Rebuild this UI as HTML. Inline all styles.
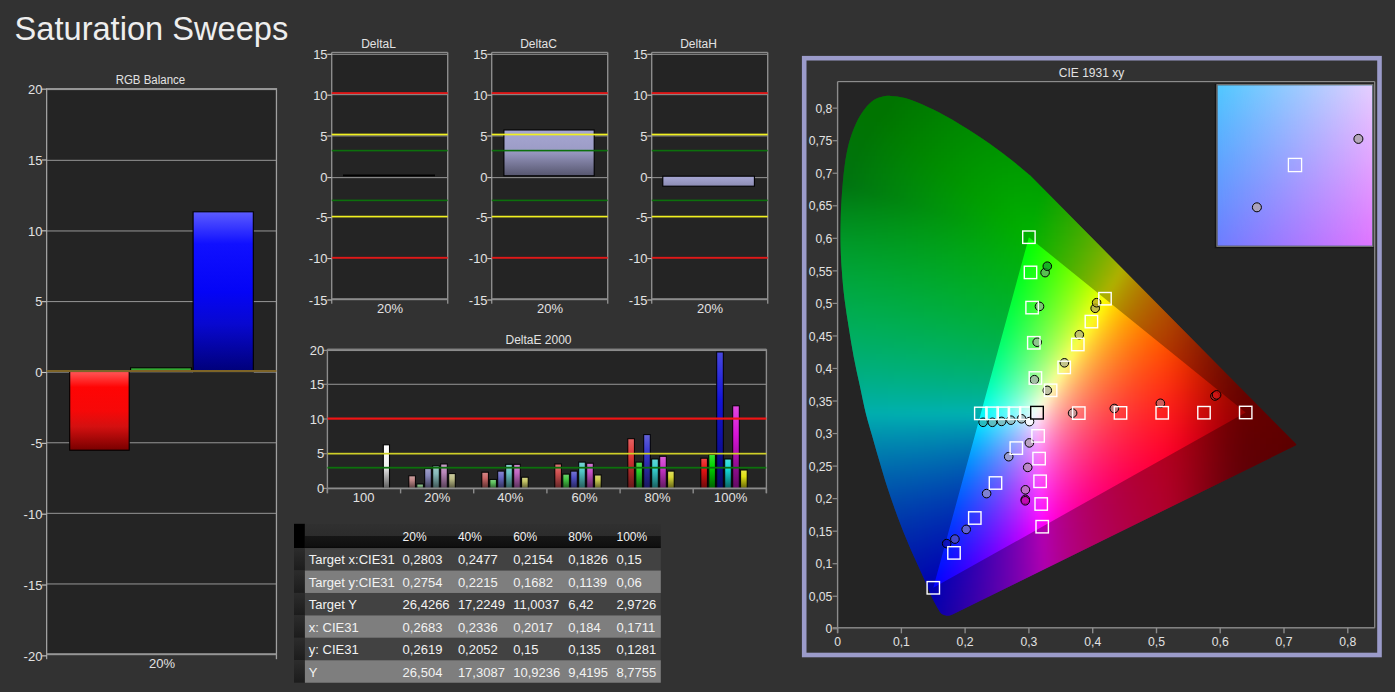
<!DOCTYPE html>
<html><head><meta charset="utf-8"><title>Saturation Sweeps</title>
<style>
html,body{margin:0;padding:0;background:#323232}
body{width:1395px;height:692px;overflow:hidden;position:relative}
svg{position:absolute;left:0;top:0;display:block}
text{font-family:"Liberation Sans",sans-serif;fill:#e2e2e2;font-size:12px}
.t{font-size:12px;text-anchor:middle}
.r{text-anchor:end;font-size:13px}
.m{text-anchor:middle;font-size:13px}
.ttl{font-size:33.7px;fill:#eeeeee}
.tb{font-size:13px;fill:#f2f2f2}
.th{font-size:12px;fill:#f2f2f2}
#cells rect{width:7px;height:7px}
</style></head><body>
<svg width="1395" height="692" viewBox="0 0 1395 692">
<defs>
<linearGradient id="gR" x1="0" y1="0" x2="0" y2="1"><stop offset="0" stop-color="#ff5858"/><stop offset="0.2" stop-color="#ff0404"/><stop offset="0.5" stop-color="#f60808"/><stop offset="0.7" stop-color="#d41010"/><stop offset="1" stop-color="#780000"/></linearGradient>
<linearGradient id="gB" x1="0" y1="0" x2="0" y2="1"><stop offset="0" stop-color="#5c5cff"/><stop offset="0.2" stop-color="#1010ff"/><stop offset="0.5" stop-color="#0404f6"/><stop offset="0.7" stop-color="#0808d0"/><stop offset="1" stop-color="#000078"/></linearGradient>
<linearGradient id="gG" x1="0" y1="0" x2="0" y2="1"><stop offset="0" stop-color="#40c040"/><stop offset="1" stop-color="#1c8a1c"/></linearGradient>
<linearGradient id="gL" x1="0" y1="0" x2="0" y2="1"><stop offset="0" stop-color="#a6a6d2"/><stop offset="0.45" stop-color="#9c9cc6"/><stop offset="1" stop-color="#56566e"/></linearGradient>
<linearGradient id="gL2" x1="0" y1="0" x2="0" y2="1"><stop offset="0" stop-color="#a8a8d4"/><stop offset="1" stop-color="#8c8cb4"/></linearGradient>

<linearGradient id="bw" x1="0" y1="0" x2="0" y2="1"><stop offset="0" stop-color="#ffffff"/><stop offset="0.5" stop-color="#f0f0f0"/><stop offset="1" stop-color="#5a5a5a"/></linearGradient>
<linearGradient id="b0r" x1="0" y1="0" x2="0" y2="1"><stop offset="0" stop-color="#cda1a1"/><stop offset="0.35" stop-color="#bf8787"/><stop offset="1" stop-color="#563d3d"/></linearGradient>
<linearGradient id="b0g" x1="0" y1="0" x2="0" y2="1"><stop offset="0" stop-color="#9ec99e"/><stop offset="0.35" stop-color="#82ba82"/><stop offset="1" stop-color="#3a543a"/></linearGradient>
<linearGradient id="b0b" x1="0" y1="0" x2="0" y2="1"><stop offset="0" stop-color="#a1a1c9"/><stop offset="0.35" stop-color="#8787ba"/><stop offset="1" stop-color="#3d3d54"/></linearGradient>
<linearGradient id="b0c" x1="0" y1="0" x2="0" y2="1"><stop offset="0" stop-color="#a1c9c9"/><stop offset="0.35" stop-color="#87baba"/><stop offset="1" stop-color="#3d5454"/></linearGradient>
<linearGradient id="b0m" x1="0" y1="0" x2="0" y2="1"><stop offset="0" stop-color="#c9a1c9"/><stop offset="0.35" stop-color="#ba87ba"/><stop offset="1" stop-color="#543d54"/></linearGradient>
<linearGradient id="b0y" x1="0" y1="0" x2="0" y2="1"><stop offset="0" stop-color="#cccca1"/><stop offset="0.35" stop-color="#bdbd87"/><stop offset="1" stop-color="#55553d"/></linearGradient>
<linearGradient id="b1r" x1="0" y1="0" x2="0" y2="1"><stop offset="0" stop-color="#d68989"/><stop offset="0.35" stop-color="#cb6868"/><stop offset="1" stop-color="#5b2f2f"/></linearGradient>
<linearGradient id="b1g" x1="0" y1="0" x2="0" y2="1"><stop offset="0" stop-color="#82cf82"/><stop offset="0.35" stop-color="#5fc25f"/><stop offset="1" stop-color="#2b572b"/></linearGradient>
<linearGradient id="b1b" x1="0" y1="0" x2="0" y2="1"><stop offset="0" stop-color="#8989cf"/><stop offset="0.35" stop-color="#6868c2"/><stop offset="1" stop-color="#2f2f57"/></linearGradient>
<linearGradient id="b1c" x1="0" y1="0" x2="0" y2="1"><stop offset="0" stop-color="#89cfcf"/><stop offset="0.35" stop-color="#68c2c2"/><stop offset="1" stop-color="#2f5757"/></linearGradient>
<linearGradient id="b1m" x1="0" y1="0" x2="0" y2="1"><stop offset="0" stop-color="#cf89cf"/><stop offset="0.35" stop-color="#c268c2"/><stop offset="1" stop-color="#572f57"/></linearGradient>
<linearGradient id="b1y" x1="0" y1="0" x2="0" y2="1"><stop offset="0" stop-color="#d3d389"/><stop offset="0.35" stop-color="#c7c768"/><stop offset="1" stop-color="#5a5a2f"/></linearGradient>
<linearGradient id="b2r" x1="0" y1="0" x2="0" y2="1"><stop offset="0" stop-color="#dd7878"/><stop offset="0.35" stop-color="#d35252"/><stop offset="1" stop-color="#5f2525"/></linearGradient>
<linearGradient id="b2g" x1="0" y1="0" x2="0" y2="1"><stop offset="0" stop-color="#6fd36f"/><stop offset="0.35" stop-color="#46c746"/><stop offset="1" stop-color="#1f5a1f"/></linearGradient>
<linearGradient id="b2b" x1="0" y1="0" x2="0" y2="1"><stop offset="0" stop-color="#7878d3"/><stop offset="0.35" stop-color="#5252c7"/><stop offset="1" stop-color="#25255a"/></linearGradient>
<linearGradient id="b2c" x1="0" y1="0" x2="0" y2="1"><stop offset="0" stop-color="#78d3d3"/><stop offset="0.35" stop-color="#52c7c7"/><stop offset="1" stop-color="#255a5a"/></linearGradient>
<linearGradient id="b2m" x1="0" y1="0" x2="0" y2="1"><stop offset="0" stop-color="#d378d3"/><stop offset="0.35" stop-color="#c752c7"/><stop offset="1" stop-color="#5a255a"/></linearGradient>
<linearGradient id="b2y" x1="0" y1="0" x2="0" y2="1"><stop offset="0" stop-color="#d8d878"/><stop offset="0.35" stop-color="#cdcd52"/><stop offset="1" stop-color="#5c5c25"/></linearGradient>
<linearGradient id="b3r" x1="0" y1="0" x2="0" y2="1"><stop offset="0" stop-color="#e56262"/><stop offset="0.35" stop-color="#de3636"/><stop offset="1" stop-color="#641818"/></linearGradient>
<linearGradient id="b3g" x1="0" y1="0" x2="0" y2="1"><stop offset="0" stop-color="#57d957"/><stop offset="0.35" stop-color="#27ce27"/><stop offset="1" stop-color="#125d12"/></linearGradient>
<linearGradient id="b3b" x1="0" y1="0" x2="0" y2="1"><stop offset="0" stop-color="#6262d9"/><stop offset="0.35" stop-color="#3636ce"/><stop offset="1" stop-color="#18185d"/></linearGradient>
<linearGradient id="b3c" x1="0" y1="0" x2="0" y2="1"><stop offset="0" stop-color="#62d9d9"/><stop offset="0.35" stop-color="#36cece"/><stop offset="1" stop-color="#185d5d"/></linearGradient>
<linearGradient id="b3m" x1="0" y1="0" x2="0" y2="1"><stop offset="0" stop-color="#d962d9"/><stop offset="0.35" stop-color="#ce36ce"/><stop offset="1" stop-color="#5d185d"/></linearGradient>
<linearGradient id="b3y" x1="0" y1="0" x2="0" y2="1"><stop offset="0" stop-color="#dfdf62"/><stop offset="0.35" stop-color="#d6d636"/><stop offset="1" stop-color="#606018"/></linearGradient>
<linearGradient id="b4r" x1="0" y1="0" x2="0" y2="1"><stop offset="0" stop-color="#ef4848"/><stop offset="0.35" stop-color="#eb1414"/><stop offset="1" stop-color="#6a0909"/></linearGradient>
<linearGradient id="b4g" x1="0" y1="0" x2="0" y2="1"><stop offset="0" stop-color="#38e038"/><stop offset="0.35" stop-color="#00d700"/><stop offset="1" stop-color="#006100"/></linearGradient>
<linearGradient id="b4b" x1="0" y1="0" x2="0" y2="1"><stop offset="0" stop-color="#4848e0"/><stop offset="0.35" stop-color="#1414d7"/><stop offset="1" stop-color="#090961"/></linearGradient>
<linearGradient id="b4c" x1="0" y1="0" x2="0" y2="1"><stop offset="0" stop-color="#48e0e0"/><stop offset="0.35" stop-color="#14d7d7"/><stop offset="1" stop-color="#096161"/></linearGradient>
<linearGradient id="b4m" x1="0" y1="0" x2="0" y2="1"><stop offset="0" stop-color="#e048e0"/><stop offset="0.35" stop-color="#d714d7"/><stop offset="1" stop-color="#610961"/></linearGradient>
<linearGradient id="b4y" x1="0" y1="0" x2="0" y2="1"><stop offset="0" stop-color="#e8e848"/><stop offset="0.35" stop-color="#e1e114"/><stop offset="1" stop-color="#656509"/></linearGradient>
<linearGradient id="hd" x1="0" y1="0" x2="0" y2="1"><stop offset="0" stop-color="#303030"/><stop offset="0.49" stop-color="#2c2c2c"/><stop offset="0.51" stop-color="#161616"/><stop offset="0.9" stop-color="#101010"/><stop offset="1" stop-color="#080808"/></linearGradient>
<linearGradient id="rh" x1="0" y1="0" x2="0" y2="1"><stop offset="0" stop-color="#2c2c2c"/><stop offset="1" stop-color="#1c1c1c"/></linearGradient>
<clipPath id="lc"><path d="M946.7 615.8C946.1 615.6 944.1 615.2 943.0 614.6C941.9 614.0 941.4 613.8 940.3 612.4C939.2 611.0 938.2 609.2 936.6 606.3C935.0 603.3 933.2 600.0 930.8 594.7C928.4 589.4 925.7 582.7 922.1 574.5C918.5 566.3 913.2 555.2 909.1 545.6C905.0 536.0 901.2 526.3 897.6 516.7C894.0 507.1 890.6 497.4 887.5 487.8C884.4 478.2 881.3 467.5 878.8 458.9C876.2 450.3 874.3 443.4 872.2 436.0C870.1 428.6 868.2 422.9 866.1 414.5C864.0 406.1 861.9 395.2 859.8 385.6C857.7 376.0 855.5 366.3 853.7 356.7C851.9 347.1 850.3 337.4 848.8 327.8C847.3 318.2 845.7 308.5 844.5 298.9C843.3 289.3 842.4 279.0 841.8 270.0C841.1 261.0 840.8 253.6 840.6 245.0C840.4 236.4 840.5 226.9 840.7 218.7C840.9 210.5 841.2 204.3 841.8 195.6C842.4 186.9 843.3 175.4 844.5 166.7C845.7 158.0 846.9 150.8 848.8 143.6C850.7 136.4 853.4 129.2 856.0 123.4C858.6 117.6 861.8 112.8 864.7 108.9C867.6 105.0 870.5 102.2 873.4 100.2C876.3 98.2 879.1 97.5 882.0 96.8C884.9 96.1 886.9 95.7 890.7 95.9C894.6 96.1 899.8 96.5 905.1 97.9C910.4 99.4 915.8 101.6 922.5 104.6C929.2 107.6 936.9 111.3 945.6 116.1C954.3 120.9 964.9 127.2 974.5 133.5C984.1 139.8 994.1 146.8 1003.4 153.7C1012.6 160.6 1025.6 171.6 1030.0 175.2L1295.3 443.3Q1297.4 444.8 1295.0 445.8L953.0 614.2Q949.5 615.9 946.7 615.8Z"/></clipPath>
<filter id="bl" filterUnits="userSpaceOnUse" x="810" y="70" width="520" height="580" color-interpolation-filters="sRGB"><feGaussianBlur stdDeviation="3.2"/></filter>
<linearGradient id="iL" x1="0" y1="0" x2="0" y2="1"><stop offset="0" stop-color="#50c8ff"/><stop offset="1" stop-color="#6e7dff"/></linearGradient>
<linearGradient id="iR" x1="0" y1="0" x2="0" y2="1"><stop offset="0" stop-color="#e6ceff"/><stop offset="1" stop-color="#e074ff"/></linearGradient>
<linearGradient id="iM" x1="0" y1="0" x2="1" y2="0"><stop offset="0" stop-color="#fff" stop-opacity="0"/><stop offset="1" stop-color="#fff" stop-opacity="1"/></linearGradient>
<mask id="im" maskUnits="userSpaceOnUse" x="1217.4" y="85.2" width="155.0" height="160.6"><rect x="1217.4" y="85.2" width="155.0" height="160.6" fill="url(#iM)"/></mask>
</defs>
<text class="ttl" x="14.6" y="39.9" textLength="273.6" lengthAdjust="spacingAndGlyphs">Saturation Sweeps</text>
<rect x="46.6" y="89.1" width="229.8" height="565.1" fill="#242424"/>
<rect x="46.6" y="583.40" width="229.8" height="1.1" fill="#8c8c8c"/>
<rect x="46.6" y="512.80" width="229.8" height="1.1" fill="#8c8c8c"/>
<rect x="46.6" y="442.20" width="229.8" height="1.1" fill="#8c8c8c"/>
<rect x="46.6" y="371.60" width="229.8" height="1.1" fill="#8c8c8c"/>
<rect x="46.6" y="301.00" width="229.8" height="1.1" fill="#8c8c8c"/>
<rect x="46.6" y="230.40" width="229.8" height="1.1" fill="#8c8c8c"/>
<rect x="46.6" y="159.80" width="229.8" height="1.1" fill="#8c8c8c"/>
<rect x="46.0" y="88.1" width="1.3" height="571.1" fill="#a0a0a0"/>
<rect x="275.8" y="88.1" width="1.3" height="571.1" fill="#a0a0a0"/>
<rect x="46.6" y="88.0" width="229.8" height="2.1" fill="#969696"/>
<rect x="46.6" y="653.2" width="229.8" height="2" fill="#969696"/>
<rect x="42.0" y="655.31" width="4.5" height="1.1" fill="#c8c8c8"/>
<text class="r" x="42.4" y="660.6">-20</text>
<rect x="42.0" y="584.47" width="4.5" height="1.1" fill="#c8c8c8"/>
<text class="r" x="42.4" y="589.7">-15</text>
<rect x="42.0" y="513.63" width="4.5" height="1.1" fill="#c8c8c8"/>
<text class="r" x="42.4" y="518.9">-10</text>
<rect x="42.0" y="442.79" width="4.5" height="1.1" fill="#c8c8c8"/>
<text class="r" x="42.4" y="448.0">-5</text>
<rect x="42.0" y="371.95" width="4.5" height="1.1" fill="#c8c8c8"/>
<text class="r" x="42.4" y="377.2">0</text>
<rect x="42.0" y="301.11" width="4.5" height="1.1" fill="#c8c8c8"/>
<text class="r" x="42.4" y="306.4">5</text>
<rect x="42.0" y="230.27" width="4.5" height="1.1" fill="#c8c8c8"/>
<text class="r" x="42.4" y="235.5">10</text>
<rect x="42.0" y="159.43" width="4.5" height="1.1" fill="#c8c8c8"/>
<text class="r" x="42.4" y="164.7">15</text>
<rect x="42.0" y="88.59" width="4.5" height="1.1" fill="#c8c8c8"/>
<text class="r" x="42.4" y="93.8">20</text>
<rect x="69.7" y="371.5" width="59.5" height="78.7" fill="url(#gR)" stroke="#000" stroke-width="1.1"/>
<rect x="130.6" y="367.8" width="60.8" height="4" fill="url(#gG)" stroke="#000" stroke-width="1.1"/>
<rect x="193.1" y="211.8" width="60.2" height="160.2" fill="url(#gB)" stroke="#000" stroke-width="1.1"/>
<rect x="46.6" y="370.0" width="229.8" height="2" fill="#7d6428"/>
<text class="t" x="150.4" y="83.6" textLength="69.5" lengthAdjust="spacingAndGlyphs">RGB Balance</text>
<text class="m" x="162" y="668.3">20%</text>
<rect x="331.7" y="52.4" width="116.0" height="246.8" fill="#242424"/>
<rect x="331.7" y="53.75" width="116.0" height="1.1" fill="#8c8c8c"/>
<rect x="331.7" y="94.05" width="116.0" height="1.1" fill="#8c8c8c"/>
<rect x="331.7" y="135.35" width="116.0" height="1.1" fill="#8c8c8c"/>
<rect x="331.7" y="177.05" width="116.0" height="1.1" fill="#8c8c8c"/>
<rect x="331.0" y="52.4" width="1.4" height="251.3" fill="#8c8c8c"/>
<rect x="447.0" y="52.4" width="1.4" height="251.3" fill="#8c8c8c"/>
<rect x="331.7" y="51.8" width="116.0" height="1.3" fill="#8c8c8c"/>
<rect x="331.7" y="298.2" width="116.0" height="2" fill="#8c8c8c"/>
<rect x="343" y="174.5" width="92" height="1.8" fill="#000"/>
<rect x="331.7" y="92.15" width="116.0" height="1.9" fill="#e01818"/>
<rect x="331.7" y="256.85" width="116.0" height="1.9" fill="#e01818"/>
<rect x="331.7" y="133.65" width="116.0" height="1.7" fill="#f0f020"/>
<rect x="331.7" y="215.75" width="116.0" height="1.7" fill="#f0f020"/>
<rect x="331.7" y="149.80" width="116.0" height="1.6" fill="#0c700c"/>
<rect x="331.7" y="199.60" width="116.0" height="1.6" fill="#0c700c"/>
<rect x="327.3" y="53.75" width="4.2" height="1.1" fill="#c8c8c8"/>
<text class="r" x="327.6" y="59.0">15</text>
<rect x="327.3" y="94.65" width="4.2" height="1.1" fill="#c8c8c8"/>
<text class="r" x="327.6" y="99.9">10</text>
<rect x="327.3" y="135.45" width="4.2" height="1.1" fill="#c8c8c8"/>
<text class="r" x="327.6" y="140.7">5</text>
<rect x="327.3" y="177.05" width="4.2" height="1.1" fill="#c8c8c8"/>
<text class="r" x="327.6" y="182.3">0</text>
<rect x="327.3" y="217.05" width="4.2" height="1.1" fill="#c8c8c8"/>
<text class="r" x="327.6" y="222.3">-5</text>
<rect x="327.3" y="258.05" width="4.2" height="1.1" fill="#c8c8c8"/>
<text class="r" x="327.6" y="263.3">-10</text>
<rect x="327.3" y="299.45" width="4.2" height="1.1" fill="#c8c8c8"/>
<text class="r" x="327.6" y="304.7">-15</text>
<text class="t" x="378.5" y="47.8">DeltaL</text>
<text class="m" x="390.0" y="313.2">20%</text>
<rect x="491.7" y="52.4" width="116.0" height="246.8" fill="#242424"/>
<rect x="491.7" y="53.75" width="116.0" height="1.1" fill="#8c8c8c"/>
<rect x="491.7" y="94.05" width="116.0" height="1.1" fill="#8c8c8c"/>
<rect x="491.7" y="135.35" width="116.0" height="1.1" fill="#8c8c8c"/>
<rect x="491.7" y="177.05" width="116.0" height="1.1" fill="#8c8c8c"/>
<rect x="491.0" y="52.4" width="1.4" height="251.3" fill="#8c8c8c"/>
<rect x="607.0" y="52.4" width="1.4" height="251.3" fill="#8c8c8c"/>
<rect x="491.7" y="51.8" width="116.0" height="1.3" fill="#8c8c8c"/>
<rect x="491.7" y="298.2" width="116.0" height="2" fill="#8c8c8c"/>
<rect x="503.9" y="130" width="90.3" height="45.8" fill="url(#gL)" stroke="#000" stroke-width="1.1"/>
<rect x="491.7" y="92.15" width="116.0" height="1.9" fill="#e01818"/>
<rect x="491.7" y="256.85" width="116.0" height="1.9" fill="#e01818"/>
<rect x="491.7" y="133.65" width="116.0" height="1.7" fill="#f0f020"/>
<rect x="491.7" y="215.75" width="116.0" height="1.7" fill="#f0f020"/>
<rect x="491.7" y="149.80" width="116.0" height="1.6" fill="#0c700c"/>
<rect x="491.7" y="199.60" width="116.0" height="1.6" fill="#0c700c"/>
<rect x="487.3" y="53.75" width="4.2" height="1.1" fill="#c8c8c8"/>
<text class="r" x="487.6" y="59.0">15</text>
<rect x="487.3" y="94.65" width="4.2" height="1.1" fill="#c8c8c8"/>
<text class="r" x="487.6" y="99.9">10</text>
<rect x="487.3" y="135.45" width="4.2" height="1.1" fill="#c8c8c8"/>
<text class="r" x="487.6" y="140.7">5</text>
<rect x="487.3" y="177.05" width="4.2" height="1.1" fill="#c8c8c8"/>
<text class="r" x="487.6" y="182.3">0</text>
<rect x="487.3" y="217.05" width="4.2" height="1.1" fill="#c8c8c8"/>
<text class="r" x="487.6" y="222.3">-5</text>
<rect x="487.3" y="258.05" width="4.2" height="1.1" fill="#c8c8c8"/>
<text class="r" x="487.6" y="263.3">-10</text>
<rect x="487.3" y="299.45" width="4.2" height="1.1" fill="#c8c8c8"/>
<text class="r" x="487.6" y="304.7">-15</text>
<text class="t" x="538.5" y="47.8">DeltaC</text>
<text class="m" x="550.0" y="313.2">20%</text>
<rect x="651.7" y="52.4" width="116.0" height="246.8" fill="#242424"/>
<rect x="651.7" y="53.75" width="116.0" height="1.1" fill="#8c8c8c"/>
<rect x="651.7" y="94.05" width="116.0" height="1.1" fill="#8c8c8c"/>
<rect x="651.7" y="135.35" width="116.0" height="1.1" fill="#8c8c8c"/>
<rect x="651.7" y="177.05" width="116.0" height="1.1" fill="#8c8c8c"/>
<rect x="651.0" y="52.4" width="1.4" height="251.3" fill="#8c8c8c"/>
<rect x="767.0" y="52.4" width="1.4" height="251.3" fill="#8c8c8c"/>
<rect x="651.7" y="51.8" width="116.0" height="1.3" fill="#8c8c8c"/>
<rect x="651.7" y="298.2" width="116.0" height="2" fill="#8c8c8c"/>
<rect x="662.8" y="176.2" width="91.6" height="10" fill="url(#gL2)" stroke="#000" stroke-width="1.1"/>
<rect x="651.7" y="92.15" width="116.0" height="1.9" fill="#e01818"/>
<rect x="651.7" y="256.85" width="116.0" height="1.9" fill="#e01818"/>
<rect x="651.7" y="133.65" width="116.0" height="1.7" fill="#f0f020"/>
<rect x="651.7" y="215.75" width="116.0" height="1.7" fill="#f0f020"/>
<rect x="651.7" y="149.80" width="116.0" height="1.6" fill="#0c700c"/>
<rect x="651.7" y="199.60" width="116.0" height="1.6" fill="#0c700c"/>
<rect x="647.3" y="53.75" width="4.2" height="1.1" fill="#c8c8c8"/>
<text class="r" x="647.6" y="59.0">15</text>
<rect x="647.3" y="94.65" width="4.2" height="1.1" fill="#c8c8c8"/>
<text class="r" x="647.6" y="99.9">10</text>
<rect x="647.3" y="135.45" width="4.2" height="1.1" fill="#c8c8c8"/>
<text class="r" x="647.6" y="140.7">5</text>
<rect x="647.3" y="177.05" width="4.2" height="1.1" fill="#c8c8c8"/>
<text class="r" x="647.6" y="182.3">0</text>
<rect x="647.3" y="217.05" width="4.2" height="1.1" fill="#c8c8c8"/>
<text class="r" x="647.6" y="222.3">-5</text>
<rect x="647.3" y="258.05" width="4.2" height="1.1" fill="#c8c8c8"/>
<text class="r" x="647.6" y="263.3">-10</text>
<rect x="647.3" y="299.45" width="4.2" height="1.1" fill="#c8c8c8"/>
<text class="r" x="647.6" y="304.7">-15</text>
<text class="t" x="698.5" y="47.8">DeltaH</text>
<text class="m" x="710.0" y="313.2">20%</text>
<rect x="327.4" y="349.2" width="439.0" height="139.2" fill="#242424"/>
<rect x="327.4" y="383.75" width="439.0" height="1.1" fill="#8c8c8c"/>
<rect x="327.4" y="349.95" width="439.0" height="1.1" fill="#8c8c8c"/>
<rect x="326.7" y="349.2" width="1.4" height="143.7" fill="#8c8c8c"/>
<rect x="765.7" y="349.2" width="1.4" height="143.7" fill="#8c8c8c"/>
<rect x="327.4" y="348.6" width="439.0" height="1.3" fill="#8c8c8c"/>
<rect x="383.3" y="444.8" width="6.2" height="43.5" fill="url(#bw)" stroke="#000" stroke-width="1.1"/>
<rect x="408.8" y="475.8" width="6.6" height="12.6" fill="url(#b0r)" stroke="#000" stroke-width="1"/>
<rect x="416.8" y="484.0" width="6.6" height="4.4" fill="url(#b0g)" stroke="#000" stroke-width="1"/>
<rect x="424.7" y="468.6" width="6.6" height="19.8" fill="url(#b0b)" stroke="#000" stroke-width="1"/>
<rect x="432.7" y="465.9" width="6.6" height="22.5" fill="url(#b0c)" stroke="#000" stroke-width="1"/>
<rect x="440.7" y="464.0" width="6.6" height="24.4" fill="url(#b0m)" stroke="#000" stroke-width="1"/>
<rect x="448.7" y="473.6" width="6.6" height="14.8" fill="url(#b0y)" stroke="#000" stroke-width="1"/>
<rect x="481.8" y="472.2" width="6.6" height="16.2" fill="url(#b1r)" stroke="#000" stroke-width="1"/>
<rect x="489.8" y="479.4" width="6.6" height="9.0" fill="url(#b1g)" stroke="#000" stroke-width="1"/>
<rect x="497.7" y="471.1" width="6.6" height="17.3" fill="url(#b1b)" stroke="#000" stroke-width="1"/>
<rect x="505.7" y="464.3" width="6.6" height="24.1" fill="url(#b1c)" stroke="#000" stroke-width="1"/>
<rect x="513.7" y="464.3" width="6.6" height="24.1" fill="url(#b1m)" stroke="#000" stroke-width="1"/>
<rect x="521.6" y="477.2" width="6.6" height="11.2" fill="url(#b1y)" stroke="#000" stroke-width="1"/>
<rect x="554.8" y="464.0" width="6.6" height="24.4" fill="url(#b2r)" stroke="#000" stroke-width="1"/>
<rect x="562.8" y="474.1" width="6.6" height="14.3" fill="url(#b2g)" stroke="#000" stroke-width="1"/>
<rect x="570.7" y="471.1" width="6.6" height="17.3" fill="url(#b2b)" stroke="#000" stroke-width="1"/>
<rect x="578.7" y="462.1" width="6.6" height="26.3" fill="url(#b2c)" stroke="#000" stroke-width="1"/>
<rect x="586.7" y="463.2" width="6.6" height="25.2" fill="url(#b2m)" stroke="#000" stroke-width="1"/>
<rect x="594.6" y="475.0" width="6.6" height="13.4" fill="url(#b2y)" stroke="#000" stroke-width="1"/>
<rect x="627.8" y="438.7" width="6.6" height="49.7" fill="url(#b3r)" stroke="#000" stroke-width="1"/>
<rect x="635.8" y="462.1" width="6.6" height="26.3" fill="url(#b3g)" stroke="#000" stroke-width="1"/>
<rect x="643.7" y="434.6" width="6.6" height="53.8" fill="url(#b3b)" stroke="#000" stroke-width="1"/>
<rect x="651.7" y="459.0" width="6.6" height="29.4" fill="url(#b3c)" stroke="#000" stroke-width="1"/>
<rect x="659.7" y="456.3" width="6.6" height="32.1" fill="url(#b3m)" stroke="#000" stroke-width="1"/>
<rect x="667.6" y="471.1" width="6.6" height="17.3" fill="url(#b3y)" stroke="#000" stroke-width="1"/>
<rect x="700.8" y="458.2" width="6.6" height="30.2" fill="url(#b4r)" stroke="#000" stroke-width="1"/>
<rect x="708.8" y="454.4" width="6.6" height="34.0" fill="url(#b4g)" stroke="#000" stroke-width="1"/>
<rect x="716.7" y="352.0" width="6.6" height="136.4" fill="url(#b4b)" stroke="#000" stroke-width="1"/>
<rect x="724.7" y="459.0" width="6.6" height="29.4" fill="url(#b4c)" stroke="#000" stroke-width="1"/>
<rect x="732.7" y="405.8" width="6.6" height="82.6" fill="url(#b4m)" stroke="#000" stroke-width="1"/>
<rect x="740.6" y="470.0" width="6.6" height="18.4" fill="url(#b4y)" stroke="#000" stroke-width="1"/>
<rect x="327.4" y="417.5" width="439.0" height="2.2" fill="#f01414"/>
<rect x="327.4" y="452.8" width="439.0" height="1.7" fill="#cfcf28"/>
<rect x="327.4" y="466.8" width="439.0" height="1.8" fill="#0c700c"/>
<rect x="327.4" y="487.5" width="439.0" height="1.8" fill="#8c8c8c"/>
<rect x="326.7" y="488.4" width="1.4" height="5" fill="#8c8c8c"/>
<rect x="399.9" y="488.4" width="1.4" height="5" fill="#8c8c8c"/>
<rect x="473.0" y="488.4" width="1.4" height="5" fill="#8c8c8c"/>
<rect x="546.2" y="488.4" width="1.4" height="5" fill="#8c8c8c"/>
<rect x="619.4" y="488.4" width="1.4" height="5" fill="#8c8c8c"/>
<rect x="692.5" y="488.4" width="1.4" height="5" fill="#8c8c8c"/>
<rect x="765.7" y="488.4" width="1.4" height="5" fill="#8c8c8c"/>
<rect x="323.2" y="487.80" width="4.5" height="1.2" fill="#8c8c8c"/>
<text class="r" x="324.2" y="492.9">0</text>
<rect x="323.2" y="453.10" width="4.5" height="1.2" fill="#8c8c8c"/>
<text class="r" x="324.2" y="458.2">5</text>
<rect x="323.2" y="418.40" width="4.5" height="1.2" fill="#8c8c8c"/>
<text class="r" x="324.2" y="423.5">10</text>
<rect x="323.2" y="383.70" width="4.5" height="1.2" fill="#8c8c8c"/>
<text class="r" x="324.2" y="388.8">15</text>
<rect x="323.2" y="349.80" width="4.5" height="1.2" fill="#8c8c8c"/>
<text class="r" x="324.2" y="354.9">20</text>
<text class="m" x="363.7" y="502.4">100</text>
<text class="m" x="437.2" y="502.4">20%</text>
<text class="m" x="510.2" y="502.4">40%</text>
<text class="m" x="584.5" y="502.4">60%</text>
<text class="m" x="657.5" y="502.4">80%</text>
<text class="m" x="730.7" y="502.4">100%</text>
<text class="t" x="538.5" y="343.6">DeltaE 2000</text>
<rect x="294.0" y="523.8" width="10.9" height="24.3" fill="#000"/>
<rect x="304.9" y="523.8" width="355.9" height="24.3" fill="url(#hd)"/>
<text class="th" x="402.6" y="540.9">20%</text>
<text class="th" x="457.9" y="540.9">40%</text>
<text class="th" x="513.2" y="540.9">60%</text>
<text class="th" x="568.3" y="540.9">80%</text>
<text class="th" x="616.5" y="540.9">100%</text>
<rect x="294.0" y="548.10" width="10.9" height="22.43" fill="url(#rh)"/>
<rect x="304.9" y="548.10" width="355.9" height="22.48" fill="#424242"/>
<text class="tb" x="308.8" y="564.4">Target x:CIE31</text>
<text class="tb" x="402.6" y="564.4">0,2803</text>
<text class="tb" x="457.9" y="564.4">0,2477</text>
<text class="tb" x="513.2" y="564.4">0,2154</text>
<text class="tb" x="568.3" y="564.4">0,1826</text>
<text class="tb" x="616.5" y="564.4">0,15</text>
<rect x="294.0" y="570.53" width="10.9" height="22.43" fill="url(#rh)"/>
<rect x="304.9" y="570.53" width="355.9" height="22.48" fill="#7e7e7e"/>
<text class="tb" x="308.8" y="586.8">Target y:CIE31</text>
<text class="tb" x="402.6" y="586.8">0,2754</text>
<text class="tb" x="457.9" y="586.8">0,2215</text>
<text class="tb" x="513.2" y="586.8">0,1682</text>
<text class="tb" x="568.3" y="586.8">0,1139</text>
<text class="tb" x="616.5" y="586.8">0,06</text>
<rect x="294.0" y="592.96" width="10.9" height="22.43" fill="url(#rh)"/>
<rect x="304.9" y="592.96" width="355.9" height="22.48" fill="#424242"/>
<text class="tb" x="308.8" y="609.3">Target Y</text>
<text class="tb" x="402.6" y="609.3">26,4266</text>
<text class="tb" x="457.9" y="609.3">17,2249</text>
<text class="tb" x="513.2" y="609.3">11,0037</text>
<text class="tb" x="568.3" y="609.3">6,42</text>
<text class="tb" x="616.5" y="609.3">2,9726</text>
<rect x="294.0" y="615.39" width="10.9" height="22.43" fill="url(#rh)"/>
<rect x="304.9" y="615.39" width="355.9" height="22.48" fill="#7e7e7e"/>
<text class="tb" x="308.8" y="631.7">x: CIE31</text>
<text class="tb" x="402.6" y="631.7">0,2683</text>
<text class="tb" x="457.9" y="631.7">0,2336</text>
<text class="tb" x="513.2" y="631.7">0,2017</text>
<text class="tb" x="568.3" y="631.7">0,184</text>
<text class="tb" x="616.5" y="631.7">0,1711</text>
<rect x="294.0" y="637.82" width="10.9" height="22.43" fill="url(#rh)"/>
<rect x="304.9" y="637.82" width="355.9" height="22.48" fill="#424242"/>
<text class="tb" x="308.8" y="654.1">y: CIE31</text>
<text class="tb" x="402.6" y="654.1">0,2619</text>
<text class="tb" x="457.9" y="654.1">0,2052</text>
<text class="tb" x="513.2" y="654.1">0,15</text>
<text class="tb" x="568.3" y="654.1">0,135</text>
<text class="tb" x="616.5" y="654.1">0,1281</text>
<rect x="294.0" y="660.25" width="10.9" height="22.43" fill="url(#rh)"/>
<rect x="304.9" y="660.25" width="355.9" height="22.48" fill="#7e7e7e"/>
<text class="tb" x="308.8" y="676.5">Y</text>
<text class="tb" x="402.6" y="676.5">26,504</text>
<text class="tb" x="457.9" y="676.5">17,3087</text>
<text class="tb" x="513.2" y="676.5">10,9236</text>
<text class="tb" x="568.3" y="676.5">9,4195</text>
<text class="tb" x="616.5" y="676.5">8,7755</text>
<rect x="804.2" y="58.2" width="575.3" height="596.8" fill="#323232" stroke="#9b9bca" stroke-width="4.6"/>
<rect x="837.6" y="81.6" width="537.1" height="546.2" fill="#242424"/>
<g clip-path="url(#lc)"><g id="cells" filter="url(#bl)">
<rect x=876 y=84 fill=#00a600 /><rect x=882 y=84 fill=#00a600 /><rect x=888 y=84 fill=#00a600 /><rect x=894 y=84 fill=#00a600 /><rect x=900 y=84 fill=#00a600 />
<rect x=864 y=90 fill=#00a600 /><rect x=870 y=90 fill=#00a600 /><rect x=876 y=90 fill=#00a600 /><rect x=882 y=90 fill=#00a600 /><rect x=888 y=90 fill=#00a600 /><rect x=894 y=90 fill=#00a600 /><rect x=900 y=90 fill=#00a700 /><rect x=906 y=90 fill=#00a800 /><rect x=912 y=90 fill=#00aa00 /><rect x=918 y=90 fill=#00ac00 />
<rect x=858 y=96 fill=#00a600 /><rect x=864 y=96 fill=#00a600 /><rect x=870 y=96 fill=#00a600 /><rect x=876 y=96 fill=#00a600 /><rect x=882 y=96 fill=#00a600 /><rect x=888 y=96 fill=#00a600 /><rect x=894 y=96 fill=#00a700 /><rect x=900 y=96 fill=#00a900 /><rect x=906 y=96 fill=#00ab00 /><rect x=912 y=96 fill=#00ac00 /><rect x=918 y=96 fill=#00ae00 /><rect x=924 y=96 fill=#00b000 /><rect x=930 y=96 fill=#00b100 />
<rect x=852 y=102 fill=#00a602 /><rect x=858 y=102 fill=#00a601 /><rect x=864 y=102 fill=#00a600 /><rect x=870 y=102 fill=#00a600 /><rect x=876 y=102 fill=#00a600 /><rect x=882 y=102 fill=#00a600 /><rect x=888 y=102 fill=#00a700 /><rect x=894 y=102 fill=#00a900 /><rect x=900 y=102 fill=#00ab00 /><rect x=906 y=102 fill=#00ad00 /><rect x=912 y=102 fill=#00ae00 /><rect x=918 y=102 fill=#00b000 /><rect x=924 y=102 fill=#00b200 /><rect x=930 y=102 fill=#00b400 /><rect x=936 y=102 fill=#00b500 /><rect x=942 y=102 fill=#00b700 />
<rect x=852 y=108 fill=#00a603 /><rect x=858 y=108 fill=#00a602 /><rect x=864 y=108 fill=#00a601 /><rect x=870 y=108 fill=#00a600 /><rect x=876 y=108 fill=#00a600 /><rect x=882 y=108 fill=#00a600 /><rect x=888 y=108 fill=#00a800 /><rect x=894 y=108 fill=#00ab00 /><rect x=900 y=108 fill=#00ad00 /><rect x=906 y=108 fill=#00af00 /><rect x=912 y=108 fill=#00b000 /><rect x=918 y=108 fill=#00b200 /><rect x=924 y=108 fill=#00b400 /><rect x=930 y=108 fill=#00b600 /><rect x=936 y=108 fill=#00b800 /><rect x=942 y=108 fill=#00b900 /><rect x=948 y=108 fill=#00bb00 /><rect x=954 y=108 fill=#00bc00 />
<rect x=846 y=114 fill=#00a606 /><rect x=852 y=114 fill=#00a605 /><rect x=858 y=114 fill=#00a603 /><rect x=864 y=114 fill=#00a602 /><rect x=870 y=114 fill=#00a601 /><rect x=876 y=114 fill=#00a600 /><rect x=882 y=114 fill=#00a800 /><rect x=888 y=114 fill=#00aa00 /><rect x=894 y=114 fill=#00ac00 /><rect x=900 y=114 fill=#00ae00 /><rect x=906 y=114 fill=#00b000 /><rect x=912 y=114 fill=#00b200 /><rect x=918 y=114 fill=#00b400 /><rect x=924 y=114 fill=#00b600 /><rect x=930 y=114 fill=#00b800 /><rect x=936 y=114 fill=#00ba00 /><rect x=942 y=114 fill=#00bb00 /><rect x=948 y=114 fill=#00bd00 /><rect x=954 y=114 fill=#00bf00 /><rect x=960 y=114 fill=#00c000 />
<rect x=846 y=120 fill=#00a607 /><rect x=852 y=120 fill=#00a606 /><rect x=858 y=120 fill=#00a605 /><rect x=864 y=120 fill=#00a604 /><rect x=870 y=120 fill=#00a603 /><rect x=876 y=120 fill=#00a802 /><rect x=882 y=120 fill=#00aa01 /><rect x=888 y=120 fill=#00ac00 /><rect x=894 y=120 fill=#00ae00 /><rect x=900 y=120 fill=#00b000 /><rect x=906 y=120 fill=#00b200 /><rect x=912 y=120 fill=#00b400 /><rect x=918 y=120 fill=#00b600 /><rect x=924 y=120 fill=#00b800 /><rect x=930 y=120 fill=#00ba00 /><rect x=936 y=120 fill=#00bc00 /><rect x=942 y=120 fill=#00be00 /><rect x=948 y=120 fill=#00bf00 /><rect x=954 y=120 fill=#00c100 /><rect x=960 y=120 fill=#00c200 /><rect x=966 y=120 fill=#00c400 /><rect x=972 y=120 fill=#00c500 />
<rect x=840 y=126 fill=#00a609 /><rect x=846 y=126 fill=#00a608 /><rect x=852 y=126 fill=#00a607 /><rect x=858 y=126 fill=#00a606 /><rect x=864 y=126 fill=#00a605 /><rect x=870 y=126 fill=#00a704 /><rect x=876 y=126 fill=#00a903 /><rect x=882 y=126 fill=#00ac02 /><rect x=888 y=126 fill=#00ae01 /><rect x=894 y=126 fill=#00b000 /><rect x=900 y=126 fill=#00b200 /><rect x=906 y=126 fill=#00b400 /><rect x=912 y=126 fill=#00b600 /><rect x=918 y=126 fill=#00b800 /><rect x=924 y=126 fill=#00ba00 /><rect x=930 y=126 fill=#00bc00 /><rect x=936 y=126 fill=#00be00 /><rect x=942 y=126 fill=#00c000 /><rect x=948 y=126 fill=#00c200 /><rect x=954 y=126 fill=#00c300 /><rect x=960 y=126 fill=#00c500 /><rect x=966 y=126 fill=#00c600 /><rect x=972 y=126 fill=#00c700 /><rect x=978 y=126 fill=#00c900 /><rect x=984 y=126 fill=#00ca00 />
<rect x=840 y=132 fill=#00a60b /><rect x=846 y=132 fill=#00a60a /><rect x=852 y=132 fill=#00a609 /><rect x=858 y=132 fill=#00a608 /><rect x=864 y=132 fill=#00a607 /><rect x=870 y=132 fill=#00a806 /><rect x=876 y=132 fill=#00ab05 /><rect x=882 y=132 fill=#00ad04 /><rect x=888 y=132 fill=#00af02 /><rect x=894 y=132 fill=#00b201 /><rect x=900 y=132 fill=#00b400 /><rect x=906 y=132 fill=#00b600 /><rect x=912 y=132 fill=#00b800 /><rect x=918 y=132 fill=#00ba00 /><rect x=924 y=132 fill=#00bc00 /><rect x=930 y=132 fill=#00be00 /><rect x=936 y=132 fill=#00c000 /><rect x=942 y=132 fill=#00c200 /><rect x=948 y=132 fill=#00c400 /><rect x=954 y=132 fill=#00c500 /><rect x=960 y=132 fill=#00c700 /><rect x=966 y=132 fill=#00c800 /><rect x=972 y=132 fill=#00ca00 /><rect x=978 y=132 fill=#00cb00 /><rect x=984 y=132 fill=#00cc00 /><rect x=990 y=132 fill=#00cd00 />
<rect x=840 y=138 fill=#00a60c /><rect x=846 y=138 fill=#00a60b /><rect x=852 y=138 fill=#00a60a /><rect x=858 y=138 fill=#00a609 /><rect x=864 y=138 fill=#00a808 /><rect x=870 y=138 fill=#00aa07 /><rect x=876 y=138 fill=#00ac06 /><rect x=882 y=138 fill=#00af05 /><rect x=888 y=138 fill=#00b104 /><rect x=894 y=138 fill=#00b303 /><rect x=900 y=138 fill=#00b602 /><rect x=906 y=138 fill=#00b800 /><rect x=912 y=138 fill=#00ba00 /><rect x=918 y=138 fill=#00bc00 /><rect x=924 y=138 fill=#00be00 /><rect x=930 y=138 fill=#00c000 /><rect x=936 y=138 fill=#00c200 /><rect x=942 y=138 fill=#00c400 /><rect x=948 y=138 fill=#00c600 /><rect x=954 y=138 fill=#00c800 /><rect x=960 y=138 fill=#00c900 /><rect x=966 y=138 fill=#00cb00 /><rect x=972 y=138 fill=#00cc00 /><rect x=978 y=138 fill=#00ce00 /><rect x=984 y=138 fill=#00cf00 /><rect x=990 y=138 fill=#00d000 /><rect x=996 y=138 fill=#00d100 />
<rect x=834 y=144 fill=#00a60f /><rect x=840 y=144 fill=#00a60e /><rect x=846 y=144 fill=#00a60d /><rect x=852 y=144 fill=#00a60c /><rect x=858 y=144 fill=#00a60b /><rect x=864 y=144 fill=#00a90a /><rect x=870 y=144 fill=#00ab09 /><rect x=876 y=144 fill=#00ae08 /><rect x=882 y=144 fill=#00b007 /><rect x=888 y=144 fill=#00b306 /><rect x=894 y=144 fill=#00b504 /><rect x=900 y=144 fill=#00b703 /><rect x=906 y=144 fill=#00b902 /><rect x=912 y=144 fill=#00bc01 /><rect x=918 y=144 fill=#00be00 /><rect x=924 y=144 fill=#00c000 /><rect x=930 y=144 fill=#00c200 /><rect x=936 y=144 fill=#00c400 /><rect x=942 y=144 fill=#00c600 /><rect x=948 y=144 fill=#00c800 /><rect x=954 y=144 fill=#00ca00 /><rect x=960 y=144 fill=#00cb00 /><rect x=966 y=144 fill=#00cd00 /><rect x=972 y=144 fill=#00cf00 /><rect x=978 y=144 fill=#00d000 /><rect x=984 y=144 fill=#00d100 /><rect x=990 y=144 fill=#00d200 /><rect x=996 y=144 fill=#00d300 /><rect x=1002 y=144 fill=#00d400 /><rect x=1008 y=144 fill=#00d500 />
<rect x=834 y=150 fill=#00a611 /><rect x=840 y=150 fill=#00a610 /><rect x=846 y=150 fill=#00a60e /><rect x=852 y=150 fill=#00a60d /><rect x=858 y=150 fill=#00a80c /><rect x=864 y=150 fill=#00aa0c /><rect x=870 y=150 fill=#00ad0b /><rect x=876 y=150 fill=#00af0a /><rect x=882 y=150 fill=#00b208 /><rect x=888 y=150 fill=#00b407 /><rect x=894 y=150 fill=#00b606 /><rect x=900 y=150 fill=#00b905 /><rect x=906 y=150 fill=#00bb04 /><rect x=912 y=150 fill=#00bd02 /><rect x=918 y=150 fill=#00c001 /><rect x=924 y=150 fill=#00c200 /><rect x=930 y=150 fill=#00c400 /><rect x=936 y=150 fill=#00c600 /><rect x=942 y=150 fill=#00c800 /><rect x=948 y=150 fill=#00ca00 /><rect x=954 y=150 fill=#00cc00 /><rect x=960 y=150 fill=#00ce00 /><rect x=966 y=150 fill=#00cf00 /><rect x=972 y=150 fill=#00d100 /><rect x=978 y=150 fill=#00d200 /><rect x=984 y=150 fill=#00d400 /><rect x=990 y=150 fill=#00d500 /><rect x=996 y=150 fill=#00d600 /><rect x=1002 y=150 fill=#00d700 /><rect x=1008 y=150 fill=#00d800 /><rect x=1014 y=150 fill=#00d800 />
<rect x=834 y=156 fill=#00a612 /><rect x=840 y=156 fill=#00a611 /><rect x=846 y=156 fill=#00a610 /><rect x=852 y=156 fill=#00a60f /><rect x=858 y=156 fill=#00a90e /><rect x=864 y=156 fill=#00ab0d /><rect x=870 y=156 fill=#00ae0c /><rect x=876 y=156 fill=#00b00b /><rect x=882 y=156 fill=#00b30a /><rect x=888 y=156 fill=#00b509 /><rect x=894 y=156 fill=#00b808 /><rect x=900 y=156 fill=#00ba07 /><rect x=906 y=156 fill=#00bd05 /><rect x=912 y=156 fill=#00bf04 /><rect x=918 y=156 fill=#00c103 /><rect x=924 y=156 fill=#00c301 /><rect x=930 y=156 fill=#00c600 /><rect x=936 y=156 fill=#00c800 /><rect x=942 y=156 fill=#00ca00 /><rect x=948 y=156 fill=#00cc00 /><rect x=954 y=156 fill=#00ce00 /><rect x=960 y=156 fill=#00d000 /><rect x=966 y=156 fill=#00d200 /><rect x=972 y=156 fill=#00d300 /><rect x=978 y=156 fill=#00d500 /><rect x=984 y=156 fill=#00d600 /><rect x=990 y=156 fill=#00d700 /><rect x=996 y=156 fill=#00d900 /><rect x=1002 y=156 fill=#00d900 /><rect x=1008 y=156 fill=#00da00 /><rect x=1014 y=156 fill=#00db00 /><rect x=1020 y=156 fill=#00db00 />
<rect x=834 y=162 fill=#00a614 /><rect x=840 y=162 fill=#00a613 /><rect x=846 y=162 fill=#00a612 /><rect x=852 y=162 fill=#00a711 /><rect x=858 y=162 fill=#00aa10 /><rect x=864 y=162 fill=#00ad0f /><rect x=870 y=162 fill=#00af0e /><rect x=876 y=162 fill=#00b20d /><rect x=882 y=162 fill=#00b40c /><rect x=888 y=162 fill=#00b70b /><rect x=894 y=162 fill=#00b90a /><rect x=900 y=162 fill=#00bc09 /><rect x=906 y=162 fill=#00be07 /><rect x=912 y=162 fill=#00c006 /><rect x=918 y=162 fill=#00c305 /><rect x=924 y=162 fill=#00c503 /><rect x=930 y=162 fill=#00c702 /><rect x=936 y=162 fill=#00ca00 /><rect x=942 y=162 fill=#00cc00 /><rect x=948 y=162 fill=#00ce00 /><rect x=954 y=162 fill=#00d000 /><rect x=960 y=162 fill=#00d200 /><rect x=966 y=162 fill=#00d400 /><rect x=972 y=162 fill=#00d500 /><rect x=978 y=162 fill=#00d700 /><rect x=984 y=162 fill=#00d900 /><rect x=990 y=162 fill=#00da00 /><rect x=996 y=162 fill=#00db00 /><rect x=1002 y=162 fill=#00dc00 /><rect x=1008 y=162 fill=#00dd00 /><rect x=1014 y=162 fill=#00dd00 /><rect x=1020 y=162 fill=#00de00 /><rect x=1026 y=162 fill=#00de00 />
<rect x=834 y=168 fill=#00a616 /><rect x=840 y=168 fill=#00a614 /><rect x=846 y=168 fill=#00a613 /><rect x=852 y=168 fill=#00a813 /><rect x=858 y=168 fill=#00ab12 /><rect x=864 y=168 fill=#00ae11 /><rect x=870 y=168 fill=#00b010 /><rect x=876 y=168 fill=#00b30f /><rect x=882 y=168 fill=#00b50e /><rect x=888 y=168 fill=#00b80d /><rect x=894 y=168 fill=#00ba0c /><rect x=900 y=168 fill=#00bd0b /><rect x=906 y=168 fill=#00bf09 /><rect x=912 y=168 fill=#00c208 /><rect x=918 y=168 fill=#00c407 /><rect x=924 y=168 fill=#00c705 /><rect x=930 y=168 fill=#00c904 /><rect x=936 y=168 fill=#00cb02 /><rect x=942 y=168 fill=#00cd01 /><rect x=948 y=168 fill=#00d000 /><rect x=954 y=168 fill=#00d200 /><rect x=960 y=168 fill=#00d400 /><rect x=966 y=168 fill=#00d600 /><rect x=972 y=168 fill=#00d800 /><rect x=978 y=168 fill=#00d900 /><rect x=984 y=168 fill=#00db00 /><rect x=990 y=168 fill=#00dc00 /><rect x=996 y=168 fill=#00de00 /><rect x=1002 y=168 fill=#00df00 /><rect x=1008 y=168 fill=#00e000 /><rect x=1014 y=168 fill=#00e000 /><rect x=1020 y=168 fill=#00e100 /><rect x=1026 y=168 fill=#00e100 /><rect x=1032 y=168 fill=#00e100 /><rect x=1038 y=168 fill=#00e000 />
<rect x=834 y=174 fill=#00a617 /><rect x=840 y=174 fill=#00a616 /><rect x=846 y=174 fill=#00a715 /><rect x=852 y=174 fill=#00a915 /><rect x=858 y=174 fill=#00ac14 /><rect x=864 y=174 fill=#00af13 /><rect x=870 y=174 fill=#00b112 /><rect x=876 y=174 fill=#00b411 /><rect x=882 y=174 fill=#00b610 /><rect x=888 y=174 fill=#00b90f /><rect x=894 y=174 fill=#00bc0e /><rect x=900 y=174 fill=#00be0d /><rect x=906 y=174 fill=#00c10b /><rect x=912 y=174 fill=#00c30a /><rect x=918 y=174 fill=#00c609 /><rect x=924 y=174 fill=#00c807 /><rect x=930 y=174 fill=#00ca06 /><rect x=936 y=174 fill=#00cd04 /><rect x=942 y=174 fill=#00cf03 /><rect x=948 y=174 fill=#00d101 /><rect x=954 y=174 fill=#00d400 /><rect x=960 y=174 fill=#00d600 /><rect x=966 y=174 fill=#00d800 /><rect x=972 y=174 fill=#00da00 /><rect x=978 y=174 fill=#00db00 /><rect x=984 y=174 fill=#00dd00 /><rect x=990 y=174 fill=#00df00 /><rect x=996 y=174 fill=#00e000 /><rect x=1002 y=174 fill=#00e100 /><rect x=1008 y=174 fill=#00e200 /><rect x=1014 y=174 fill=#00e300 /><rect x=1020 y=174 fill=#00e300 /><rect x=1026 y=174 fill=#00e300 /><rect x=1032 y=174 fill=#00e300 /><rect x=1038 y=174 fill=#00e300 /><rect x=1044 y=174 fill=#02e200 />
<rect x=834 y=180 fill=#00a619 /><rect x=840 y=180 fill=#00a618 /><rect x=846 y=180 fill=#00a717 /><rect x=852 y=180 fill=#00aa17 /><rect x=858 y=180 fill=#00ad16 /><rect x=864 y=180 fill=#00af15 /><rect x=870 y=180 fill=#00b214 /><rect x=876 y=180 fill=#00b513 /><rect x=882 y=180 fill=#00b712 /><rect x=888 y=180 fill=#00ba11 /><rect x=894 y=180 fill=#00bd10 /><rect x=900 y=180 fill=#00bf0f /><rect x=906 y=180 fill=#00c20e /><rect x=912 y=180 fill=#00c40c /><rect x=918 y=180 fill=#00c70b /><rect x=924 y=180 fill=#00c90a /><rect x=930 y=180 fill=#00cc08 /><rect x=936 y=180 fill=#00ce07 /><rect x=942 y=180 fill=#00d105 /><rect x=948 y=180 fill=#00d303 /><rect x=954 y=180 fill=#00d501 /><rect x=960 y=180 fill=#00d700 /><rect x=966 y=180 fill=#00da00 /><rect x=972 y=180 fill=#00dc00 /><rect x=978 y=180 fill=#00de00 /><rect x=984 y=180 fill=#00df00 /><rect x=990 y=180 fill=#00e100 /><rect x=996 y=180 fill=#00e300 /><rect x=1002 y=180 fill=#00e400 /><rect x=1008 y=180 fill=#00e500 /><rect x=1014 y=180 fill=#00e600 /><rect x=1020 y=180 fill=#00e600 /><rect x=1026 y=180 fill=#00e600 /><rect x=1032 y=180 fill=#00e600 /><rect x=1038 y=180 fill=#00e600 /><rect x=1044 y=180 fill=#05e500 /><rect x=1050 y=180 fill=#0de400 />
<rect x=834 y=186 fill=#00a91b /><rect x=840 y=186 fill=#00aa1b /><rect x=846 y=186 fill=#00ab1a /><rect x=852 y=186 fill=#00ac19 /><rect x=858 y=186 fill=#00ae18 /><rect x=864 y=186 fill=#00b017 /><rect x=870 y=186 fill=#00b316 /><rect x=876 y=186 fill=#00b615 /><rect x=882 y=186 fill=#00b814 /><rect x=888 y=186 fill=#00bb13 /><rect x=894 y=186 fill=#00be12 /><rect x=900 y=186 fill=#00c011 /><rect x=906 y=186 fill=#00c310 /><rect x=912 y=186 fill=#00c50f /><rect x=918 y=186 fill=#00c80d /><rect x=924 y=186 fill=#00cb0c /><rect x=930 y=186 fill=#00cd0a /><rect x=936 y=186 fill=#00d009 /><rect x=942 y=186 fill=#00d207 /><rect x=948 y=186 fill=#00d406 /><rect x=954 y=186 fill=#00d704 /><rect x=960 y=186 fill=#00d902 /><rect x=966 y=186 fill=#00db00 /><rect x=972 y=186 fill=#00de00 /><rect x=978 y=186 fill=#00e000 /><rect x=984 y=186 fill=#00e100 /><rect x=990 y=186 fill=#00e300 /><rect x=996 y=186 fill=#00e500 /><rect x=1002 y=186 fill=#00e600 /><rect x=1008 y=186 fill=#00e700 /><rect x=1014 y=186 fill=#00e800 /><rect x=1020 y=186 fill=#00e900 /><rect x=1026 y=186 fill=#00e900 /><rect x=1032 y=186 fill=#00e900 /><rect x=1038 y=186 fill=#00e800 /><rect x=1044 y=186 fill=#07e700 /><rect x=1050 y=186 fill=#10e600 /><rect x=1056 y=186 fill=#18e500 />
<rect x=828 y=192 fill=#00af20 /><rect x=834 y=192 fill=#00b01f /><rect x=840 y=192 fill=#00b11e /><rect x=846 y=192 fill=#00b11d /><rect x=852 y=192 fill=#00b21c /><rect x=858 y=192 fill=#00b31b /><rect x=864 y=192 fill=#00b41a /><rect x=870 y=192 fill=#00b518 /><rect x=876 y=192 fill=#00b717 /><rect x=882 y=192 fill=#00b916 /><rect x=888 y=192 fill=#00bc15 /><rect x=894 y=192 fill=#00be14 /><rect x=900 y=192 fill=#00c113 /><rect x=906 y=192 fill=#00c412 /><rect x=912 y=192 fill=#00c611 /><rect x=918 y=192 fill=#00c910 /><rect x=924 y=192 fill=#00cc0e /><rect x=930 y=192 fill=#00ce0d /><rect x=936 y=192 fill=#00d10b /><rect x=942 y=192 fill=#00d30a /><rect x=948 y=192 fill=#00d608 /><rect x=954 y=192 fill=#00d806 /><rect x=960 y=192 fill=#00db04 /><rect x=966 y=192 fill=#00dd03 /><rect x=972 y=192 fill=#00df01 /><rect x=978 y=192 fill=#00e100 /><rect x=984 y=192 fill=#00e300 /><rect x=990 y=192 fill=#00e500 /><rect x=996 y=192 fill=#00e700 /><rect x=1002 y=192 fill=#00e900 /><rect x=1008 y=192 fill=#00ea00 /><rect x=1014 y=192 fill=#00eb00 /><rect x=1020 y=192 fill=#00eb00 /><rect x=1026 y=192 fill=#00ec00 /><rect x=1032 y=192 fill=#00eb00 /><rect x=1038 y=192 fill=#01eb00 /><rect x=1044 y=192 fill=#0aea00 /><rect x=1050 y=192 fill=#13e900 /><rect x=1056 y=192 fill=#1ce700 /><rect x=1062 y=192 fill=#25e600 />
<rect x=828 y=198 fill=#00b623 /><rect x=834 y=198 fill=#00b622 /><rect x=840 y=198 fill=#00b721 /><rect x=846 y=198 fill=#00b820 /><rect x=852 y=198 fill=#00b81f /><rect x=858 y=198 fill=#00b91e /><rect x=864 y=198 fill=#00ba1d /><rect x=870 y=198 fill=#00bb1b /><rect x=876 y=198 fill=#00bc1a /><rect x=882 y=198 fill=#00bd19 /><rect x=888 y=198 fill=#00bf18 /><rect x=894 y=198 fill=#00c017 /><rect x=900 y=198 fill=#00c216 /><rect x=906 y=198 fill=#00c515 /><rect x=912 y=198 fill=#00c713 /><rect x=918 y=198 fill=#00ca12 /><rect x=924 y=198 fill=#00cd11 /><rect x=930 y=198 fill=#00cf0f /><rect x=936 y=198 fill=#00d20e /><rect x=942 y=198 fill=#00d40c /><rect x=948 y=198 fill=#00d70b /><rect x=954 y=198 fill=#00da09 /><rect x=960 y=198 fill=#00dc07 /><rect x=966 y=198 fill=#00de05 /><rect x=972 y=198 fill=#00e103 /><rect x=978 y=198 fill=#00e301 /><rect x=984 y=198 fill=#00e500 /><rect x=990 y=198 fill=#00e700 /><rect x=996 y=198 fill=#00e900 /><rect x=1002 y=198 fill=#00eb00 /><rect x=1008 y=198 fill=#00ec00 /><rect x=1014 y=198 fill=#00ed00 /><rect x=1020 y=198 fill=#00ee00 /><rect x=1026 y=198 fill=#00ee00 /><rect x=1032 y=198 fill=#00ee00 /><rect x=1038 y=198 fill=#03ed00 /><rect x=1044 y=198 fill=#0cec00 /><rect x=1050 y=198 fill=#16eb00 /><rect x=1056 y=198 fill=#1fea00 /><rect x=1062 y=198 fill=#29ea00 /><rect x=1068 y=198 fill=#33ea00 />
<rect x=828 y=204 fill=#00bc26 /><rect x=834 y=204 fill=#00bc25 /><rect x=840 y=204 fill=#00bd24 /><rect x=846 y=204 fill=#00be23 /><rect x=852 y=204 fill=#00be22 /><rect x=858 y=204 fill=#00bf21 /><rect x=864 y=204 fill=#00c020 /><rect x=870 y=204 fill=#00c11f /><rect x=876 y=204 fill=#00c21d /><rect x=882 y=204 fill=#00c31c /><rect x=888 y=204 fill=#00c41b /><rect x=894 y=204 fill=#00c51a /><rect x=900 y=204 fill=#00c619 /><rect x=906 y=204 fill=#00c817 /><rect x=912 y=204 fill=#00c916 /><rect x=918 y=204 fill=#00cb15 /><rect x=924 y=204 fill=#00cd13 /><rect x=930 y=204 fill=#00d012 /><rect x=936 y=204 fill=#00d310 /><rect x=942 y=204 fill=#00d50f /><rect x=948 y=204 fill=#00d80d /><rect x=954 y=204 fill=#00db0b /><rect x=960 y=204 fill=#00dd0a /><rect x=966 y=204 fill=#00e008 /><rect x=972 y=204 fill=#00e206 /><rect x=978 y=204 fill=#00e504 /><rect x=984 y=204 fill=#00e702 /><rect x=990 y=204 fill=#00e900 /><rect x=996 y=204 fill=#00eb00 /><rect x=1002 y=204 fill=#00ed00 /><rect x=1008 y=204 fill=#00ef00 /><rect x=1014 y=204 fill=#00f000 /><rect x=1020 y=204 fill=#00f100 /><rect x=1026 y=204 fill=#00f100 /><rect x=1032 y=204 fill=#00f100 /><rect x=1038 y=204 fill=#06f000 /><rect x=1044 y=204 fill=#0fef00 /><rect x=1050 y=204 fill=#19ed00 /><rect x=1056 y=204 fill=#23ed00 /><rect x=1062 y=204 fill=#2ded00 /><rect x=1068 y=204 fill=#37ed00 />
<rect x=828 y=210 fill=#00c22a /><rect x=834 y=210 fill=#00c229 /><rect x=840 y=210 fill=#00c328 /><rect x=846 y=210 fill=#00c327 /><rect x=852 y=210 fill=#00c425 /><rect x=858 y=210 fill=#00c424 /><rect x=864 y=210 fill=#00c523 /><rect x=870 y=210 fill=#00c622 /><rect x=876 y=210 fill=#00c721 /><rect x=882 y=210 fill=#00c81f /><rect x=888 y=210 fill=#00c91e /><rect x=894 y=210 fill=#00ca1d /><rect x=900 y=210 fill=#00cb1c /><rect x=906 y=210 fill=#00cc1a /><rect x=912 y=210 fill=#00ce19 /><rect x=918 y=210 fill=#00cf18 /><rect x=924 y=210 fill=#00d116 /><rect x=930 y=210 fill=#00d215 /><rect x=936 y=210 fill=#00d413 /><rect x=942 y=210 fill=#00d611 /><rect x=948 y=210 fill=#00d910 /><rect x=954 y=210 fill=#00dc0e /><rect x=960 y=210 fill=#00de0c /><rect x=966 y=210 fill=#00e10b /><rect x=972 y=210 fill=#00e409 /><rect x=978 y=210 fill=#00e607 /><rect x=984 y=210 fill=#00e904 /><rect x=990 y=210 fill=#00eb02 /><rect x=996 y=210 fill=#00ed00 /><rect x=1002 y=210 fill=#00ef00 /><rect x=1008 y=210 fill=#00f100 /><rect x=1014 y=210 fill=#00f300 /><rect x=1020 y=210 fill=#00f400 /><rect x=1026 y=210 fill=#00f400 /><rect x=1032 y=210 fill=#00f400 /><rect x=1038 y=210 fill=#09f300 /><rect x=1044 y=210 fill=#12f100 /><rect x=1050 y=210 fill=#1cf000 /><rect x=1056 y=210 fill=#26f000 /><rect x=1062 y=210 fill=#31f000 /><rect x=1068 y=210 fill=#3bf000 /><rect x=1074 y=210 fill=#46f000 />
<rect x=828 y=216 fill=#00c82e /><rect x=834 y=216 fill=#00c82c /><rect x=840 y=216 fill=#00c82b /><rect x=846 y=216 fill=#00c92a /><rect x=852 y=216 fill=#00c929 /><rect x=858 y=216 fill=#00ca28 /><rect x=864 y=216 fill=#00ca27 /><rect x=870 y=216 fill=#00cb25 /><rect x=876 y=216 fill=#00cc24 /><rect x=882 y=216 fill=#00cc23 /><rect x=888 y=216 fill=#00cd22 /><rect x=894 y=216 fill=#00ce20 /><rect x=900 y=216 fill=#00cf1f /><rect x=906 y=216 fill=#00d11e /><rect x=912 y=216 fill=#00d21c /><rect x=918 y=216 fill=#00d31b /><rect x=924 y=216 fill=#00d519 /><rect x=930 y=216 fill=#00d618 /><rect x=936 y=216 fill=#00d816 /><rect x=942 y=216 fill=#00da14 /><rect x=948 y=216 fill=#00db13 /><rect x=954 y=216 fill=#00dd11 /><rect x=960 y=216 fill=#00df0f /><rect x=966 y=216 fill=#00e20d /><rect x=972 y=216 fill=#00e50c /><rect x=978 y=216 fill=#00e70a /><rect x=984 y=216 fill=#00ea07 /><rect x=990 y=216 fill=#00ec05 /><rect x=996 y=216 fill=#00ef03 /><rect x=1002 y=216 fill=#00f101 /><rect x=1008 y=216 fill=#00f300 /><rect x=1014 y=216 fill=#00f500 /><rect x=1020 y=216 fill=#00f600 /><rect x=1026 y=216 fill=#00f700 /><rect x=1032 y=216 fill=#02f600 /><rect x=1038 y=216 fill=#0cf500 /><rect x=1044 y=216 fill=#16f400 /><rect x=1050 y=216 fill=#20f300 /><rect x=1056 y=216 fill=#2af300 /><rect x=1062 y=216 fill=#35f200 /><rect x=1068 y=216 fill=#40f200 /><rect x=1074 y=216 fill=#4bf200 /><rect x=1080 y=216 fill=#57f200 />
<rect x=828 y=222 fill=#00cd32 /><rect x=834 y=222 fill=#00cd30 /><rect x=840 y=222 fill=#00cd2f /><rect x=846 y=222 fill=#00ce2e /><rect x=852 y=222 fill=#00ce2d /><rect x=858 y=222 fill=#00ce2b /><rect x=864 y=222 fill=#00cf2a /><rect x=870 y=222 fill=#00d029 /><rect x=876 y=222 fill=#00d028 /><rect x=882 y=222 fill=#00d126 /><rect x=888 y=222 fill=#00d225 /><rect x=894 y=222 fill=#00d324 /><rect x=900 y=222 fill=#00d422 /><rect x=906 y=222 fill=#00d521 /><rect x=912 y=222 fill=#00d61f /><rect x=918 y=222 fill=#00d71e /><rect x=924 y=222 fill=#00d81c /><rect x=930 y=222 fill=#00da1b /><rect x=936 y=222 fill=#00db19 /><rect x=942 y=222 fill=#00dd18 /><rect x=948 y=222 fill=#00df16 /><rect x=954 y=222 fill=#00e014 /><rect x=960 y=222 fill=#00e212 /><rect x=966 y=222 fill=#00e411 /><rect x=972 y=222 fill=#00e60f /><rect x=978 y=222 fill=#00e80d /><rect x=984 y=222 fill=#00eb0b /><rect x=990 y=222 fill=#00ed08 /><rect x=996 y=222 fill=#00f006 /><rect x=1002 y=222 fill=#00f304 /><rect x=1008 y=222 fill=#00f501 /><rect x=1014 y=222 fill=#00f700 /><rect x=1020 y=222 fill=#00f900 /><rect x=1026 y=222 fill=#00f900 /><rect x=1032 y=222 fill=#05f900 /><rect x=1038 y=222 fill=#0ff700 /><rect x=1044 y=222 fill=#19f600 /><rect x=1050 y=222 fill=#24f600 /><rect x=1056 y=222 fill=#2ff500 /><rect x=1062 y=222 fill=#3af500 /><rect x=1068 y=222 fill=#45f400 /><rect x=1074 y=222 fill=#50f400 /><rect x=1080 y=222 fill=#5cf500 /><rect x=1086 y=222 fill=#69f500 />
<rect x=828 y=228 fill=#00d236 /><rect x=834 y=228 fill=#00d234 /><rect x=840 y=228 fill=#00d233 /><rect x=846 y=228 fill=#00d232 /><rect x=852 y=228 fill=#00d331 /><rect x=858 y=228 fill=#00d32f /><rect x=864 y=228 fill=#00d32e /><rect x=870 y=228 fill=#00d42d /><rect x=876 y=228 fill=#00d52b /><rect x=882 y=228 fill=#00d52a /><rect x=888 y=228 fill=#00d629 /><rect x=894 y=228 fill=#00d727 /><rect x=900 y=228 fill=#00d826 /><rect x=906 y=228 fill=#00d924 /><rect x=912 y=228 fill=#00da23 /><rect x=918 y=228 fill=#00db21 /><rect x=924 y=228 fill=#00dc20 /><rect x=930 y=228 fill=#00dd1e /><rect x=936 y=228 fill=#00de1d /><rect x=942 y=228 fill=#00e01b /><rect x=948 y=228 fill=#00e119 /><rect x=954 y=228 fill=#00e318 /><rect x=960 y=228 fill=#00e516 /><rect x=966 y=228 fill=#00e714 /><rect x=972 y=228 fill=#00e912 /><rect x=978 y=228 fill=#00eb10 /><rect x=984 y=228 fill=#00ed0e /><rect x=990 y=228 fill=#00ef0c /><rect x=996 y=228 fill=#00f109 /><rect x=1002 y=228 fill=#00f407 /><rect x=1008 y=228 fill=#00f604 /><rect x=1014 y=228 fill=#00f902 /><rect x=1020 y=228 fill=#00fb00 /><rect x=1026 y=228 fill=#00fc00 /><rect x=1032 y=228 fill=#08fb00 /><rect x=1038 y=228 fill=#12fa00 /><rect x=1044 y=228 fill=#1df900 /><rect x=1050 y=228 fill=#28f800 /><rect x=1056 y=228 fill=#33f700 /><rect x=1062 y=228 fill=#3ef700 /><rect x=1068 y=228 fill=#4af600 /><rect x=1074 y=228 fill=#56f600 /><rect x=1080 y=228 fill=#62f600 /><rect x=1086 y=228 fill=#6ff600 /><rect x=1092 y=228 fill=#7cf700 />
<rect x=828 y=234 fill=#00d63a /><rect x=834 y=234 fill=#00d638 /><rect x=840 y=234 fill=#00d737 /><rect x=846 y=234 fill=#00d736 /><rect x=852 y=234 fill=#00d735 /><rect x=858 y=234 fill=#00d733 /><rect x=864 y=234 fill=#00d832 /><rect x=870 y=234 fill=#00d831 /><rect x=876 y=234 fill=#00d92f /><rect x=882 y=234 fill=#00d92e /><rect x=888 y=234 fill=#00da2c /><rect x=894 y=234 fill=#00db2b /><rect x=900 y=234 fill=#00db2a /><rect x=906 y=234 fill=#00dc28 /><rect x=912 y=234 fill=#00dd27 /><rect x=918 y=234 fill=#00de25 /><rect x=924 y=234 fill=#00df24 /><rect x=930 y=234 fill=#00e022 /><rect x=936 y=234 fill=#00e220 /><rect x=942 y=234 fill=#00e31f /><rect x=948 y=234 fill=#00e41d /><rect x=954 y=234 fill=#00e61b /><rect x=960 y=234 fill=#00e719 /><rect x=966 y=234 fill=#00e917 /><rect x=972 y=234 fill=#00eb15 /><rect x=978 y=234 fill=#00ed13 /><rect x=984 y=234 fill=#00ef11 /><rect x=990 y=234 fill=#00f10f /><rect x=996 y=234 fill=#00f30d /><rect x=1002 y=234 fill=#00f50a /><rect x=1008 y=234 fill=#00f708 /><rect x=1014 y=234 fill=#00fa05 /><rect x=1020 y=234 fill=#00fc03 /><rect x=1026 y=234 fill=#00ff00 /><rect x=1032 y=234 fill=#0bfd00 /><rect x=1038 y=234 fill=#16fc00 /><rect x=1044 y=234 fill=#21fb00 /><rect x=1050 y=234 fill=#2cfa00 /><rect x=1056 y=234 fill=#37f900 /><rect x=1062 y=234 fill=#43f900 /><rect x=1068 y=234 fill=#4ff800 /><rect x=1074 y=234 fill=#5cf800 /><rect x=1080 y=234 fill=#68f800 /><rect x=1086 y=234 fill=#75f800 /><rect x=1092 y=234 fill=#83f800 /><rect x=1098 y=234 fill=#91f800 />
<rect x=828 y=240 fill=#00da3e /><rect x=834 y=240 fill=#00db3d /><rect x=840 y=240 fill=#00db3b /><rect x=846 y=240 fill=#00db3a /><rect x=852 y=240 fill=#00db39 /><rect x=858 y=240 fill=#00db37 /><rect x=864 y=240 fill=#00dc36 /><rect x=870 y=240 fill=#00dc35 /><rect x=876 y=240 fill=#00dc33 /><rect x=882 y=240 fill=#00dd32 /><rect x=888 y=240 fill=#00dd30 /><rect x=894 y=240 fill=#00de2f /><rect x=900 y=240 fill=#00df2e /><rect x=906 y=240 fill=#00e02c /><rect x=912 y=240 fill=#00e02b /><rect x=918 y=240 fill=#00e129 /><rect x=924 y=240 fill=#00e227 /><rect x=930 y=240 fill=#00e326 /><rect x=936 y=240 fill=#00e424 /><rect x=942 y=240 fill=#00e622 /><rect x=948 y=240 fill=#00e721 /><rect x=954 y=240 fill=#00e81f /><rect x=960 y=240 fill=#00ea1d /><rect x=966 y=240 fill=#00eb1b /><rect x=972 y=240 fill=#00ed19 /><rect x=978 y=240 fill=#00ef17 /><rect x=984 y=240 fill=#00f015 /><rect x=990 y=240 fill=#00f213 /><rect x=996 y=240 fill=#00f410 /><rect x=1002 y=240 fill=#00f60e /><rect x=1008 y=240 fill=#00f90b /><rect x=1014 y=240 fill=#00fb09 /><rect x=1020 y=240 fill=#00fd06 /><rect x=1026 y=240 fill=#03ff03 /><rect x=1032 y=240 fill=#0eff01 /><rect x=1038 y=240 fill=#19fe00 /><rect x=1044 y=240 fill=#25fd00 /><rect x=1050 y=240 fill=#30fc00 /><rect x=1056 y=240 fill=#3cfb00 /><rect x=1062 y=240 fill=#48fa00 /><rect x=1068 y=240 fill=#55fa00 /><rect x=1074 y=240 fill=#61fa00 /><rect x=1080 y=240 fill=#6ef900 /><rect x=1086 y=240 fill=#7cf900 /><rect x=1092 y=240 fill=#8af900 /><rect x=1098 y=240 fill=#98fa00 /><rect x=1104 y=240 fill=#a7fa00 />
<rect x=828 y=246 fill=#00de42 /><rect x=834 y=246 fill=#00de41 /><rect x=840 y=246 fill=#00df40 /><rect x=846 y=246 fill=#00df3e /><rect x=852 y=246 fill=#00df3d /><rect x=858 y=246 fill=#00df3c /><rect x=864 y=246 fill=#00df3a /><rect x=870 y=246 fill=#00e039 /><rect x=876 y=246 fill=#00e037 /><rect x=882 y=246 fill=#00e036 /><rect x=888 y=246 fill=#00e135 /><rect x=894 y=246 fill=#00e133 /><rect x=900 y=246 fill=#00e232 /><rect x=906 y=246 fill=#00e330 /><rect x=912 y=246 fill=#00e32f /><rect x=918 y=246 fill=#00e42d /><rect x=924 y=246 fill=#00e52b /><rect x=930 y=246 fill=#00e62a /><rect x=936 y=246 fill=#00e728 /><rect x=942 y=246 fill=#00e826 /><rect x=948 y=246 fill=#00e924 /><rect x=954 y=246 fill=#00eb23 /><rect x=960 y=246 fill=#00ec21 /><rect x=966 y=246 fill=#00ed1f /><rect x=972 y=246 fill=#00ef1d /><rect x=978 y=246 fill=#00f01b /><rect x=984 y=246 fill=#00f219 /><rect x=990 y=246 fill=#00f416 /><rect x=996 y=246 fill=#00f614 /><rect x=1002 y=246 fill=#00f812 /><rect x=1008 y=246 fill=#00fa0f /><rect x=1014 y=246 fill=#00fc0d /><rect x=1020 y=246 fill=#00fe0a /><rect x=1026 y=246 fill=#06ff07 /><rect x=1032 y=246 fill=#11ff04 /><rect x=1038 y=246 fill=#1dff01 /><rect x=1044 y=246 fill=#29fe00 /><rect x=1050 y=246 fill=#35fd00 /><rect x=1056 y=246 fill=#41fc00 /><rect x=1062 y=246 fill=#4efc00 /><rect x=1068 y=246 fill=#5afb00 /><rect x=1074 y=246 fill=#67fb00 /><rect x=1080 y=246 fill=#75fb00 /><rect x=1086 y=246 fill=#83fb00 /><rect x=1092 y=246 fill=#91fb00 /><rect x=1098 y=246 fill=#a0fb00 /><rect x=1104 y=246 fill=#affb00 /><rect x=1110 y=246 fill=#bffb00 />
<rect x=828 y=252 fill=#00e247 /><rect x=834 y=252 fill=#00e245 /><rect x=840 y=252 fill=#00e244 /><rect x=846 y=252 fill=#00e243 /><rect x=852 y=252 fill=#00e241 /><rect x=858 y=252 fill=#00e240 /><rect x=864 y=252 fill=#00e33f /><rect x=870 y=252 fill=#00e33d /><rect x=876 y=252 fill=#00e33c /><rect x=882 y=252 fill=#00e43a /><rect x=888 y=252 fill=#00e439 /><rect x=894 y=252 fill=#00e537 /><rect x=900 y=252 fill=#00e536 /><rect x=906 y=252 fill=#00e634 /><rect x=912 y=252 fill=#00e633 /><rect x=918 y=252 fill=#00e731 /><rect x=924 y=252 fill=#00e82f /><rect x=930 y=252 fill=#00e92e /><rect x=936 y=252 fill=#00ea2c /><rect x=942 y=252 fill=#00eb2a /><rect x=948 y=252 fill=#00ec29 /><rect x=954 y=252 fill=#00ed27 /><rect x=960 y=252 fill=#00ee25 /><rect x=966 y=252 fill=#00ef23 /><rect x=972 y=252 fill=#00f121 /><rect x=978 y=252 fill=#00f21f /><rect x=984 y=252 fill=#00f41d /><rect x=990 y=252 fill=#00f51a /><rect x=996 y=252 fill=#00f718 /><rect x=1002 y=252 fill=#00f916 /><rect x=1008 y=252 fill=#00fb13 /><rect x=1014 y=252 fill=#00fd11 /><rect x=1020 y=252 fill=#00ff0e /><rect x=1026 y=252 fill=#09ff0b /><rect x=1032 y=252 fill=#15ff08 /><rect x=1038 y=252 fill=#21ff05 /><rect x=1044 y=252 fill=#2dff02 /><rect x=1050 y=252 fill=#3aff00 /><rect x=1056 y=252 fill=#46fe00 /><rect x=1062 y=252 fill=#53fd00 /><rect x=1068 y=252 fill=#60fd00 /><rect x=1074 y=252 fill=#6efc00 /><rect x=1080 y=252 fill=#7cfc00 /><rect x=1086 y=252 fill=#8afc00 /><rect x=1092 y=252 fill=#99fc00 /><rect x=1098 y=252 fill=#a8fc00 /><rect x=1104 y=252 fill=#b8fc00 /><rect x=1110 y=252 fill=#c8fc00 /><rect x=1116 y=252 fill=#d9fc00 />
<rect x=828 y=258 fill=#00e54b /><rect x=834 y=258 fill=#00e54a /><rect x=840 y=258 fill=#00e549 /><rect x=846 y=258 fill=#00e547 /><rect x=852 y=258 fill=#00e546 /><rect x=858 y=258 fill=#00e645 /><rect x=864 y=258 fill=#00e643 /><rect x=870 y=258 fill=#00e642 /><rect x=876 y=258 fill=#00e640 /><rect x=882 y=258 fill=#00e73f /><rect x=888 y=258 fill=#00e73d /><rect x=894 y=258 fill=#00e73c /><rect x=900 y=258 fill=#00e83a /><rect x=906 y=258 fill=#00e839 /><rect x=912 y=258 fill=#00e937 /><rect x=918 y=258 fill=#00ea35 /><rect x=924 y=258 fill=#00ea34 /><rect x=930 y=258 fill=#00eb32 /><rect x=936 y=258 fill=#00ec30 /><rect x=942 y=258 fill=#00ed2f /><rect x=948 y=258 fill=#00ee2d /><rect x=954 y=258 fill=#00ef2b /><rect x=960 y=258 fill=#00f029 /><rect x=966 y=258 fill=#00f127 /><rect x=972 y=258 fill=#00f225 /><rect x=978 y=258 fill=#00f423 /><rect x=984 y=258 fill=#00f521 /><rect x=990 y=258 fill=#00f61f /><rect x=996 y=258 fill=#00f81c /><rect x=1002 y=258 fill=#00fa1a /><rect x=1008 y=258 fill=#00fb17 /><rect x=1014 y=258 fill=#00fd15 /><rect x=1020 y=258 fill=#01ff12 /><rect x=1026 y=258 fill=#0dff0f /><rect x=1032 y=258 fill=#19ff0c /><rect x=1038 y=258 fill=#25ff09 /><rect x=1044 y=258 fill=#31ff06 /><rect x=1050 y=258 fill=#3eff03 /><rect x=1056 y=258 fill=#4cff00 /><rect x=1062 y=258 fill=#59fe00 /><rect x=1068 y=258 fill=#66fe00 /><rect x=1074 y=258 fill=#74fd00 /><rect x=1080 y=258 fill=#83fd00 /><rect x=1086 y=258 fill=#92fd00 /><rect x=1092 y=258 fill=#a1fc00 /><rect x=1098 y=258 fill=#b1fc00 /><rect x=1104 y=258 fill=#c1fc00 /><rect x=1110 y=258 fill=#d2fc00 /><rect x=1116 y=258 fill=#e3fc00 /><rect x=1122 y=258 fill=#f5fc00 />
<rect x=828 y=264 fill=#00e850 /><rect x=834 y=264 fill=#00e84f /><rect x=840 y=264 fill=#00e84d /><rect x=846 y=264 fill=#00e84c /><rect x=852 y=264 fill=#00e84b /><rect x=858 y=264 fill=#00e849 /><rect x=864 y=264 fill=#00e948 /><rect x=870 y=264 fill=#00e946 /><rect x=876 y=264 fill=#00e945 /><rect x=882 y=264 fill=#00e943 /><rect x=888 y=264 fill=#00ea42 /><rect x=894 y=264 fill=#00ea40 /><rect x=900 y=264 fill=#00ea3f /><rect x=906 y=264 fill=#00eb3d /><rect x=912 y=264 fill=#00eb3c /><rect x=918 y=264 fill=#00ec3a /><rect x=924 y=264 fill=#00ed38 /><rect x=930 y=264 fill=#00ed37 /><rect x=936 y=264 fill=#00ee35 /><rect x=942 y=264 fill=#00ef33 /><rect x=948 y=264 fill=#00f031 /><rect x=954 y=264 fill=#00f12f /><rect x=960 y=264 fill=#00f22d /><rect x=966 y=264 fill=#00f32b /><rect x=972 y=264 fill=#00f429 /><rect x=978 y=264 fill=#00f527 /><rect x=984 y=264 fill=#00f625 /><rect x=990 y=264 fill=#00f823 /><rect x=996 y=264 fill=#00f921 /><rect x=1002 y=264 fill=#00fb1e /><rect x=1008 y=264 fill=#00fc1c /><rect x=1014 y=264 fill=#00fe19 /><rect x=1020 y=264 fill=#04ff16 /><rect x=1026 y=264 fill=#10ff13 /><rect x=1032 y=264 fill=#1dff11 /><rect x=1038 y=264 fill=#29ff0d /><rect x=1044 y=264 fill=#36ff0a /><rect x=1050 y=264 fill=#43ff07 /><rect x=1056 y=264 fill=#51ff04 /><rect x=1062 y=264 fill=#5fff00 /><rect x=1068 y=264 fill=#6dfe00 /><rect x=1074 y=264 fill=#7bfe00 /><rect x=1080 y=264 fill=#8afe00 /><rect x=1086 y=264 fill=#9afd00 /><rect x=1092 y=264 fill=#a9fd00 /><rect x=1098 y=264 fill=#bafd00 /><rect x=1104 y=264 fill=#cbfd00 /><rect x=1110 y=264 fill=#dcfd00 /><rect x=1116 y=264 fill=#eefd00 /><rect x=1122 y=264 fill=#fdf900 /><rect x=1128 y=264 fill=#fde800 />
<rect x=834 y=270 fill=#00eb54 /><rect x=840 y=270 fill=#00eb52 /><rect x=846 y=270 fill=#00eb51 /><rect x=852 y=270 fill=#00eb4f /><rect x=858 y=270 fill=#00eb4e /><rect x=864 y=270 fill=#00eb4d /><rect x=870 y=270 fill=#00eb4b /><rect x=876 y=270 fill=#00ec4a /><rect x=882 y=270 fill=#00ec48 /><rect x=888 y=270 fill=#00ec47 /><rect x=894 y=270 fill=#00ec45 /><rect x=900 y=270 fill=#00ed43 /><rect x=906 y=270 fill=#00ed42 /><rect x=912 y=270 fill=#00ee40 /><rect x=918 y=270 fill=#00ee3f /><rect x=924 y=270 fill=#00ef3d /><rect x=930 y=270 fill=#00ef3b /><rect x=936 y=270 fill=#00f039 /><rect x=942 y=270 fill=#00f138 /><rect x=948 y=270 fill=#00f136 /><rect x=954 y=270 fill=#00f234 /><rect x=960 y=270 fill=#00f332 /><rect x=966 y=270 fill=#00f430 /><rect x=972 y=270 fill=#00f52e /><rect x=978 y=270 fill=#00f62c /><rect x=984 y=270 fill=#00f72a /><rect x=990 y=270 fill=#00f927 /><rect x=996 y=270 fill=#00fa25 /><rect x=1002 y=270 fill=#00fb23 /><rect x=1008 y=270 fill=#00fd20 /><rect x=1014 y=270 fill=#00fe1e /><rect x=1020 y=270 fill=#08ff1b /><rect x=1026 y=270 fill=#14ff18 /><rect x=1032 y=270 fill=#21ff15 /><rect x=1038 y=270 fill=#2dff12 /><rect x=1044 y=270 fill=#3bff0f /><rect x=1050 y=270 fill=#48ff0c /><rect x=1056 y=270 fill=#56ff08 /><rect x=1062 y=270 fill=#65ff05 /><rect x=1068 y=270 fill=#74ff01 /><rect x=1074 y=270 fill=#83ff00 /><rect x=1080 y=270 fill=#92fe00 /><rect x=1086 y=270 fill=#a2fe00 /><rect x=1092 y=270 fill=#b2fe00 /><rect x=1098 y=270 fill=#c3fe00 /><rect x=1104 y=270 fill=#d5fd00 /><rect x=1110 y=270 fill=#e7fd00 /><rect x=1116 y=270 fill=#f9fd00 /><rect x=1122 y=270 fill=#fdef00 /><rect x=1128 y=270 fill=#fdde00 /><rect x=1134 y=270 fill=#fdd000 />
<rect x=834 y=276 fill=#00ed59 /><rect x=840 y=276 fill=#00ed57 /><rect x=846 y=276 fill=#00ed56 /><rect x=852 y=276 fill=#00ed54 /><rect x=858 y=276 fill=#00ed53 /><rect x=864 y=276 fill=#00ee52 /><rect x=870 y=276 fill=#00ee50 /><rect x=876 y=276 fill=#00ee4f /><rect x=882 y=276 fill=#00ee4d /><rect x=888 y=276 fill=#00ee4c /><rect x=894 y=276 fill=#00ef4a /><rect x=900 y=276 fill=#00ef48 /><rect x=906 y=276 fill=#00ef47 /><rect x=912 y=276 fill=#00f045 /><rect x=918 y=276 fill=#00f043 /><rect x=924 y=276 fill=#00f142 /><rect x=930 y=276 fill=#00f140 /><rect x=936 y=276 fill=#00f23e /><rect x=942 y=276 fill=#00f23c /><rect x=948 y=276 fill=#00f33b /><rect x=954 y=276 fill=#00f439 /><rect x=960 y=276 fill=#00f537 /><rect x=966 y=276 fill=#00f535 /><rect x=972 y=276 fill=#00f633 /><rect x=978 y=276 fill=#00f731 /><rect x=984 y=276 fill=#00f82e /><rect x=990 y=276 fill=#00fa2c /><rect x=996 y=276 fill=#00fb2a /><rect x=1002 y=276 fill=#00fc27 /><rect x=1008 y=276 fill=#00fd25 /><rect x=1014 y=276 fill=#00ff22 /><rect x=1020 y=276 fill=#0bff20 /><rect x=1026 y=276 fill=#18ff1d /><rect x=1032 y=276 fill=#25ff1a /><rect x=1038 y=276 fill=#32ff17 /><rect x=1044 y=276 fill=#40ff13 /><rect x=1050 y=276 fill=#4eff10 /><rect x=1056 y=276 fill=#5cff0d /><rect x=1062 y=276 fill=#6bff09 /><rect x=1068 y=276 fill=#7aff06 /><rect x=1074 y=276 fill=#8aff02 /><rect x=1080 y=276 fill=#9aff00 /><rect x=1086 y=276 fill=#aafe00 /><rect x=1092 y=276 fill=#bbfe00 /><rect x=1098 y=276 fill=#cdfe00 /><rect x=1104 y=276 fill=#dffe00 /><rect x=1110 y=276 fill=#f2fe00 /><rect x=1116 y=276 fill=#fef700 /><rect x=1122 y=276 fill=#fee500 /><rect x=1128 y=276 fill=#fed500 /><rect x=1134 y=276 fill=#fec700 /><rect x=1140 y=276 fill=#fdba00 />
<rect x=834 y=282 fill=#00ef5e /><rect x=840 y=282 fill=#00ef5c /><rect x=846 y=282 fill=#00ef5b /><rect x=852 y=282 fill=#00ef59 /><rect x=858 y=282 fill=#00f058 /><rect x=864 y=282 fill=#00f057 /><rect x=870 y=282 fill=#00f055 /><rect x=876 y=282 fill=#00f054 /><rect x=882 y=282 fill=#00f052 /><rect x=888 y=282 fill=#00f051 /><rect x=894 y=282 fill=#00f14f /><rect x=900 y=282 fill=#00f14d /><rect x=906 y=282 fill=#00f14c /><rect x=912 y=282 fill=#00f24a /><rect x=918 y=282 fill=#00f249 /><rect x=924 y=282 fill=#00f247 /><rect x=930 y=282 fill=#00f345 /><rect x=936 y=282 fill=#00f343 /><rect x=942 y=282 fill=#00f441 /><rect x=948 y=282 fill=#00f540 /><rect x=954 y=282 fill=#00f53e /><rect x=960 y=282 fill=#00f63c /><rect x=966 y=282 fill=#00f73a /><rect x=972 y=282 fill=#00f838 /><rect x=978 y=282 fill=#00f836 /><rect x=984 y=282 fill=#00f933 /><rect x=990 y=282 fill=#00fa31 /><rect x=996 y=282 fill=#00fc2f /><rect x=1002 y=282 fill=#00fd2c /><rect x=1008 y=282 fill=#00fe2a /><rect x=1014 y=282 fill=#02ff27 /><rect x=1020 y=282 fill=#0fff24 /><rect x=1026 y=282 fill=#1cff22 /><rect x=1032 y=282 fill=#29ff1f /><rect x=1038 y=282 fill=#37ff1b /><rect x=1044 y=282 fill=#45ff18 /><rect x=1050 y=282 fill=#53ff15 /><rect x=1056 y=282 fill=#62ff12 /><rect x=1062 y=282 fill=#72ff0e /><rect x=1068 y=282 fill=#81ff0b /><rect x=1074 y=282 fill=#92ff07 /><rect x=1080 y=282 fill=#a2ff03 /><rect x=1086 y=282 fill=#b4ff00 /><rect x=1092 y=282 fill=#c5ff00 /><rect x=1098 y=282 fill=#d7fe00 /><rect x=1104 y=282 fill=#eafe00 /><rect x=1110 y=282 fill=#fefe00 /><rect x=1116 y=282 fill=#feec00 /><rect x=1122 y=282 fill=#fedb00 /><rect x=1128 y=282 fill=#fecc00 /><rect x=1134 y=282 fill=#febe00 /><rect x=1140 y=282 fill=#feb200 /><rect x=1146 y=282 fill=#fea700 />
<rect x=834 y=288 fill=#00f163 /><rect x=840 y=288 fill=#00f161 /><rect x=846 y=288 fill=#00f160 /><rect x=852 y=288 fill=#00f15f /><rect x=858 y=288 fill=#00f15d /><rect x=864 y=288 fill=#00f15c /><rect x=870 y=288 fill=#00f25a /><rect x=876 y=288 fill=#00f259 /><rect x=882 y=288 fill=#00f257 /><rect x=888 y=288 fill=#00f256 /><rect x=894 y=288 fill=#00f254 /><rect x=900 y=288 fill=#00f353 /><rect x=906 y=288 fill=#00f351 /><rect x=912 y=288 fill=#00f34f /><rect x=918 y=288 fill=#00f34e /><rect x=924 y=288 fill=#00f44c /><rect x=930 y=288 fill=#00f44a /><rect x=936 y=288 fill=#00f548 /><rect x=942 y=288 fill=#00f547 /><rect x=948 y=288 fill=#00f645 /><rect x=954 y=288 fill=#00f643 /><rect x=960 y=288 fill=#00f741 /><rect x=966 y=288 fill=#00f83f /><rect x=972 y=288 fill=#00f93d /><rect x=978 y=288 fill=#00f93b /><rect x=984 y=288 fill=#00fa39 /><rect x=990 y=288 fill=#00fb36 /><rect x=996 y=288 fill=#00fc34 /><rect x=1002 y=288 fill=#00fd32 /><rect x=1008 y=288 fill=#00fe2f /><rect x=1014 y=288 fill=#06ff2c /><rect x=1020 y=288 fill=#13ff2a /><rect x=1026 y=288 fill=#20ff27 /><rect x=1032 y=288 fill=#2eff24 /><rect x=1038 y=288 fill=#3cff21 /><rect x=1044 y=288 fill=#4aff1d /><rect x=1050 y=288 fill=#59ff1a /><rect x=1056 y=288 fill=#69ff17 /><rect x=1062 y=288 fill=#79ff13 /><rect x=1068 y=288 fill=#89ff10 /><rect x=1074 y=288 fill=#9aff0c /><rect x=1080 y=288 fill=#abff08 /><rect x=1086 y=288 fill=#bdff04 /><rect x=1092 y=288 fill=#cfff00 /><rect x=1098 y=288 fill=#e2ff00 /><rect x=1104 y=288 fill=#f6ff00 /><rect x=1110 y=288 fill=#fef300 /><rect x=1116 y=288 fill=#fee100 /><rect x=1122 y=288 fill=#fed100 /><rect x=1128 y=288 fill=#fec300 /><rect x=1134 y=288 fill=#feb600 /><rect x=1140 y=288 fill=#feaa00 /><rect x=1146 y=288 fill=#fea000 /><rect x=1152 y=288 fill=#fe9600 />
<rect x=834 y=294 fill=#00f368 /><rect x=840 y=294 fill=#00f367 /><rect x=846 y=294 fill=#00f365 /><rect x=852 y=294 fill=#00f364 /><rect x=858 y=294 fill=#00f363 /><rect x=864 y=294 fill=#00f361 /><rect x=870 y=294 fill=#00f360 /><rect x=876 y=294 fill=#00f35e /><rect x=882 y=294 fill=#00f35d /><rect x=888 y=294 fill=#00f45b /><rect x=894 y=294 fill=#00f45a /><rect x=900 y=294 fill=#00f458 /><rect x=906 y=294 fill=#00f456 /><rect x=912 y=294 fill=#00f555 /><rect x=918 y=294 fill=#00f553 /><rect x=924 y=294 fill=#00f551 /><rect x=930 y=294 fill=#00f650 /><rect x=936 y=294 fill=#00f64e /><rect x=942 y=294 fill=#00f74c /><rect x=948 y=294 fill=#00f74a /><rect x=954 y=294 fill=#00f848 /><rect x=960 y=294 fill=#00f846 /><rect x=966 y=294 fill=#00f944 /><rect x=972 y=294 fill=#00f942 /><rect x=978 y=294 fill=#00fa40 /><rect x=984 y=294 fill=#00fb3e /><rect x=990 y=294 fill=#00fc3c /><rect x=996 y=294 fill=#00fd39 /><rect x=1002 y=294 fill=#00fe37 /><rect x=1008 y=294 fill=#00ff35 /><rect x=1014 y=294 fill=#0aff32 /><rect x=1020 y=294 fill=#17ff2f /><rect x=1026 y=294 fill=#25ff2c /><rect x=1032 y=294 fill=#33ff29 /><rect x=1038 y=294 fill=#41ff26 /><rect x=1044 y=294 fill=#50ff23 /><rect x=1050 y=294 fill=#60ff20 /><rect x=1056 y=294 fill=#6fff1c /><rect x=1062 y=294 fill=#80ff19 /><rect x=1068 y=294 fill=#91ff15 /><rect x=1074 y=294 fill=#a2ff11 /><rect x=1080 y=294 fill=#b4ff0e /><rect x=1086 y=294 fill=#c7ff0a /><rect x=1092 y=294 fill=#daff06 /><rect x=1098 y=294 fill=#eeff01 /><rect x=1104 y=294 fill=#fffc00 /><rect x=1110 y=294 fill=#ffe800 /><rect x=1116 y=294 fill=#ffd700 /><rect x=1122 y=294 fill=#fec800 /><rect x=1128 y=294 fill=#feba00 /><rect x=1134 y=294 fill=#feae00 /><rect x=1140 y=294 fill=#fea300 /><rect x=1146 y=294 fill=#fe9800 /><rect x=1152 y=294 fill=#fe8f00 /><rect x=1158 y=294 fill=#fd8600 />
<rect x=834 y=300 fill=#00f46d /><rect x=840 y=300 fill=#00f46c /><rect x=846 y=300 fill=#00f46b /><rect x=852 y=300 fill=#00f469 /><rect x=858 y=300 fill=#00f468 /><rect x=864 y=300 fill=#00f567 /><rect x=870 y=300 fill=#00f565 /><rect x=876 y=300 fill=#00f564 /><rect x=882 y=300 fill=#00f562 /><rect x=888 y=300 fill=#00f561 /><rect x=894 y=300 fill=#00f55f /><rect x=900 y=300 fill=#00f55e /><rect x=906 y=300 fill=#00f65c /><rect x=912 y=300 fill=#00f65a /><rect x=918 y=300 fill=#00f659 /><rect x=924 y=300 fill=#00f757 /><rect x=930 y=300 fill=#00f755 /><rect x=936 y=300 fill=#00f754 /><rect x=942 y=300 fill=#00f852 /><rect x=948 y=300 fill=#00f850 /><rect x=954 y=300 fill=#00f94e /><rect x=960 y=300 fill=#00f94c /><rect x=966 y=300 fill=#00fa4a /><rect x=972 y=300 fill=#00fa48 /><rect x=978 y=300 fill=#00fb46 /><rect x=984 y=300 fill=#00fc44 /><rect x=990 y=300 fill=#00fc41 /><rect x=996 y=300 fill=#00fd3f /><rect x=1002 y=300 fill=#00fe3d /><rect x=1008 y=300 fill=#00ff3a /><rect x=1014 y=300 fill=#0dff38 /><rect x=1020 y=300 fill=#1bff35 /><rect x=1026 y=300 fill=#29ff32 /><rect x=1032 y=300 fill=#38ff2f /><rect x=1038 y=300 fill=#47ff2c /><rect x=1044 y=300 fill=#56ff29 /><rect x=1050 y=300 fill=#66ff25 /><rect x=1056 y=300 fill=#77ff22 /><rect x=1062 y=300 fill=#88ff1e /><rect x=1068 y=300 fill=#99ff1b /><rect x=1074 y=300 fill=#abff17 /><rect x=1080 y=300 fill=#beff13 /><rect x=1086 y=300 fill=#d1ff0f /><rect x=1092 y=300 fill=#e5ff0b /><rect x=1098 y=300 fill=#faff07 /><rect x=1104 y=300 fill=#fff002 /><rect x=1110 y=300 fill=#ffde00 /><rect x=1116 y=300 fill=#ffcd00 /><rect x=1122 y=300 fill=#ffbf00 /><rect x=1128 y=300 fill=#ffb200 /><rect x=1134 y=300 fill=#fea600 /><rect x=1140 y=300 fill=#fe9b00 /><rect x=1146 y=300 fill=#fe9100 /><rect x=1152 y=300 fill=#fe8800 /><rect x=1158 y=300 fill=#fd8000 /><rect x=1164 y=300 fill=#fa7700 />
<rect x=834 y=306 fill=#00f573 /><rect x=840 y=306 fill=#00f572 /><rect x=846 y=306 fill=#00f570 /><rect x=852 y=306 fill=#00f66f /><rect x=858 y=306 fill=#00f66e /><rect x=864 y=306 fill=#00f66c /><rect x=870 y=306 fill=#00f66b /><rect x=876 y=306 fill=#00f66a /><rect x=882 y=306 fill=#00f668 /><rect x=888 y=306 fill=#00f667 /><rect x=894 y=306 fill=#00f665 /><rect x=900 y=306 fill=#00f763 /><rect x=906 y=306 fill=#00f762 /><rect x=912 y=306 fill=#00f760 /><rect x=918 y=306 fill=#00f75f /><rect x=924 y=306 fill=#00f85d /><rect x=930 y=306 fill=#00f85b /><rect x=936 y=306 fill=#00f859 /><rect x=942 y=306 fill=#00f958 /><rect x=948 y=306 fill=#00f956 /><rect x=954 y=306 fill=#00f954 /><rect x=960 y=306 fill=#00fa52 /><rect x=966 y=306 fill=#00fa50 /><rect x=972 y=306 fill=#00fb4e /><rect x=978 y=306 fill=#00fc4c /><rect x=984 y=306 fill=#00fc4a /><rect x=990 y=306 fill=#00fd47 /><rect x=996 y=306 fill=#00fe45 /><rect x=1002 y=306 fill=#00fe43 /><rect x=1008 y=306 fill=#04ff40 /><rect x=1014 y=306 fill=#12ff3e /><rect x=1020 y=306 fill=#20ff3b /><rect x=1026 y=306 fill=#2eff38 /><rect x=1032 y=306 fill=#3dff35 /><rect x=1038 y=306 fill=#4dff32 /><rect x=1044 y=306 fill=#5dff2f /><rect x=1050 y=306 fill=#6dff2b /><rect x=1056 y=306 fill=#7eff28 /><rect x=1062 y=306 fill=#90ff24 /><rect x=1068 y=306 fill=#a2ff21 /><rect x=1074 y=306 fill=#b5ff1d /><rect x=1080 y=306 fill=#c8ff19 /><rect x=1086 y=306 fill=#dcff15 /><rect x=1092 y=306 fill=#f1ff11 /><rect x=1098 y=306 fill=#fff80c /><rect x=1104 y=306 fill=#ffe407 /><rect x=1110 y=306 fill=#ffd303 /><rect x=1116 y=306 fill=#ffc400 /><rect x=1122 y=306 fill=#ffb600 /><rect x=1128 y=306 fill=#ffa900 /><rect x=1134 y=306 fill=#ff9e00 /><rect x=1140 y=306 fill=#fe9400 /><rect x=1146 y=306 fill=#fe8a00 /><rect x=1152 y=306 fill=#fe8200 /><rect x=1158 y=306 fill=#fd7a00 /><rect x=1164 y=306 fill=#fa7100 /><rect x=1170 y=306 fill=#f56800 />
<rect x=834 y=312 fill=#00f679 /><rect x=840 y=312 fill=#00f677 /><rect x=846 y=312 fill=#00f676 /><rect x=852 y=312 fill=#00f775 /><rect x=858 y=312 fill=#00f774 /><rect x=864 y=312 fill=#00f772 /><rect x=870 y=312 fill=#00f771 /><rect x=876 y=312 fill=#00f76f /><rect x=882 y=312 fill=#00f76e /><rect x=888 y=312 fill=#00f76d /><rect x=894 y=312 fill=#00f76b /><rect x=900 y=312 fill=#00f869 /><rect x=906 y=312 fill=#00f868 /><rect x=912 y=312 fill=#00f866 /><rect x=918 y=312 fill=#00f865 /><rect x=924 y=312 fill=#00f963 /><rect x=930 y=312 fill=#00f961 /><rect x=936 y=312 fill=#00f960 /><rect x=942 y=312 fill=#00f95e /><rect x=948 y=312 fill=#00fa5c /><rect x=954 y=312 fill=#00fa5a /><rect x=960 y=312 fill=#00fb58 /><rect x=966 y=312 fill=#00fb56 /><rect x=972 y=312 fill=#00fc54 /><rect x=978 y=312 fill=#00fc52 /><rect x=984 y=312 fill=#00fd50 /><rect x=990 y=312 fill=#00fd4e /><rect x=996 y=312 fill=#00fe4b /><rect x=1002 y=312 fill=#00ff49 /><rect x=1008 y=312 fill=#08ff47 /><rect x=1014 y=312 fill=#16ff44 /><rect x=1020 y=312 fill=#24ff41 /><rect x=1026 y=312 fill=#33ff3e /><rect x=1032 y=312 fill=#43ff3b /><rect x=1038 y=312 fill=#53ff38 /><rect x=1044 y=312 fill=#64ff35 /><rect x=1050 y=312 fill=#75ff32 /><rect x=1056 y=312 fill=#86ff2e /><rect x=1062 y=312 fill=#98ff2b /><rect x=1068 y=312 fill=#abff27 /><rect x=1074 y=312 fill=#bfff23 /><rect x=1080 y=312 fill=#d3ff20 /><rect x=1086 y=312 fill=#e8ff1c /><rect x=1092 y=312 fill=#feff17 /><rect x=1098 y=312 fill=#ffeb12 /><rect x=1104 y=312 fill=#ffd90c /><rect x=1110 y=312 fill=#ffc908 /><rect x=1116 y=312 fill=#ffba04 /><rect x=1122 y=312 fill=#ffad00 /><rect x=1128 y=312 fill=#ffa100 /><rect x=1134 y=312 fill=#ff9600 /><rect x=1140 y=312 fill=#ff8d00 /><rect x=1146 y=312 fill=#fe8400 /><rect x=1152 y=312 fill=#fe7b00 /><rect x=1158 y=312 fill=#fd7400 /><rect x=1164 y=312 fill=#fa6b00 /><rect x=1170 y=312 fill=#f56300 /><rect x=1176 y=312 fill=#ef5b00 />
<rect x=834 y=318 fill=#00f77f /><rect x=840 y=318 fill=#00f77d /><rect x=846 y=318 fill=#00f77c /><rect x=852 y=318 fill=#00f77b /><rect x=858 y=318 fill=#00f87a /><rect x=864 y=318 fill=#00f878 /><rect x=870 y=318 fill=#00f877 /><rect x=876 y=318 fill=#00f876 /><rect x=882 y=318 fill=#00f874 /><rect x=888 y=318 fill=#00f873 /><rect x=894 y=318 fill=#00f871 /><rect x=900 y=318 fill=#00f970 /><rect x=906 y=318 fill=#00f96e /><rect x=912 y=318 fill=#00f96d /><rect x=918 y=318 fill=#00f96b /><rect x=924 y=318 fill=#00f969 /><rect x=930 y=318 fill=#00fa68 /><rect x=936 y=318 fill=#00fa66 /><rect x=942 y=318 fill=#00fa64 /><rect x=948 y=318 fill=#00fb62 /><rect x=954 y=318 fill=#00fb61 /><rect x=960 y=318 fill=#00fb5f /><rect x=966 y=318 fill=#00fc5d /><rect x=972 y=318 fill=#00fc5b /><rect x=978 y=318 fill=#00fd59 /><rect x=984 y=318 fill=#00fd57 /><rect x=990 y=318 fill=#00fe54 /><rect x=996 y=318 fill=#00fe52 /><rect x=1002 y=318 fill=#00ff50 /><rect x=1008 y=318 fill=#0cff4d /><rect x=1014 y=318 fill=#1aff4a /><rect x=1020 y=318 fill=#29ff48 /><rect x=1026 y=318 fill=#39ff45 /><rect x=1032 y=318 fill=#49ff42 /><rect x=1038 y=318 fill=#5aff3f /><rect x=1044 y=318 fill=#6bff3c /><rect x=1050 y=318 fill=#7cff38 /><rect x=1056 y=318 fill=#8fff35 /><rect x=1062 y=318 fill=#a2ff32 /><rect x=1068 y=318 fill=#b5ff2e /><rect x=1074 y=318 fill=#caff2a /><rect x=1080 y=318 fill=#dfff26 /><rect x=1086 y=318 fill=#f5ff22 /><rect x=1092 y=318 fill=#fff31d /><rect x=1098 y=318 fill=#ffe017 /><rect x=1104 y=318 fill=#ffce11 /><rect x=1110 y=318 fill=#ffbf0c /><rect x=1116 y=318 fill=#ffb108 /><rect x=1122 y=318 fill=#ffa504 /><rect x=1128 y=318 fill=#ff9901 /><rect x=1134 y=318 fill=#ff8f00 /><rect x=1140 y=318 fill=#ff8600 /><rect x=1146 y=318 fill=#ff7d00 /><rect x=1152 y=318 fill=#fe7500 /><rect x=1158 y=318 fill=#fe6e00 /><rect x=1164 y=318 fill=#fb6600 /><rect x=1170 y=318 fill=#f55e00 /><rect x=1176 y=318 fill=#ef5600 /><rect x=1182 y=318 fill=#e74e00 />
<rect x=840 y=324 fill=#00f883 /><rect x=846 y=324 fill=#00f882 /><rect x=852 y=324 fill=#00f881 /><rect x=858 y=324 fill=#00f880 /><rect x=864 y=324 fill=#00f87e /><rect x=870 y=324 fill=#00f87d /><rect x=876 y=324 fill=#00f97c /><rect x=882 y=324 fill=#00f97a /><rect x=888 y=324 fill=#00f979 /><rect x=894 y=324 fill=#00f978 /><rect x=900 y=324 fill=#00f976 /><rect x=906 y=324 fill=#00f975 /><rect x=912 y=324 fill=#00fa73 /><rect x=918 y=324 fill=#00fa72 /><rect x=924 y=324 fill=#00fa70 /><rect x=930 y=324 fill=#00fa6e /><rect x=936 y=324 fill=#00fb6d /><rect x=942 y=324 fill=#00fb6b /><rect x=948 y=324 fill=#00fb69 /><rect x=954 y=324 fill=#00fb67 /><rect x=960 y=324 fill=#00fc65 /><rect x=966 y=324 fill=#00fc64 /><rect x=972 y=324 fill=#00fd62 /><rect x=978 y=324 fill=#00fd60 /><rect x=984 y=324 fill=#00fd5d /><rect x=990 y=324 fill=#00fe5b /><rect x=996 y=324 fill=#00fe59 /><rect x=1002 y=324 fill=#01ff57 /><rect x=1008 y=324 fill=#10ff54 /><rect x=1014 y=324 fill=#1fff51 /><rect x=1020 y=324 fill=#2fff4f /><rect x=1026 y=324 fill=#3fff4c /><rect x=1032 y=324 fill=#4fff49 /><rect x=1038 y=324 fill=#61ff46 /><rect x=1044 y=324 fill=#72ff43 /><rect x=1050 y=324 fill=#85ff40 /><rect x=1056 y=324 fill=#98ff3c /><rect x=1062 y=324 fill=#acff39 /><rect x=1068 y=324 fill=#c0ff35 /><rect x=1074 y=324 fill=#d5ff32 /><rect x=1080 y=324 fill=#ebff2e /><rect x=1086 y=324 fill=#fffc29 /><rect x=1092 y=324 fill=#ffe722 /><rect x=1098 y=324 fill=#ffd41c /><rect x=1104 y=324 fill=#ffc416 /><rect x=1110 y=324 fill=#ffb511 /><rect x=1116 y=324 fill=#ffa80c /><rect x=1122 y=324 fill=#ff9c08 /><rect x=1128 y=324 fill=#ff9205 /><rect x=1134 y=324 fill=#ff8802 /><rect x=1140 y=324 fill=#ff7f00 /><rect x=1146 y=324 fill=#ff7700 /><rect x=1152 y=324 fill=#ff6f00 /><rect x=1158 y=324 fill=#fe6800 /><rect x=1164 y=324 fill=#fb6000 /><rect x=1170 y=324 fill=#f65900 /><rect x=1176 y=324 fill=#ef5100 /><rect x=1182 y=324 fill=#e74a00 /><rect x=1188 y=324 fill=#de4300 />
<rect x=840 y=330 fill=#00f88a /><rect x=846 y=330 fill=#00f988 /><rect x=852 y=330 fill=#00f987 /><rect x=858 y=330 fill=#00f986 /><rect x=864 y=330 fill=#00f985 /><rect x=870 y=330 fill=#00f984 /><rect x=876 y=330 fill=#00f982 /><rect x=882 y=330 fill=#00f981 /><rect x=888 y=330 fill=#00fa80 /><rect x=894 y=330 fill=#00fa7e /><rect x=900 y=330 fill=#00fa7d /><rect x=906 y=330 fill=#00fa7b /><rect x=912 y=330 fill=#00fa7a /><rect x=918 y=330 fill=#00fa78 /><rect x=924 y=330 fill=#00fb77 /><rect x=930 y=330 fill=#00fb75 /><rect x=936 y=330 fill=#00fb74 /><rect x=942 y=330 fill=#00fb72 /><rect x=948 y=330 fill=#00fc70 /><rect x=954 y=330 fill=#00fc6e /><rect x=960 y=330 fill=#00fc6d /><rect x=966 y=330 fill=#00fd6b /><rect x=972 y=330 fill=#00fd69 /><rect x=978 y=330 fill=#00fd67 /><rect x=984 y=330 fill=#00fe65 /><rect x=990 y=330 fill=#00fe63 /><rect x=996 y=330 fill=#00ff60 /><rect x=1002 y=330 fill=#05ff5e /><rect x=1008 y=330 fill=#15ff5c /><rect x=1014 y=330 fill=#24ff59 /><rect x=1020 y=330 fill=#34ff56 /><rect x=1026 y=330 fill=#45ff53 /><rect x=1032 y=330 fill=#56ff51 /><rect x=1038 y=330 fill=#68ff4e /><rect x=1044 y=330 fill=#7bff4a /><rect x=1050 y=330 fill=#8eff47 /><rect x=1056 y=330 fill=#a1ff44 /><rect x=1062 y=330 fill=#b6ff41 /><rect x=1068 y=330 fill=#cbff3d /><rect x=1074 y=330 fill=#e1ff39 /><rect x=1080 y=330 fill=#f8ff35 /><rect x=1086 y=330 fill=#ffef2e /><rect x=1092 y=330 fill=#ffdb27 /><rect x=1098 y=330 fill=#ffc920 /><rect x=1104 y=330 fill=#ffba1a /><rect x=1110 y=330 fill=#ffac15 /><rect x=1116 y=330 fill=#ff9f11 /><rect x=1122 y=330 fill=#ff940d /><rect x=1128 y=330 fill=#ff8a09 /><rect x=1134 y=330 fill=#ff8105 /><rect x=1140 y=330 fill=#ff7802 /><rect x=1146 y=330 fill=#ff7000 /><rect x=1152 y=330 fill=#ff6900 /><rect x=1158 y=330 fill=#fe6200 /><rect x=1164 y=330 fill=#fb5b00 /><rect x=1170 y=330 fill=#f65400 /><rect x=1176 y=330 fill=#ef4c00 /><rect x=1182 y=330 fill=#e74500 /><rect x=1188 y=330 fill=#de3f00 /><rect x=1194 y=330 fill=#d43800 />
<rect x=840 y=336 fill=#00f990 /><rect x=846 y=336 fill=#00f98f /><rect x=852 y=336 fill=#00f98e /><rect x=858 y=336 fill=#00f98d /><rect x=864 y=336 fill=#00f98b /><rect x=870 y=336 fill=#00fa8a /><rect x=876 y=336 fill=#00fa89 /><rect x=882 y=336 fill=#00fa88 /><rect x=888 y=336 fill=#00fa87 /><rect x=894 y=336 fill=#00fa85 /><rect x=900 y=336 fill=#00fa84 /><rect x=906 y=336 fill=#00fb82 /><rect x=912 y=336 fill=#00fb81 /><rect x=918 y=336 fill=#00fb80 /><rect x=924 y=336 fill=#00fb7e /><rect x=930 y=336 fill=#00fb7c /><rect x=936 y=336 fill=#00fc7b /><rect x=942 y=336 fill=#00fc79 /><rect x=948 y=336 fill=#00fc78 /><rect x=954 y=336 fill=#00fc76 /><rect x=960 y=336 fill=#00fd74 /><rect x=966 y=336 fill=#00fd72 /><rect x=972 y=336 fill=#00fd70 /><rect x=978 y=336 fill=#00fe6e /><rect x=984 y=336 fill=#00fe6c /><rect x=990 y=336 fill=#00fe6a /><rect x=996 y=336 fill=#00ff68 /><rect x=1002 y=336 fill=#0aff66 /><rect x=1008 y=336 fill=#19ff63 /><rect x=1014 y=336 fill=#2aff61 /><rect x=1020 y=336 fill=#3aff5e /><rect x=1026 y=336 fill=#4cff5b /><rect x=1032 y=336 fill=#5dff59 /><rect x=1038 y=336 fill=#70ff56 /><rect x=1044 y=336 fill=#83ff53 /><rect x=1050 y=336 fill=#97ff4f /><rect x=1056 y=336 fill=#acff4c /><rect x=1062 y=336 fill=#c1ff49 /><rect x=1068 y=336 fill=#d7ff45 /><rect x=1074 y=336 fill=#efff42 /><rect x=1080 y=336 fill=#fff73c /><rect x=1086 y=336 fill=#ffe233 /><rect x=1092 y=336 fill=#ffcf2c /><rect x=1098 y=336 fill=#ffbe25 /><rect x=1104 y=336 fill=#ffb01f /><rect x=1110 y=336 fill=#ffa31a /><rect x=1116 y=336 fill=#ff9715 /><rect x=1122 y=336 fill=#ff8c10 /><rect x=1128 y=336 fill=#ff830d /><rect x=1134 y=336 fill=#ff7a09 /><rect x=1140 y=336 fill=#ff7206 /><rect x=1146 y=336 fill=#ff6a03 /><rect x=1152 y=336 fill=#ff6300 /><rect x=1158 y=336 fill=#fe5d00 /><rect x=1164 y=336 fill=#fb5600 /><rect x=1170 y=336 fill=#f64f00 /><rect x=1176 y=336 fill=#ef4800 /><rect x=1182 y=336 fill=#e74100 /><rect x=1188 y=336 fill=#de3b00 /><rect x=1194 y=336 fill=#d43500 /><rect x=1200 y=336 fill=#ca2f00 />
<rect x=840 y=342 fill=#00f997 /><rect x=846 y=342 fill=#00f996 /><rect x=852 y=342 fill=#00f995 /><rect x=858 y=342 fill=#00fa93 /><rect x=864 y=342 fill=#00fa92 /><rect x=870 y=342 fill=#00fa91 /><rect x=876 y=342 fill=#00fa90 /><rect x=882 y=342 fill=#00fa8f /><rect x=888 y=342 fill=#00fa8e /><rect x=894 y=342 fill=#00fb8c /><rect x=900 y=342 fill=#00fb8b /><rect x=906 y=342 fill=#00fb8a /><rect x=912 y=342 fill=#00fb88 /><rect x=918 y=342 fill=#00fb87 /><rect x=924 y=342 fill=#00fc85 /><rect x=930 y=342 fill=#00fc84 /><rect x=936 y=342 fill=#00fc82 /><rect x=942 y=342 fill=#00fc81 /><rect x=948 y=342 fill=#00fc7f /><rect x=954 y=342 fill=#00fd7e /><rect x=960 y=342 fill=#00fd7c /><rect x=966 y=342 fill=#00fd7a /><rect x=972 y=342 fill=#00fe78 /><rect x=978 y=342 fill=#00fe76 /><rect x=984 y=342 fill=#00fe74 /><rect x=990 y=342 fill=#00ff72 /><rect x=996 y=342 fill=#00ff70 /><rect x=1002 y=342 fill=#0eff6e /><rect x=1008 y=342 fill=#1fff6c /><rect x=1014 y=342 fill=#2fff69 /><rect x=1020 y=342 fill=#41ff67 /><rect x=1026 y=342 fill=#53ff64 /><rect x=1032 y=342 fill=#65ff61 /><rect x=1038 y=342 fill=#78ff5e /><rect x=1044 y=342 fill=#8cff5b /><rect x=1050 y=342 fill=#a1ff58 /><rect x=1056 y=342 fill=#b7ff55 /><rect x=1062 y=342 fill=#cdff52 /><rect x=1068 y=342 fill=#e5ff4e /><rect x=1074 y=342 fill=#fdff4a /><rect x=1080 y=342 fill=#ffea41 /><rect x=1086 y=342 fill=#ffd538 /><rect x=1092 y=342 fill=#ffc430 /><rect x=1098 y=342 fill=#ffb429 /><rect x=1104 y=342 fill=#ffa623 /><rect x=1110 y=342 fill=#ff9a1e /><rect x=1116 y=342 fill=#ff8f19 /><rect x=1122 y=342 fill=#ff8414 /><rect x=1128 y=342 fill=#ff7b10 /><rect x=1134 y=342 fill=#ff730d /><rect x=1140 y=342 fill=#ff6b09 /><rect x=1146 y=342 fill=#ff6406 /><rect x=1152 y=342 fill=#ff5e03 /><rect x=1158 y=342 fill=#fe5701 /><rect x=1164 y=342 fill=#fb5100 /><rect x=1170 y=342 fill=#f64a00 /><rect x=1176 y=342 fill=#ef4300 /><rect x=1182 y=342 fill=#e73d00 /><rect x=1188 y=342 fill=#de3700 /><rect x=1194 y=342 fill=#d43100 /><rect x=1200 y=342 fill=#ca2c00 /><rect x=1206 y=342 fill=#bf2700 />
<rect x=840 y=348 fill=#00f99d /><rect x=846 y=348 fill=#00f99c /><rect x=852 y=348 fill=#00fa9c /><rect x=858 y=348 fill=#00fa9b /><rect x=864 y=348 fill=#00fa99 /><rect x=870 y=348 fill=#00fa98 /><rect x=876 y=348 fill=#00fa97 /><rect x=882 y=348 fill=#00fb96 /><rect x=888 y=348 fill=#00fb95 /><rect x=894 y=348 fill=#00fb94 /><rect x=900 y=348 fill=#00fb93 /><rect x=906 y=348 fill=#00fb91 /><rect x=912 y=348 fill=#00fb90 /><rect x=918 y=348 fill=#00fc8f /><rect x=924 y=348 fill=#00fc8d /><rect x=930 y=348 fill=#00fc8c /><rect x=936 y=348 fill=#00fc8a /><rect x=942 y=348 fill=#00fd89 /><rect x=948 y=348 fill=#00fd87 /><rect x=954 y=348 fill=#00fd86 /><rect x=960 y=348 fill=#00fd84 /><rect x=966 y=348 fill=#00fd82 /><rect x=972 y=348 fill=#00fe81 /><rect x=978 y=348 fill=#00fe7f /><rect x=984 y=348 fill=#00fe7d /><rect x=990 y=348 fill=#00ff7b /><rect x=996 y=348 fill=#03ff79 /><rect x=1002 y=348 fill=#13ff77 /><rect x=1008 y=348 fill=#24ff74 /><rect x=1014 y=348 fill=#35ff72 /><rect x=1020 y=348 fill=#47ff6f /><rect x=1026 y=348 fill=#5aff6d /><rect x=1032 y=348 fill=#6dff6a /><rect x=1038 y=348 fill=#81ff67 /><rect x=1044 y=348 fill=#96ff64 /><rect x=1050 y=348 fill=#acff61 /><rect x=1056 y=348 fill=#c3ff5e /><rect x=1062 y=348 fill=#daff5b /><rect x=1068 y=348 fill=#f3ff58 /><rect x=1074 y=348 fill=#fff350 /><rect x=1080 y=348 fill=#ffdd46 /><rect x=1086 y=348 fill=#ffca3c /><rect x=1092 y=348 fill=#ffb934 /><rect x=1098 y=348 fill=#ffaa2d /><rect x=1104 y=348 fill=#ff9d27 /><rect x=1110 y=348 fill=#ff9122 /><rect x=1116 y=348 fill=#ff871d /><rect x=1122 y=348 fill=#ff7d18 /><rect x=1128 y=348 fill=#ff7414 /><rect x=1134 y=348 fill=#ff6c10 /><rect x=1140 y=348 fill=#ff650d /><rect x=1146 y=348 fill=#ff5e09 /><rect x=1152 y=348 fill=#ff5806 /><rect x=1158 y=348 fill=#fe5204 /><rect x=1164 y=348 fill=#fb4c01 /><rect x=1170 y=348 fill=#f64500 /><rect x=1176 y=348 fill=#f03f00 /><rect x=1182 y=348 fill=#e73900 /><rect x=1188 y=348 fill=#de3300 /><rect x=1194 y=348 fill=#d42e00 /><rect x=1200 y=348 fill=#ca2900 /><rect x=1206 y=348 fill=#bf2400 /><rect x=1212 y=348 fill=#b52000 />
<rect x=840 y=354 fill=#00f9a5 /><rect x=846 y=354 fill=#00faa4 /><rect x=852 y=354 fill=#00faa3 /><rect x=858 y=354 fill=#00faa2 /><rect x=864 y=354 fill=#00faa1 /><rect x=870 y=354 fill=#00faa0 /><rect x=876 y=354 fill=#00fb9f /><rect x=882 y=354 fill=#00fb9e /><rect x=888 y=354 fill=#00fb9d /><rect x=894 y=354 fill=#00fb9c /><rect x=900 y=354 fill=#00fb9b /><rect x=906 y=354 fill=#00fc99 /><rect x=912 y=354 fill=#00fc98 /><rect x=918 y=354 fill=#00fc97 /><rect x=924 y=354 fill=#00fc96 /><rect x=930 y=354 fill=#00fc94 /><rect x=936 y=354 fill=#00fd93 /><rect x=942 y=354 fill=#00fd91 /><rect x=948 y=354 fill=#00fd90 /><rect x=954 y=354 fill=#00fd8e /><rect x=960 y=354 fill=#00fd8d /><rect x=966 y=354 fill=#00fe8b /><rect x=972 y=354 fill=#00fe8a /><rect x=978 y=354 fill=#00fe88 /><rect x=984 y=354 fill=#00ff86 /><rect x=990 y=354 fill=#00ff84 /><rect x=996 y=354 fill=#08ff82 /><rect x=1002 y=354 fill=#18ff80 /><rect x=1008 y=354 fill=#2aff7e /><rect x=1014 y=354 fill=#3cff7b /><rect x=1020 y=354 fill=#4eff79 /><rect x=1026 y=354 fill=#62ff76 /><rect x=1032 y=354 fill=#76ff74 /><rect x=1038 y=354 fill=#8bff71 /><rect x=1044 y=354 fill=#a1ff6e /><rect x=1050 y=354 fill=#b8ff6b /><rect x=1056 y=354 fill=#cfff68 /><rect x=1062 y=354 fill=#e8ff65 /><rect x=1068 y=354 fill=#fffc61 /><rect x=1074 y=354 fill=#ffe555 /><rect x=1080 y=354 fill=#ffd04a /><rect x=1086 y=354 fill=#ffbe41 /><rect x=1092 y=354 fill=#ffae39 /><rect x=1098 y=354 fill=#ffa032 /><rect x=1104 y=354 fill=#ff942b /><rect x=1110 y=354 fill=#ff8925 /><rect x=1116 y=354 fill=#ff7f20 /><rect x=1122 y=354 fill=#ff761c /><rect x=1128 y=354 fill=#ff6d17 /><rect x=1134 y=354 fill=#ff6613 /><rect x=1140 y=354 fill=#ff5f10 /><rect x=1146 y=354 fill=#ff580d /><rect x=1152 y=354 fill=#ff5209 /><rect x=1158 y=354 fill=#fe4d07 /><rect x=1164 y=354 fill=#fb4704 /><rect x=1170 y=354 fill=#f64102 /><rect x=1176 y=354 fill=#f03b00 /><rect x=1182 y=354 fill=#e83500 /><rect x=1188 y=354 fill=#df2f00 /><rect x=1194 y=354 fill=#d52a00 /><rect x=1200 y=354 fill=#ca2500 /><rect x=1206 y=354 fill=#c02100 /><rect x=1212 y=354 fill=#b51d00 /><rect x=1218 y=354 fill=#ac1a00 />
<rect x=846 y=360 fill=#00faab /><rect x=852 y=360 fill=#00faaa /><rect x=858 y=360 fill=#00faa9 /><rect x=864 y=360 fill=#00faa9 /><rect x=870 y=360 fill=#00fba8 /><rect x=876 y=360 fill=#00fba7 /><rect x=882 y=360 fill=#00fba6 /><rect x=888 y=360 fill=#00fba5 /><rect x=894 y=360 fill=#00fba4 /><rect x=900 y=360 fill=#00fca3 /><rect x=906 y=360 fill=#00fca2 /><rect x=912 y=360 fill=#00fca1 /><rect x=918 y=360 fill=#00fc9f /><rect x=924 y=360 fill=#00fc9e /><rect x=930 y=360 fill=#00fd9d /><rect x=936 y=360 fill=#00fd9c /><rect x=942 y=360 fill=#00fd9a /><rect x=948 y=360 fill=#00fd99 /><rect x=954 y=360 fill=#00fd97 /><rect x=960 y=360 fill=#00fe96 /><rect x=966 y=360 fill=#00fe94 /><rect x=972 y=360 fill=#00fe93 /><rect x=978 y=360 fill=#00fe91 /><rect x=984 y=360 fill=#00ff90 /><rect x=990 y=360 fill=#00ff8e /><rect x=996 y=360 fill=#0cff8c /><rect x=1002 y=360 fill=#1eff8a /><rect x=1008 y=360 fill=#30ff88 /><rect x=1014 y=360 fill=#43ff85 /><rect x=1020 y=360 fill=#56ff83 /><rect x=1026 y=360 fill=#6aff81 /><rect x=1032 y=360 fill=#7fff7e /><rect x=1038 y=360 fill=#95ff7c /><rect x=1044 y=360 fill=#acff79 /><rect x=1050 y=360 fill=#c4ff76 /><rect x=1056 y=360 fill=#ddff73 /><rect x=1062 y=360 fill=#f7ff70 /><rect x=1068 y=360 fill=#ffed65 /><rect x=1074 y=360 fill=#ffd759 /><rect x=1080 y=360 fill=#ffc44e /><rect x=1086 y=360 fill=#ffb345 /><rect x=1092 y=360 fill=#ffa43d /><rect x=1098 y=360 fill=#ff9736 /><rect x=1104 y=360 fill=#ff8b2f /><rect x=1110 y=360 fill=#ff8129 /><rect x=1116 y=360 fill=#ff7724 /><rect x=1122 y=360 fill=#ff6f1f /><rect x=1128 y=360 fill=#ff671b /><rect x=1134 y=360 fill=#ff5f17 /><rect x=1140 y=360 fill=#ff5913 /><rect x=1146 y=360 fill=#ff5310 /><rect x=1152 y=360 fill=#ff4d0d /><rect x=1158 y=360 fill=#fe470a /><rect x=1164 y=360 fill=#fb4207 /><rect x=1170 y=360 fill=#f63c04 /><rect x=1176 y=360 fill=#f03702 /><rect x=1182 y=360 fill=#e83100 /><rect x=1188 y=360 fill=#df2c00 /><rect x=1194 y=360 fill=#d52700 /><rect x=1200 y=360 fill=#ca2200 /><rect x=1206 y=360 fill=#c01e00 /><rect x=1212 y=360 fill=#b61b00 /><rect x=1218 y=360 fill=#ac1700 /><rect x=1224 y=360 fill=#a31400 />
<rect x=846 y=366 fill=#00fab3 /><rect x=852 y=366 fill=#00fab2 /><rect x=858 y=366 fill=#00fab1 /><rect x=864 y=366 fill=#00fab1 /><rect x=870 y=366 fill=#00fbb0 /><rect x=876 y=366 fill=#00fbaf /><rect x=882 y=366 fill=#00fbae /><rect x=888 y=366 fill=#00fbad /><rect x=894 y=366 fill=#00fbac /><rect x=900 y=366 fill=#00fcab /><rect x=906 y=366 fill=#00fcaa /><rect x=912 y=366 fill=#00fca9 /><rect x=918 y=366 fill=#00fca8 /><rect x=924 y=366 fill=#00fda7 /><rect x=930 y=366 fill=#00fda6 /><rect x=936 y=366 fill=#00fda5 /><rect x=942 y=366 fill=#00fda4 /><rect x=948 y=366 fill=#00fda2 /><rect x=954 y=366 fill=#00fea1 /><rect x=960 y=366 fill=#00fea0 /><rect x=966 y=366 fill=#00fe9e /><rect x=972 y=366 fill=#00fe9d /><rect x=978 y=366 fill=#00fe9b /><rect x=984 y=366 fill=#00ff9a /><rect x=990 y=366 fill=#00ff98 /><rect x=996 y=366 fill=#12ff96 /><rect x=1002 y=366 fill=#24ff94 /><rect x=1008 y=366 fill=#36ff92 /><rect x=1014 y=366 fill=#4aff90 /><rect x=1020 y=366 fill=#5eff8e /><rect x=1026 y=366 fill=#74ff8c /><rect x=1032 y=366 fill=#8aff89 /><rect x=1038 y=366 fill=#a1ff87 /><rect x=1044 y=366 fill=#b8ff84 /><rect x=1050 y=366 fill=#d1ff82 /><rect x=1056 y=366 fill=#ecff7f /><rect x=1062 y=366 fill=#fff778 /><rect x=1068 y=366 fill=#ffdf6a /><rect x=1074 y=366 fill=#ffca5d /><rect x=1080 y=366 fill=#ffb853 /><rect x=1086 y=366 fill=#ffa849 /><rect x=1092 y=366 fill=#ff9a41 /><rect x=1098 y=366 fill=#ff8e39 /><rect x=1104 y=366 fill=#ff8333 /><rect x=1110 y=366 fill=#ff792d /><rect x=1116 y=366 fill=#ff7028 /><rect x=1122 y=366 fill=#ff6823 /><rect x=1128 y=366 fill=#ff601e /><rect x=1134 y=366 fill=#ff591a /><rect x=1140 y=366 fill=#ff5316 /><rect x=1146 y=366 fill=#ff4d13 /><rect x=1152 y=366 fill=#ff4810 /><rect x=1158 y=366 fill=#fe420d /><rect x=1164 y=366 fill=#fb3d0a /><rect x=1170 y=366 fill=#f63807 /><rect x=1176 y=366 fill=#f03204 /><rect x=1182 y=366 fill=#e82d02 /><rect x=1188 y=366 fill=#df2800 /><rect x=1194 y=366 fill=#d52400 /><rect x=1200 y=366 fill=#cb1f00 /><rect x=1206 y=366 fill=#c01c00 /><rect x=1212 y=366 fill=#b61800 /><rect x=1218 y=366 fill=#ac1500 /><rect x=1224 y=366 fill=#a31200 /><rect x=1230 y=366 fill=#9b1000 />
<rect x=846 y=372 fill=#00fabb /><rect x=852 y=372 fill=#00faba /><rect x=858 y=372 fill=#00faba /><rect x=864 y=372 fill=#00fbb9 /><rect x=870 y=372 fill=#00fbb8 /><rect x=876 y=372 fill=#00fbb8 /><rect x=882 y=372 fill=#00fbb7 /><rect x=888 y=372 fill=#00fbb6 /><rect x=894 y=372 fill=#00fcb5 /><rect x=900 y=372 fill=#00fcb4 /><rect x=906 y=372 fill=#00fcb4 /><rect x=912 y=372 fill=#00fcb3 /><rect x=918 y=372 fill=#00fcb2 /><rect x=924 y=372 fill=#00fdb1 /><rect x=930 y=372 fill=#00fdb0 /><rect x=936 y=372 fill=#00fdaf /><rect x=942 y=372 fill=#00fdae /><rect x=948 y=372 fill=#00fdac /><rect x=954 y=372 fill=#00feab /><rect x=960 y=372 fill=#00feaa /><rect x=966 y=372 fill=#00fea9 /><rect x=972 y=372 fill=#00fea7 /><rect x=978 y=372 fill=#00ffa6 /><rect x=984 y=372 fill=#00ffa5 /><rect x=990 y=372 fill=#05ffa3 /><rect x=996 y=372 fill=#17ffa1 /><rect x=1002 y=372 fill=#2affa0 /><rect x=1008 y=372 fill=#3eff9e /><rect x=1014 y=372 fill=#52ff9c /><rect x=1020 y=372 fill=#67ff9a /><rect x=1026 y=372 fill=#7dff98 /><rect x=1032 y=372 fill=#94ff96 /><rect x=1038 y=372 fill=#adff93 /><rect x=1044 y=372 fill=#c6ff91 /><rect x=1050 y=372 fill=#e0ff8e /><rect x=1056 y=372 fill=#fcff8c /><rect x=1062 y=372 fill=#ffe87d /><rect x=1068 y=372 fill=#ffd16e /><rect x=1074 y=372 fill=#ffbe61 /><rect x=1080 y=372 fill=#ffad57 /><rect x=1086 y=372 fill=#ff9e4d /><rect x=1092 y=372 fill=#ff9145 /><rect x=1098 y=372 fill=#ff853d /><rect x=1104 y=372 fill=#ff7b37 /><rect x=1110 y=372 fill=#ff7130 /><rect x=1116 y=372 fill=#ff692b /><rect x=1122 y=372 fill=#ff6126 /><rect x=1128 y=372 fill=#ff5a21 /><rect x=1134 y=372 fill=#ff531d /><rect x=1140 y=372 fill=#ff4d19 /><rect x=1146 y=372 fill=#ff4816 /><rect x=1152 y=372 fill=#ff4212 /><rect x=1158 y=372 fill=#fe3d0f /><rect x=1164 y=372 fill=#fb380c /><rect x=1170 y=372 fill=#f6330a /><rect x=1176 y=372 fill=#f02e07 /><rect x=1182 y=372 fill=#e82905 /><rect x=1188 y=372 fill=#df2502 /><rect x=1194 y=372 fill=#d62001 /><rect x=1200 y=372 fill=#cb1c00 /><rect x=1206 y=372 fill=#c11900 /><rect x=1212 y=372 fill=#b61600 /><rect x=1218 y=372 fill=#ad1300 /><rect x=1224 y=372 fill=#a41000 /><rect x=1230 y=372 fill=#9c0e00 /><rect x=1236 y=372 fill=#950c00 />
<rect x=846 y=378 fill=#00fac4 /><rect x=852 y=378 fill=#00fac3 /><rect x=858 y=378 fill=#00fac3 /><rect x=864 y=378 fill=#00fbc2 /><rect x=870 y=378 fill=#00fbc1 /><rect x=876 y=378 fill=#00fbc1 /><rect x=882 y=378 fill=#00fbc0 /><rect x=888 y=378 fill=#00fbbf /><rect x=894 y=378 fill=#00fcbf /><rect x=900 y=378 fill=#00fcbe /><rect x=906 y=378 fill=#00fcbd /><rect x=912 y=378 fill=#00fcbc /><rect x=918 y=378 fill=#00fdbc /><rect x=924 y=378 fill=#00fdbb /><rect x=930 y=378 fill=#00fdba /><rect x=936 y=378 fill=#00fdb9 /><rect x=942 y=378 fill=#00fdb8 /><rect x=948 y=378 fill=#00feb7 /><rect x=954 y=378 fill=#00feb6 /><rect x=960 y=378 fill=#00feb5 /><rect x=966 y=378 fill=#00feb4 /><rect x=972 y=378 fill=#00feb3 /><rect x=978 y=378 fill=#00ffb1 /><rect x=984 y=378 fill=#00ffb0 /><rect x=990 y=378 fill=#0affaf /><rect x=996 y=378 fill=#1dffad /><rect x=1002 y=378 fill=#31ffac /><rect x=1008 y=378 fill=#45ffaa /><rect x=1014 y=378 fill=#5affa8 /><rect x=1020 y=378 fill=#71ffa6 /><rect x=1026 y=378 fill=#88ffa5 /><rect x=1032 y=378 fill=#a0ffa3 /><rect x=1038 y=378 fill=#b9ffa0 /><rect x=1044 y=378 fill=#d4ff9e /><rect x=1050 y=378 fill=#f0ff9c /><rect x=1056 y=378 fill=#fff292 /><rect x=1062 y=378 fill=#ffd981 /><rect x=1068 y=378 fill=#ffc472 /><rect x=1074 y=378 fill=#ffb265 /><rect x=1080 y=378 fill=#ffa25b /><rect x=1086 y=378 fill=#ff9451 /><rect x=1092 y=378 fill=#ff8748 /><rect x=1098 y=378 fill=#ff7c41 /><rect x=1104 y=378 fill=#ff733a /><rect x=1110 y=378 fill=#ff6a34 /><rect x=1116 y=378 fill=#ff622e /><rect x=1122 y=378 fill=#ff5a29 /><rect x=1128 y=378 fill=#ff5325 /><rect x=1134 y=378 fill=#ff4d20 /><rect x=1140 y=378 fill=#ff471c /><rect x=1146 y=378 fill=#ff4219 /><rect x=1152 y=378 fill=#ff3d15 /><rect x=1158 y=378 fill=#fe3912 /><rect x=1164 y=378 fill=#fb340f /><rect x=1170 y=378 fill=#f62f0c /><rect x=1176 y=378 fill=#f02a09 /><rect x=1182 y=378 fill=#e82607 /><rect x=1188 y=378 fill=#df2105 /><rect x=1194 y=378 fill=#d61d03 /><rect x=1200 y=378 fill=#cc1a01 /><rect x=1206 y=378 fill=#c11600 /><rect x=1212 y=378 fill=#b71300 /><rect x=1218 y=378 fill=#ad1000 /><rect x=1224 y=378 fill=#a40e00 /><rect x=1230 y=378 fill=#9c0c00 /><rect x=1236 y=378 fill=#960a00 /><rect x=1242 y=378 fill=#910900 />
<rect x=846 y=384 fill=#00facd /><rect x=852 y=384 fill=#00facc /><rect x=858 y=384 fill=#00facc /><rect x=864 y=384 fill=#00fbcb /><rect x=870 y=384 fill=#00fbcb /><rect x=876 y=384 fill=#00fbca /><rect x=882 y=384 fill=#00fbca /><rect x=888 y=384 fill=#00fcc9 /><rect x=894 y=384 fill=#00fcc9 /><rect x=900 y=384 fill=#00fcc8 /><rect x=906 y=384 fill=#00fcc7 /><rect x=912 y=384 fill=#00fcc7 /><rect x=918 y=384 fill=#00fdc6 /><rect x=924 y=384 fill=#00fdc5 /><rect x=930 y=384 fill=#00fdc5 /><rect x=936 y=384 fill=#00fdc4 /><rect x=942 y=384 fill=#00fdc3 /><rect x=948 y=384 fill=#00fec2 /><rect x=954 y=384 fill=#00fec2 /><rect x=960 y=384 fill=#00fec1 /><rect x=966 y=384 fill=#00fec0 /><rect x=972 y=384 fill=#00ffbf /><rect x=978 y=384 fill=#00ffbe /><rect x=984 y=384 fill=#00ffbd /><rect x=990 y=384 fill=#10ffbb /><rect x=996 y=384 fill=#23ffba /><rect x=1002 y=384 fill=#38ffb9 /><rect x=1008 y=384 fill=#4dffb7 /><rect x=1014 y=384 fill=#64ffb6 /><rect x=1020 y=384 fill=#7bffb4 /><rect x=1026 y=384 fill=#93ffb2 /><rect x=1032 y=384 fill=#adffb1 /><rect x=1038 y=384 fill=#c8ffaf /><rect x=1044 y=384 fill=#e4ffad /><rect x=1050 y=384 fill=#fffda9 /><rect x=1056 y=384 fill=#ffe295 /><rect x=1062 y=384 fill=#ffcb84 /><rect x=1068 y=384 fill=#ffb776 /><rect x=1074 y=384 fill=#ffa669 /><rect x=1080 y=384 fill=#ff975e /><rect x=1086 y=384 fill=#ff8a55 /><rect x=1092 y=384 fill=#ff7f4c /><rect x=1098 y=384 fill=#ff7444 /><rect x=1104 y=384 fill=#ff6b3e /><rect x=1110 y=384 fill=#ff6237 /><rect x=1116 y=384 fill=#ff5b32 /><rect x=1122 y=384 fill=#ff542c /><rect x=1128 y=384 fill=#ff4d28 /><rect x=1134 y=384 fill=#ff4723 /><rect x=1140 y=384 fill=#ff421f /><rect x=1146 y=384 fill=#ff3d1c /><rect x=1152 y=384 fill=#ff3818 /><rect x=1158 y=384 fill=#fe3415 /><rect x=1164 y=384 fill=#fb2f12 /><rect x=1170 y=384 fill=#f62b0f /><rect x=1176 y=384 fill=#f0260c /><rect x=1182 y=384 fill=#e82209 /><rect x=1188 y=384 fill=#df1e07 /><rect x=1194 y=384 fill=#d61a05 /><rect x=1200 y=384 fill=#cc1703 /><rect x=1206 y=384 fill=#c21301 /><rect x=1212 y=384 fill=#b81100 /><rect x=1218 y=384 fill=#ae0e00 /><rect x=1224 y=384 fill=#a50c00 /><rect x=1230 y=384 fill=#9d0a00 /><rect x=1236 y=384 fill=#960800 /><rect x=1242 y=384 fill=#920700 /><rect x=1248 y=384 fill=#8f0600 />
<rect x=852 y=390 fill=#00fad6 /><rect x=858 y=390 fill=#00fad5 /><rect x=864 y=390 fill=#00fbd5 /><rect x=870 y=390 fill=#00fbd5 /><rect x=876 y=390 fill=#00fbd4 /><rect x=882 y=390 fill=#00fbd4 /><rect x=888 y=390 fill=#00fcd4 /><rect x=894 y=390 fill=#00fcd3 /><rect x=900 y=390 fill=#00fcd3 /><rect x=906 y=390 fill=#00fcd2 /><rect x=912 y=390 fill=#00fcd2 /><rect x=918 y=390 fill=#00fdd1 /><rect x=924 y=390 fill=#00fdd1 /><rect x=930 y=390 fill=#00fdd0 /><rect x=936 y=390 fill=#00fdd0 /><rect x=942 y=390 fill=#00fecf /><rect x=948 y=390 fill=#00fece /><rect x=954 y=390 fill=#00fece /><rect x=960 y=390 fill=#00fecd /><rect x=966 y=390 fill=#00fecc /><rect x=972 y=390 fill=#00ffcc /><rect x=978 y=390 fill=#00ffcb /><rect x=984 y=390 fill=#02ffca /><rect x=990 y=390 fill=#16ffc9 /><rect x=996 y=390 fill=#2affc8 /><rect x=1002 y=390 fill=#40ffc7 /><rect x=1008 y=390 fill=#56ffc5 /><rect x=1014 y=390 fill=#6dffc4 /><rect x=1020 y=390 fill=#86ffc3 /><rect x=1026 y=390 fill=#a0ffc1 /><rect x=1032 y=390 fill=#bbffc0 /><rect x=1038 y=390 fill=#d7ffbe /><rect x=1044 y=390 fill=#f5ffbd /><rect x=1050 y=390 fill=#ffecad /><rect x=1056 y=390 fill=#ffd299 /><rect x=1062 y=390 fill=#ffbd88 /><rect x=1068 y=390 fill=#ffab7a /><rect x=1074 y=390 fill=#ff9b6d /><rect x=1080 y=390 fill=#ff8d62 /><rect x=1086 y=390 fill=#ff8158 /><rect x=1092 y=390 fill=#ff7650 /><rect x=1098 y=390 fill=#ff6c48 /><rect x=1104 y=390 fill=#ff6341 /><rect x=1110 y=390 fill=#ff5b3b /><rect x=1116 y=390 fill=#ff5435 /><rect x=1122 y=390 fill=#ff4d30 /><rect x=1128 y=390 fill=#ff472b /><rect x=1134 y=390 fill=#ff4226 /><rect x=1140 y=390 fill=#ff3d22 /><rect x=1146 y=390 fill=#ff381e /><rect x=1152 y=390 fill=#ff331b /><rect x=1158 y=390 fill=#fe2f18 /><rect x=1164 y=390 fill=#fb2b14 /><rect x=1170 y=390 fill=#f62611 /><rect x=1176 y=390 fill=#f0220e /><rect x=1182 y=390 fill=#e81e0b /><rect x=1188 y=390 fill=#df1a09 /><rect x=1194 y=390 fill=#d61707 /><rect x=1200 y=390 fill=#cc1405 /><rect x=1206 y=390 fill=#c21103 /><rect x=1212 y=390 fill=#b80e01 /><rect x=1218 y=390 fill=#af0c00 /><rect x=1224 y=390 fill=#a60a00 /><rect x=1230 y=390 fill=#9e0800 /><rect x=1236 y=390 fill=#970700 /><rect x=1242 y=390 fill=#920500 /><rect x=1248 y=390 fill=#900400 /><rect x=1254 y=390 fill=#8e0300 />
<rect x=852 y=396 fill=#00fadf /><rect x=858 y=396 fill=#00fadf /><rect x=864 y=396 fill=#00fbdf /><rect x=870 y=396 fill=#00fbdf /><rect x=876 y=396 fill=#00fbdf /><rect x=882 y=396 fill=#00fbdf /><rect x=888 y=396 fill=#00fcde /><rect x=894 y=396 fill=#00fcde /><rect x=900 y=396 fill=#00fcde /><rect x=906 y=396 fill=#00fcde /><rect x=912 y=396 fill=#00fcdd /><rect x=918 y=396 fill=#00fddd /><rect x=924 y=396 fill=#00fddd /><rect x=930 y=396 fill=#00fddc /><rect x=936 y=396 fill=#00fddc /><rect x=942 y=396 fill=#00fedc /><rect x=948 y=396 fill=#00fedb /><rect x=954 y=396 fill=#00fedb /><rect x=960 y=396 fill=#00feda /><rect x=966 y=396 fill=#00feda /><rect x=972 y=396 fill=#00ffd9 /><rect x=978 y=396 fill=#00ffd9 /><rect x=984 y=396 fill=#07ffd8 /><rect x=990 y=396 fill=#1cffd7 /><rect x=996 y=396 fill=#32ffd7 /><rect x=1002 y=396 fill=#48ffd6 /><rect x=1008 y=396 fill=#60ffd5 /><rect x=1014 y=396 fill=#78ffd4 /><rect x=1020 y=396 fill=#92ffd3 /><rect x=1026 y=396 fill=#adffd2 /><rect x=1032 y=396 fill=#caffd1 /><rect x=1038 y=396 fill=#e8ffd0 /><rect x=1044 y=396 fill=#fff7c8 /><rect x=1050 y=396 fill=#ffdbb0 /><rect x=1056 y=396 fill=#ffc49c /><rect x=1062 y=396 fill=#ffb08c /><rect x=1068 y=396 fill=#ff9f7d /><rect x=1074 y=396 fill=#ff9071 /><rect x=1080 y=396 fill=#ff8366 /><rect x=1086 y=396 fill=#ff785c /><rect x=1092 y=396 fill=#ff6d53 /><rect x=1098 y=396 fill=#ff644b /><rect x=1104 y=396 fill=#ff5c44 /><rect x=1110 y=396 fill=#ff543e /><rect x=1116 y=396 fill=#ff4d38 /><rect x=1122 y=396 fill=#ff4733 /><rect x=1128 y=396 fill=#ff412e /><rect x=1134 y=396 fill=#ff3c29 /><rect x=1140 y=396 fill=#ff3725 /><rect x=1146 y=396 fill=#ff3321 /><rect x=1152 y=396 fill=#ff2f1e /><rect x=1158 y=396 fill=#fe2a1a /><rect x=1164 y=396 fill=#fb2617 /><rect x=1170 y=396 fill=#f62214 /><rect x=1176 y=396 fill=#f01e11 /><rect x=1182 y=396 fill=#e81b0e /><rect x=1188 y=396 fill=#df170b /><rect x=1194 y=396 fill=#d61409 /><rect x=1200 y=396 fill=#cc1106 /><rect x=1206 y=396 fill=#c20e05 /><rect x=1212 y=396 fill=#b80c03 /><rect x=1218 y=396 fill=#af0a02 /><rect x=1224 y=396 fill=#a60800 /><rect x=1230 y=396 fill=#9e0600 /><rect x=1236 y=396 fill=#980500 /><rect x=1242 y=396 fill=#930400 /><rect x=1248 y=396 fill=#900300 /><rect x=1254 y=396 fill=#8f0200 /><rect x=1260 y=396 fill=#8e0100 />
<rect x=852 y=402 fill=#00faea /><rect x=858 y=402 fill=#00faea /><rect x=864 y=402 fill=#00fbea /><rect x=870 y=402 fill=#00fbea /><rect x=876 y=402 fill=#00fbea /><rect x=882 y=402 fill=#00fbea /><rect x=888 y=402 fill=#00fcea /><rect x=894 y=402 fill=#00fcea /><rect x=900 y=402 fill=#00fcea /><rect x=906 y=402 fill=#00fcea /><rect x=912 y=402 fill=#00fdea /><rect x=918 y=402 fill=#00fdea /><rect x=924 y=402 fill=#00fde9 /><rect x=930 y=402 fill=#00fde9 /><rect x=936 y=402 fill=#00fde9 /><rect x=942 y=402 fill=#00fee9 /><rect x=948 y=402 fill=#00fee9 /><rect x=954 y=402 fill=#00fee9 /><rect x=960 y=402 fill=#00fee9 /><rect x=966 y=402 fill=#00fee8 /><rect x=972 y=402 fill=#00ffe8 /><rect x=978 y=402 fill=#00ffe8 /><rect x=984 y=402 fill=#0dffe8 /><rect x=990 y=402 fill=#23ffe7 /><rect x=996 y=402 fill=#3affe7 /><rect x=1002 y=402 fill=#51ffe6 /><rect x=1008 y=402 fill=#6affe5 /><rect x=1014 y=402 fill=#84ffe5 /><rect x=1020 y=402 fill=#9fffe4 /><rect x=1026 y=402 fill=#bcffe4 /><rect x=1032 y=402 fill=#daffe3 /><rect x=1038 y=402 fill=#faffe2 /><rect x=1044 y=402 fill=#ffe5cb /><rect x=1050 y=402 fill=#ffcbb3 /><rect x=1056 y=402 fill=#ffb6a0 /><rect x=1062 y=402 fill=#ffa48f /><rect x=1068 y=402 fill=#ff9481 /><rect x=1074 y=402 fill=#ff8674 /><rect x=1080 y=402 fill=#ff7a69 /><rect x=1086 y=402 fill=#ff6f5f /><rect x=1092 y=402 fill=#ff6556 /><rect x=1098 y=402 fill=#ff5d4e /><rect x=1104 y=402 fill=#ff5547 /><rect x=1110 y=402 fill=#ff4e41 /><rect x=1116 y=402 fill=#ff473b /><rect x=1122 y=402 fill=#ff4136 /><rect x=1128 y=402 fill=#ff3c31 /><rect x=1134 y=402 fill=#ff372c /><rect x=1140 y=402 fill=#ff3228 /><rect x=1146 y=402 fill=#ff2e24 /><rect x=1152 y=402 fill=#ff2a20 /><rect x=1158 y=402 fill=#fe261d /><rect x=1164 y=402 fill=#fb2219 /><rect x=1170 y=402 fill=#f61e16 /><rect x=1176 y=402 fill=#f01b13 /><rect x=1182 y=402 fill=#e81710 /><rect x=1188 y=402 fill=#df140d /><rect x=1194 y=402 fill=#d6110b /><rect x=1200 y=402 fill=#cc0e08 /><rect x=1206 y=402 fill=#c20c06 /><rect x=1212 y=402 fill=#b80905 /><rect x=1218 y=402 fill=#af0803 /><rect x=1224 y=402 fill=#a60602 /><rect x=1230 y=402 fill=#9f0501 /><rect x=1236 y=402 fill=#990300 /><rect x=1242 y=402 fill=#940200 /><rect x=1248 y=402 fill=#920100 /><rect x=1254 y=402 fill=#900000 /><rect x=1260 y=402 fill=#8f0000 /><rect x=1266 y=402 fill=#8d0000 />
<rect x=852 y=408 fill=#00faf5 /><rect x=858 y=408 fill=#00faf5 /><rect x=864 y=408 fill=#00fbf5 /><rect x=870 y=408 fill=#00fbf6 /><rect x=876 y=408 fill=#00fbf6 /><rect x=882 y=408 fill=#00fbf6 /><rect x=888 y=408 fill=#00fcf6 /><rect x=894 y=408 fill=#00fcf6 /><rect x=900 y=408 fill=#00fcf6 /><rect x=906 y=408 fill=#00fcf7 /><rect x=912 y=408 fill=#00fdf7 /><rect x=918 y=408 fill=#00fdf7 /><rect x=924 y=408 fill=#00fdf7 /><rect x=930 y=408 fill=#00fdf7 /><rect x=936 y=408 fill=#00fdf7 /><rect x=942 y=408 fill=#00fef8 /><rect x=948 y=408 fill=#00fef8 /><rect x=954 y=408 fill=#00fef8 /><rect x=960 y=408 fill=#00fef8 /><rect x=966 y=408 fill=#00fff8 /><rect x=972 y=408 fill=#00fff8 /><rect x=978 y=408 fill=#00fff8 /><rect x=984 y=408 fill=#14fff8 /><rect x=990 y=408 fill=#2afff8 /><rect x=996 y=408 fill=#42fff8 /><rect x=1002 y=408 fill=#5bfff8 /><rect x=1008 y=408 fill=#75fff8 /><rect x=1014 y=408 fill=#91fff8 /><rect x=1020 y=408 fill=#aefff7 /><rect x=1026 y=408 fill=#ccfff7 /><rect x=1032 y=408 fill=#ecfff7 /><rect x=1038 y=408 fill=#fff0e9 /><rect x=1044 y=408 fill=#ffd4cd /><rect x=1050 y=408 fill=#ffbcb6 /><rect x=1056 y=408 fill=#ffa9a3 /><rect x=1062 y=408 fill=#ff9792 /><rect x=1068 y=408 fill=#ff8984 /><rect x=1074 y=408 fill=#ff7c77 /><rect x=1080 y=408 fill=#ff706c /><rect x=1086 y=408 fill=#ff6662 /><rect x=1092 y=408 fill=#ff5d5a /><rect x=1098 y=408 fill=#ff5552 /><rect x=1104 y=408 fill=#ff4e4a /><rect x=1110 y=408 fill=#ff4744 /><rect x=1116 y=408 fill=#ff413e /><rect x=1122 y=408 fill=#ff3b39 /><rect x=1128 y=408 fill=#ff3634 /><rect x=1134 y=408 fill=#ff312f /><rect x=1140 y=408 fill=#ff2d2b /><rect x=1146 y=408 fill=#ff2927 /><rect x=1152 y=408 fill=#ff2523 /><rect x=1158 y=408 fill=#fe221f /><rect x=1164 y=408 fill=#fb1e1c /><rect x=1170 y=408 fill=#f61a18 /><rect x=1176 y=408 fill=#f01715 /><rect x=1182 y=408 fill=#e81412 /><rect x=1188 y=408 fill=#df110f /><rect x=1194 y=408 fill=#d60e0c /><rect x=1200 y=408 fill=#cc0b0a /><rect x=1206 y=408 fill=#c20908 /><rect x=1212 y=408 fill=#b80706 /><rect x=1218 y=408 fill=#af0504 /><rect x=1224 y=408 fill=#a60403 /><rect x=1230 y=408 fill=#9f0302 /><rect x=1236 y=408 fill=#990201 /><rect x=1242 y=408 fill=#950100 /><rect x=1248 y=408 fill=#920000 /><rect x=1254 y=408 fill=#910000 /><rect x=1260 y=408 fill=#8f0000 /><rect x=1266 y=408 fill=#8e0000 /><rect x=1272 y=408 fill=#8c0000 />
<rect x=858 y=414 fill=#00f4fa /><rect x=864 y=414 fill=#00f4fa /><rect x=870 y=414 fill=#00f4fb /><rect x=876 y=414 fill=#00f4fb /><rect x=882 y=414 fill=#00f4fb /><rect x=888 y=414 fill=#00f4fc /><rect x=894 y=414 fill=#00f5fc /><rect x=900 y=414 fill=#00f5fc /><rect x=906 y=414 fill=#00f5fc /><rect x=912 y=414 fill=#00f5fd /><rect x=918 y=414 fill=#00f5fd /><rect x=924 y=414 fill=#00f5fd /><rect x=930 y=414 fill=#00f5fd /><rect x=936 y=414 fill=#00f5fe /><rect x=942 y=414 fill=#00f5fe /><rect x=948 y=414 fill=#00f5fe /><rect x=954 y=414 fill=#00f5fe /><rect x=960 y=414 fill=#00f5fe /><rect x=966 y=414 fill=#00f5ff /><rect x=972 y=414 fill=#00f5ff /><rect x=978 y=414 fill=#04f5ff /><rect x=984 y=414 fill=#1af4ff /><rect x=990 y=414 fill=#30f4ff /><rect x=996 y=414 fill=#48f4ff /><rect x=1002 y=414 fill=#61f3ff /><rect x=1008 y=414 fill=#7bf3ff /><rect x=1014 y=414 fill=#97f3ff /><rect x=1020 y=414 fill=#b4f2ff /><rect x=1026 y=414 fill=#d2f2ff /><rect x=1032 y=414 fill=#f3f1ff /><rect x=1038 y=414 fill=#ffdeeb /><rect x=1044 y=414 fill=#ffc4d0 /><rect x=1050 y=414 fill=#ffaeb9 /><rect x=1056 y=414 fill=#ff9ca6 /><rect x=1062 y=414 fill=#ff8c95 /><rect x=1068 y=414 fill=#ff7e87 /><rect x=1074 y=414 fill=#ff727b /><rect x=1080 y=414 fill=#ff676f /><rect x=1086 y=414 fill=#ff5e66 /><rect x=1092 y=414 fill=#ff565d /><rect x=1098 y=414 fill=#ff4e55 /><rect x=1104 y=414 fill=#ff474d /><rect x=1110 y=414 fill=#ff4147 /><rect x=1116 y=414 fill=#ff3b41 /><rect x=1122 y=414 fill=#ff363b /><rect x=1128 y=414 fill=#ff3136 /><rect x=1134 y=414 fill=#ff2c32 /><rect x=1140 y=414 fill=#ff282d /><rect x=1146 y=414 fill=#ff2429 /><rect x=1152 y=414 fill=#ff2126 /><rect x=1158 y=414 fill=#fe1d22 /><rect x=1164 y=414 fill=#fb1a1e /><rect x=1170 y=414 fill=#f6161b /><rect x=1176 y=414 fill=#f01317 /><rect x=1182 y=414 fill=#e81014 /><rect x=1188 y=414 fill=#df0d11 /><rect x=1194 y=414 fill=#d60b0e /><rect x=1200 y=414 fill=#cc090c /><rect x=1206 y=414 fill=#c2070a /><rect x=1212 y=414 fill=#b80508 /><rect x=1218 y=414 fill=#af0306 /><rect x=1224 y=414 fill=#a60204 /><rect x=1230 y=414 fill=#9f0103 /><rect x=1236 y=414 fill=#990002 /><rect x=1242 y=414 fill=#950001 /><rect x=1248 y=414 fill=#920000 /><rect x=1254 y=414 fill=#910000 /><rect x=1260 y=414 fill=#8f0000 /><rect x=1266 y=414 fill=#8d0000 /><rect x=1272 y=414 fill=#8c0000 /><rect x=1278 y=414 fill=#8a0000 />
<rect x=858 y=420 fill=#00e8fa /><rect x=864 y=420 fill=#00e8fa /><rect x=870 y=420 fill=#00e8fb /><rect x=876 y=420 fill=#00e8fb /><rect x=882 y=420 fill=#00e8fb /><rect x=888 y=420 fill=#00e8fc /><rect x=894 y=420 fill=#00e8fc /><rect x=900 y=420 fill=#00e8fc /><rect x=906 y=420 fill=#00e8fc /><rect x=912 y=420 fill=#00e8fd /><rect x=918 y=420 fill=#00e7fd /><rect x=924 y=420 fill=#00e7fd /><rect x=930 y=420 fill=#00e7fd /><rect x=936 y=420 fill=#00e7fe /><rect x=942 y=420 fill=#00e6fe /><rect x=948 y=420 fill=#00e6fe /><rect x=954 y=420 fill=#00e6fe /><rect x=960 y=420 fill=#00e5fe /><rect x=966 y=420 fill=#00e5ff /><rect x=972 y=420 fill=#00e5ff /><rect x=978 y=420 fill=#09e4ff /><rect x=984 y=420 fill=#1fe3ff /><rect x=990 y=420 fill=#35e3ff /><rect x=996 y=420 fill=#4ce2ff /><rect x=1002 y=420 fill=#64e1ff /><rect x=1008 y=420 fill=#7ee1ff /><rect x=1014 y=420 fill=#99e0ff /><rect x=1020 y=420 fill=#b5dfff /><rect x=1026 y=420 fill=#d2deff /><rect x=1032 y=420 fill=#f2ddff /><rect x=1038 y=420 fill=#ffcced /><rect x=1044 y=420 fill=#ffb5d2 /><rect x=1050 y=420 fill=#ffa1bc /><rect x=1056 y=420 fill=#ff8fa9 /><rect x=1062 y=420 fill=#ff8198 /><rect x=1068 y=420 fill=#ff748a /><rect x=1074 y=420 fill=#ff697e /><rect x=1080 y=420 fill=#ff5f73 /><rect x=1086 y=420 fill=#ff5669 /><rect x=1092 y=420 fill=#ff4e60 /><rect x=1098 y=420 fill=#ff4758 /><rect x=1104 y=420 fill=#ff4050 /><rect x=1110 y=420 fill=#ff3a4a /><rect x=1116 y=420 fill=#ff3544 /><rect x=1122 y=420 fill=#ff303e /><rect x=1128 y=420 fill=#ff2b39 /><rect x=1134 y=420 fill=#ff2734 /><rect x=1140 y=420 fill=#ff2330 /><rect x=1146 y=420 fill=#ff202c /><rect x=1152 y=420 fill=#ff1c28 /><rect x=1158 y=420 fill=#fe1924 /><rect x=1164 y=420 fill=#fb1621 /><rect x=1170 y=420 fill=#f6131d /><rect x=1176 y=420 fill=#f0101a /><rect x=1182 y=420 fill=#e80d16 /><rect x=1188 y=420 fill=#df0a13 /><rect x=1194 y=420 fill=#d60810 /><rect x=1200 y=420 fill=#cc060e /><rect x=1206 y=420 fill=#c2040b /><rect x=1212 y=420 fill=#b80309 /><rect x=1218 y=420 fill=#af0107 /><rect x=1224 y=420 fill=#a60006 /><rect x=1230 y=420 fill=#9e0004 /><rect x=1236 y=420 fill=#980003 /><rect x=1242 y=420 fill=#930002 /><rect x=1248 y=420 fill=#910001 /><rect x=1254 y=420 fill=#900000 /><rect x=1260 y=420 fill=#8e0000 /><rect x=1266 y=420 fill=#8d0000 /><rect x=1272 y=420 fill=#8c0000 /><rect x=1278 y=420 fill=#8a0000 /><rect x=1284 y=420 fill=#880000 />
<rect x=858 y=426 fill=#00ddfa /><rect x=864 y=426 fill=#00ddfa /><rect x=870 y=426 fill=#00ddfa /><rect x=876 y=426 fill=#00ddfb /><rect x=882 y=426 fill=#00dcfb /><rect x=888 y=426 fill=#00dcfb /><rect x=894 y=426 fill=#00dcfc /><rect x=900 y=426 fill=#00dcfc /><rect x=906 y=426 fill=#00dbfc /><rect x=912 y=426 fill=#00dbfd /><rect x=918 y=426 fill=#00dafd /><rect x=924 y=426 fill=#00dafd /><rect x=930 y=426 fill=#00dafd /><rect x=936 y=426 fill=#00d9fe /><rect x=942 y=426 fill=#00d9fe /><rect x=948 y=426 fill=#00d8fe /><rect x=954 y=426 fill=#00d7fe /><rect x=960 y=426 fill=#00d7fe /><rect x=966 y=426 fill=#00d6ff /><rect x=972 y=426 fill=#00d5ff /><rect x=978 y=426 fill=#0fd5ff /><rect x=984 y=426 fill=#24d4ff /><rect x=990 y=426 fill=#39d3ff /><rect x=996 y=426 fill=#50d1ff /><rect x=1002 y=426 fill=#68d0ff /><rect x=1008 y=426 fill=#80cfff /><rect x=1014 y=426 fill=#9aceff /><rect x=1020 y=426 fill=#b6cdff /><rect x=1026 y=426 fill=#d2cbff /><rect x=1032 y=426 fill=#f1caff /><rect x=1038 y=426 fill=#ffbcef /><rect x=1044 y=426 fill=#ffa6d5 /><rect x=1050 y=426 fill=#ff93be /><rect x=1056 y=426 fill=#ff84ac /><rect x=1062 y=426 fill=#ff769b /><rect x=1068 y=426 fill=#ff6a8d /><rect x=1074 y=426 fill=#ff6081 /><rect x=1080 y=426 fill=#ff5676 /><rect x=1086 y=426 fill=#ff4e6c /><rect x=1092 y=426 fill=#ff4763 /><rect x=1098 y=426 fill=#ff405b /><rect x=1104 y=426 fill=#ff3a53 /><rect x=1110 y=426 fill=#ff344d /><rect x=1116 y=426 fill=#ff2f47 /><rect x=1122 y=426 fill=#ff2a41 /><rect x=1128 y=426 fill=#ff263c /><rect x=1134 y=426 fill=#ff2237 /><rect x=1140 y=426 fill=#ff1e33 /><rect x=1146 y=426 fill=#ff1b2e /><rect x=1152 y=426 fill=#ff182b /><rect x=1158 y=426 fill=#fe1527 /><rect x=1164 y=426 fill=#fb1223 /><rect x=1170 y=426 fill=#f60f1f /><rect x=1176 y=426 fill=#f00c1c /><rect x=1182 y=426 fill=#e80918 /><rect x=1188 y=426 fill=#df0715 /><rect x=1194 y=426 fill=#d60512 /><rect x=1200 y=426 fill=#cc030f /><rect x=1206 y=426 fill=#c2020d /><rect x=1212 y=426 fill=#b8000b /><rect x=1218 y=426 fill=#ae0009 /><rect x=1224 y=426 fill=#a50007 /><rect x=1230 y=426 fill=#9d0005 /><rect x=1236 y=426 fill=#970004 /><rect x=1242 y=426 fill=#920003 /><rect x=1248 y=426 fill=#900002 /><rect x=1254 y=426 fill=#8f0001 /><rect x=1260 y=426 fill=#8d0000 /><rect x=1266 y=426 fill=#8c0000 /><rect x=1272 y=426 fill=#8b0000 /><rect x=1278 y=426 fill=#890000 /><rect x=1284 y=426 fill=#880000 /><rect x=1290 y=426 fill=#860000 />
<rect x=858 y=432 fill=#00d2f9 /><rect x=864 y=432 fill=#00d2fa /><rect x=870 y=432 fill=#00d2fa /><rect x=876 y=432 fill=#00d1fa /><rect x=882 y=432 fill=#00d1fb /><rect x=888 y=432 fill=#00d1fb /><rect x=894 y=432 fill=#00d0fc /><rect x=900 y=432 fill=#00d0fc /><rect x=906 y=432 fill=#00cffc /><rect x=912 y=432 fill=#00cffc /><rect x=918 y=432 fill=#00cefd /><rect x=924 y=432 fill=#00cdfd /><rect x=930 y=432 fill=#00cdfd /><rect x=936 y=432 fill=#00ccfe /><rect x=942 y=432 fill=#00cbfe /><rect x=948 y=432 fill=#00cbfe /><rect x=954 y=432 fill=#00cafe /><rect x=960 y=432 fill=#00c9ff /><rect x=966 y=432 fill=#00c8ff /><rect x=972 y=432 fill=#00c7ff /><rect x=978 y=432 fill=#14c6ff /><rect x=984 y=432 fill=#28c4ff /><rect x=990 y=432 fill=#3dc3ff /><rect x=996 y=432 fill=#53c2ff /><rect x=1002 y=432 fill=#6bc0ff /><rect x=1008 y=432 fill=#83bfff /><rect x=1014 y=432 fill=#9cbdff /><rect x=1020 y=432 fill=#b7bcff /><rect x=1026 y=432 fill=#d2baff /><rect x=1032 y=432 fill=#f0b8ff /><rect x=1038 y=432 fill=#ffacf0 /><rect x=1044 y=432 fill=#ff98d7 /><rect x=1050 y=432 fill=#ff87c1 /><rect x=1056 y=432 fill=#ff78ae /><rect x=1062 y=432 fill=#ff6c9e /><rect x=1068 y=432 fill=#ff6190 /><rect x=1074 y=432 fill=#ff5784 /><rect x=1080 y=432 fill=#ff4e78 /><rect x=1086 y=432 fill=#ff476e /><rect x=1092 y=432 fill=#ff4066 /><rect x=1098 y=432 fill=#ff395d /><rect x=1104 y=432 fill=#ff3456 /><rect x=1110 y=432 fill=#ff2e4f /><rect x=1116 y=432 fill=#ff2a49 /><rect x=1122 y=432 fill=#ff2544 /><rect x=1128 y=432 fill=#ff213e /><rect x=1134 y=432 fill=#ff1d3a /><rect x=1140 y=432 fill=#ff1a35 /><rect x=1146 y=432 fill=#ff1631 /><rect x=1152 y=432 fill=#ff132d /><rect x=1158 y=432 fill=#fe1129 /><rect x=1164 y=432 fill=#fb0e25 /><rect x=1170 y=432 fill=#f60b22 /><rect x=1176 y=432 fill=#f0091e /><rect x=1182 y=432 fill=#e8061a /><rect x=1188 y=432 fill=#df0417 /><rect x=1194 y=432 fill=#d60214 /><rect x=1200 y=432 fill=#cc0111 /><rect x=1206 y=432 fill=#c1000e /><rect x=1212 y=432 fill=#b7000c /><rect x=1218 y=432 fill=#ad000a /><rect x=1224 y=432 fill=#a40008 /><rect x=1230 y=432 fill=#9c0007 /><rect x=1236 y=432 fill=#960005 /><rect x=1242 y=432 fill=#910004 /><rect x=1248 y=432 fill=#8e0003 /><rect x=1254 y=432 fill=#8d0002 /><rect x=1260 y=432 fill=#8c0001 /><rect x=1266 y=432 fill=#8b0001 /><rect x=1272 y=432 fill=#8a0000 /><rect x=1278 y=432 fill=#890000 /><rect x=1284 y=432 fill=#870000 /><rect x=1290 y=432 fill=#860000 /><rect x=1296 y=432 fill=#840000 />
<rect x=864 y=438 fill=#00c7f9 /><rect x=870 y=438 fill=#00c7fa /><rect x=876 y=438 fill=#00c6fa /><rect x=882 y=438 fill=#00c6fb /><rect x=888 y=438 fill=#00c5fb /><rect x=894 y=438 fill=#00c5fb /><rect x=900 y=438 fill=#00c4fc /><rect x=906 y=438 fill=#00c4fc /><rect x=912 y=438 fill=#00c3fc /><rect x=918 y=438 fill=#00c2fd /><rect x=924 y=438 fill=#00c1fd /><rect x=930 y=438 fill=#00c1fd /><rect x=936 y=438 fill=#00c0fe /><rect x=942 y=438 fill=#00bffe /><rect x=948 y=438 fill=#00befe /><rect x=954 y=438 fill=#00bdfe /><rect x=960 y=438 fill=#00bcff /><rect x=966 y=438 fill=#00baff /><rect x=972 y=438 fill=#05b9ff /><rect x=978 y=438 fill=#18b8ff /><rect x=984 y=438 fill=#2cb6ff /><rect x=990 y=438 fill=#41b5ff /><rect x=996 y=438 fill=#57b3ff /><rect x=1002 y=438 fill=#6db1ff /><rect x=1008 y=438 fill=#85afff /><rect x=1014 y=438 fill=#9eaeff /><rect x=1020 y=438 fill=#b7acff /><rect x=1026 y=438 fill=#d2aaff /><rect x=1032 y=438 fill=#efa7ff /><rect x=1038 y=438 fill=#ff9df2 /><rect x=1044 y=438 fill=#ff8ad9 /><rect x=1050 y=438 fill=#ff7bc3 /><rect x=1056 y=438 fill=#ff6db1 /><rect x=1062 y=438 fill=#ff62a1 /><rect x=1068 y=438 fill=#ff5893 /><rect x=1074 y=438 fill=#ff4e86 /><rect x=1080 y=438 fill=#ff467b /><rect x=1086 y=438 fill=#ff3f71 /><rect x=1092 y=438 fill=#ff3968 /><rect x=1098 y=438 fill=#ff3360 /><rect x=1104 y=438 fill=#ff2d59 /><rect x=1110 y=438 fill=#ff2852 /><rect x=1116 y=438 fill=#ff244c /><rect x=1122 y=438 fill=#ff2046 /><rect x=1128 y=438 fill=#ff1c41 /><rect x=1134 y=438 fill=#ff183c /><rect x=1140 y=438 fill=#ff1538 /><rect x=1146 y=438 fill=#ff1233 /><rect x=1152 y=438 fill=#ff0f2f /><rect x=1158 y=438 fill=#fe0c2c /><rect x=1164 y=438 fill=#fb0a28 /><rect x=1170 y=438 fill=#f60724 /><rect x=1176 y=438 fill=#f00520 /><rect x=1182 y=438 fill=#e8031c /><rect x=1188 y=438 fill=#df0119 /><rect x=1194 y=438 fill=#d50015 /><rect x=1200 y=438 fill=#cb0012 /><rect x=1206 y=438 fill=#c00010 /><rect x=1212 y=438 fill=#b6000d /><rect x=1218 y=438 fill=#ac000b /><rect x=1224 y=438 fill=#a30009 /><rect x=1230 y=438 fill=#9b0008 /><rect x=1236 y=438 fill=#950006 /><rect x=1242 y=438 fill=#900005 /><rect x=1248 y=438 fill=#8d0004 /><rect x=1254 y=438 fill=#8c0003 /><rect x=1260 y=438 fill=#8b0002 /><rect x=1266 y=438 fill=#8a0001 /><rect x=1272 y=438 fill=#890001 /><rect x=1278 y=438 fill=#880000 /><rect x=1284 y=438 fill=#860000 /><rect x=1290 y=438 fill=#850000 /><rect x=1296 y=438 fill=#840000 /><rect x=1302 y=438 fill=#820000 />
<rect x=864 y=444 fill=#00bdf9 /><rect x=870 y=444 fill=#00bdf9 /><rect x=876 y=444 fill=#00bcfa /><rect x=882 y=444 fill=#00bbfa /><rect x=888 y=444 fill=#00bbfb /><rect x=894 y=444 fill=#00bafb /><rect x=900 y=444 fill=#00b9fc /><rect x=906 y=444 fill=#00b8fc /><rect x=912 y=444 fill=#00b8fc /><rect x=918 y=444 fill=#00b7fd /><rect x=924 y=444 fill=#00b6fd /><rect x=930 y=444 fill=#00b5fd /><rect x=936 y=444 fill=#00b4fe /><rect x=942 y=444 fill=#00b3fe /><rect x=948 y=444 fill=#00b1fe /><rect x=954 y=444 fill=#00b0fe /><rect x=960 y=444 fill=#00afff /><rect x=966 y=444 fill=#00adff /><rect x=972 y=444 fill=#0aacff /><rect x=978 y=444 fill=#1daaff /><rect x=984 y=444 fill=#30a9ff /><rect x=990 y=444 fill=#45a7ff /><rect x=996 y=444 fill=#5aa5ff /><rect x=1002 y=444 fill=#70a3ff /><rect x=1008 y=444 fill=#87a1ff /><rect x=1014 y=444 fill=#9f9fff /><rect x=1020 y=444 fill=#b89cff /><rect x=1026 y=444 fill=#d29aff /><rect x=1032 y=444 fill=#ee98ff /><rect x=1038 y=444 fill=#ff8ff4 /><rect x=1044 y=444 fill=#ff7edb /><rect x=1050 y=444 fill=#ff6fc6 /><rect x=1056 y=444 fill=#ff63b3 /><rect x=1062 y=444 fill=#ff58a3 /><rect x=1068 y=444 fill=#ff4f95 /><rect x=1074 y=444 fill=#ff4689 /><rect x=1080 y=444 fill=#ff3f7e /><rect x=1086 y=444 fill=#ff3874 /><rect x=1092 y=444 fill=#ff326b /><rect x=1098 y=444 fill=#ff2c63 /><rect x=1104 y=444 fill=#ff275c /><rect x=1110 y=444 fill=#ff2355 /><rect x=1116 y=444 fill=#ff1f4f /><rect x=1122 y=444 fill=#ff1b49 /><rect x=1128 y=444 fill=#ff1743 /><rect x=1134 y=444 fill=#ff143f /><rect x=1140 y=444 fill=#ff113a /><rect x=1146 y=444 fill=#ff0e36 /><rect x=1152 y=444 fill=#ff0b32 /><rect x=1158 y=444 fill=#fe082e /><rect x=1164 y=444 fill=#fb062a /><rect x=1170 y=444 fill=#f60426 /><rect x=1176 y=444 fill=#f00222 /><rect x=1182 y=444 fill=#e8001e /><rect x=1188 y=444 fill=#df001a /><rect x=1194 y=444 fill=#d50017 /><rect x=1200 y=444 fill=#ca0014 /><rect x=1206 y=444 fill=#bf0011 /><rect x=1212 y=444 fill=#b5000f /><rect x=1218 y=444 fill=#ab000c /><rect x=1224 y=444 fill=#a2000a /><rect x=1230 y=444 fill=#9a0009 /><rect x=1236 y=444 fill=#940007 /><rect x=1242 y=444 fill=#8f0006 /><rect x=1248 y=444 fill=#8c0005 /><rect x=1254 y=444 fill=#8b0004 /><rect x=1260 y=444 fill=#8a0003 /><rect x=1266 y=444 fill=#890002 /><rect x=1272 y=444 fill=#880002 /><rect x=1278 y=444 fill=#870001 /><rect x=1284 y=444 fill=#850000 /><rect x=1290 y=444 fill=#840000 /><rect x=1296 y=444 fill=#830000 /><rect x=1302 y=444 fill=#810000 />
<rect x=864 y=450 fill=#00b3f8 /><rect x=870 y=450 fill=#00b2f9 /><rect x=876 y=450 fill=#00b2f9 /><rect x=882 y=450 fill=#00b1fa /><rect x=888 y=450 fill=#00b0fa /><rect x=894 y=450 fill=#00b0fb /><rect x=900 y=450 fill=#00affb /><rect x=906 y=450 fill=#00aefc /><rect x=912 y=450 fill=#00adfc /><rect x=918 y=450 fill=#00acfc /><rect x=924 y=450 fill=#00abfd /><rect x=930 y=450 fill=#00a9fd /><rect x=936 y=450 fill=#00a8fe /><rect x=942 y=450 fill=#00a7fe /><rect x=948 y=450 fill=#00a6fe /><rect x=954 y=450 fill=#00a4fe /><rect x=960 y=450 fill=#00a3ff /><rect x=966 y=450 fill=#00a1ff /><rect x=972 y=450 fill=#0f9fff /><rect x=978 y=450 fill=#219dff /><rect x=984 y=450 fill=#349cff /><rect x=990 y=450 fill=#489aff /><rect x=996 y=450 fill=#5d97ff /><rect x=1002 y=450 fill=#7295ff /><rect x=1008 y=450 fill=#8993ff /><rect x=1014 y=450 fill=#a091ff /><rect x=1020 y=450 fill=#b98eff /><rect x=1026 y=450 fill=#d28cff /><rect x=1032 y=450 fill=#ed89ff /><rect x=1038 y=450 fill=#ff81f5 /><rect x=1044 y=450 fill=#ff71dd /><rect x=1050 y=450 fill=#ff64c8 /><rect x=1056 y=450 fill=#ff59b6 /><rect x=1062 y=450 fill=#ff4fa6 /><rect x=1068 y=450 fill=#ff4698 /><rect x=1074 y=450 fill=#ff3e8c /><rect x=1080 y=450 fill=#ff3781 /><rect x=1086 y=450 fill=#ff3177 /><rect x=1092 y=450 fill=#ff2b6e /><rect x=1098 y=450 fill=#ff2666 /><rect x=1104 y=450 fill=#ff225e /><rect x=1110 y=450 fill=#ff1d57 /><rect x=1116 y=450 fill=#ff1951 /><rect x=1122 y=450 fill=#ff164b /><rect x=1128 y=450 fill=#ff1246 /><rect x=1134 y=450 fill=#ff0f41 /><rect x=1140 y=450 fill=#ff0c3c /><rect x=1146 y=450 fill=#ff0a38 /><rect x=1152 y=450 fill=#ff0734 /><rect x=1158 y=450 fill=#fe0530 /><rect x=1164 y=450 fill=#fb022c /><rect x=1170 y=450 fill=#f60028 /><rect x=1176 y=450 fill=#f00024 /><rect x=1182 y=450 fill=#e70020 /><rect x=1188 y=450 fill=#de001c /><rect x=1194 y=450 fill=#d40019 /><rect x=1200 y=450 fill=#c90015 /><rect x=1206 y=450 fill=#bf0013 /><rect x=1212 y=450 fill=#b40010 /><rect x=1218 y=450 fill=#aa000e /><rect x=1224 y=450 fill=#a1000c /><rect x=1230 y=450 fill=#99000a /><rect x=1236 y=450 fill=#930008 /><rect x=1242 y=450 fill=#8e0007 /><rect x=1248 y=450 fill=#8c0006 /><rect x=1254 y=450 fill=#8a0005 /><rect x=1260 y=450 fill=#890004 /><rect x=1266 y=450 fill=#870003 /><rect x=1272 y=450 fill=#870002 /><rect x=1278 y=450 fill=#860002 /><rect x=1284 y=450 fill=#840001 /><rect x=1290 y=450 fill=#830000 /><rect x=1296 y=450 fill=#820000 />
<rect x=870 y=456 fill=#00a9f8 /><rect x=876 y=456 fill=#00a8f9 /><rect x=882 y=456 fill=#00a7f9 /><rect x=888 y=456 fill=#00a6fa /><rect x=894 y=456 fill=#00a5fa /><rect x=900 y=456 fill=#00a4fb /><rect x=906 y=456 fill=#00a3fb /><rect x=912 y=456 fill=#00a2fc /><rect x=918 y=456 fill=#00a1fc /><rect x=924 y=456 fill=#00a0fd /><rect x=930 y=456 fill=#009ffd /><rect x=936 y=456 fill=#009dfd /><rect x=942 y=456 fill=#009cfe /><rect x=948 y=456 fill=#009afe /><rect x=954 y=456 fill=#0099fe /><rect x=960 y=456 fill=#0097ff /><rect x=966 y=456 fill=#0295ff /><rect x=972 y=456 fill=#1393ff /><rect x=978 y=456 fill=#2591ff /><rect x=984 y=456 fill=#388fff /><rect x=990 y=456 fill=#4b8dff /><rect x=996 y=456 fill=#608bff /><rect x=1002 y=456 fill=#7588ff /><rect x=1008 y=456 fill=#8b86ff /><rect x=1014 y=456 fill=#a283ff /><rect x=1020 y=456 fill=#ba81ff /><rect x=1026 y=456 fill=#d27eff /><rect x=1032 y=456 fill=#ec7bff /><rect x=1038 y=456 fill=#ff74f7 /><rect x=1044 y=456 fill=#ff66df /><rect x=1050 y=456 fill=#ff5aca /><rect x=1056 y=456 fill=#ff4fb8 /><rect x=1062 y=456 fill=#ff46a8 /><rect x=1068 y=456 fill=#ff3e9b /><rect x=1074 y=456 fill=#ff378e /><rect x=1080 y=456 fill=#ff3083 /><rect x=1086 y=456 fill=#ff2a79 /><rect x=1092 y=456 fill=#ff2570 /><rect x=1098 y=456 fill=#ff2068 /><rect x=1104 y=456 fill=#ff1c61 /><rect x=1110 y=456 fill=#ff185a /><rect x=1116 y=456 fill=#ff1454 /><rect x=1122 y=456 fill=#ff114e /><rect x=1128 y=456 fill=#ff0e48 /><rect x=1134 y=456 fill=#ff0b43 /><rect x=1140 y=456 fill=#ff083f /><rect x=1146 y=456 fill=#ff053a /><rect x=1152 y=456 fill=#ff0336 /><rect x=1158 y=456 fill=#fe0132 /><rect x=1164 y=456 fill=#fb002e /><rect x=1170 y=456 fill=#f6002a /><rect x=1176 y=456 fill=#ef0026 /><rect x=1182 y=456 fill=#e70022 /><rect x=1188 y=456 fill=#dd001e /><rect x=1194 y=456 fill=#d3001a /><rect x=1200 y=456 fill=#c90017 /><rect x=1206 y=456 fill=#be0014 /><rect x=1212 y=456 fill=#b40011 /><rect x=1218 y=456 fill=#aa000f /><rect x=1224 y=456 fill=#a1000d /><rect x=1230 y=456 fill=#99000b /><rect x=1236 y=456 fill=#920009 /><rect x=1242 y=456 fill=#8e0008 /><rect x=1248 y=456 fill=#8b0007 /><rect x=1254 y=456 fill=#890006 /><rect x=1260 y=456 fill=#880005 /><rect x=1266 y=456 fill=#860004 /><rect x=1272 y=456 fill=#850003 /><rect x=1278 y=456 fill=#840003 /><rect x=1284 y=456 fill=#830002 />
<rect x=870 y=462 fill=#009ff7 /><rect x=876 y=462 fill=#009ef8 /><rect x=882 y=462 fill=#009ef9 /><rect x=888 y=462 fill=#009df9 /><rect x=894 y=462 fill=#009cfa /><rect x=900 y=462 fill=#009bfb /><rect x=906 y=462 fill=#0099fb /><rect x=912 y=462 fill=#0098fc /><rect x=918 y=462 fill=#0097fc /><rect x=924 y=462 fill=#0096fd /><rect x=930 y=462 fill=#0094fd /><rect x=936 y=462 fill=#0093fd /><rect x=942 y=462 fill=#0091fe /><rect x=948 y=462 fill=#0090fe /><rect x=954 y=462 fill=#008efe /><rect x=960 y=462 fill=#008cff /><rect x=966 y=462 fill=#068aff /><rect x=972 y=462 fill=#1788ff /><rect x=978 y=462 fill=#2986ff /><rect x=984 y=462 fill=#3c83ff /><rect x=990 y=462 fill=#4f81ff /><rect x=996 y=462 fill=#627fff /><rect x=1002 y=462 fill=#777cff /><rect x=1008 y=462 fill=#8d79ff /><rect x=1014 y=462 fill=#a377ff /><rect x=1020 y=462 fill=#ba74ff /><rect x=1026 y=462 fill=#d271ff /><rect x=1032 y=462 fill=#ec6dff /><rect x=1038 y=462 fill=#ff67f8 /><rect x=1044 y=462 fill=#ff5ae0 /><rect x=1050 y=462 fill=#ff4fcc /><rect x=1056 y=462 fill=#ff46ba /><rect x=1062 y=462 fill=#ff3dab /><rect x=1068 y=462 fill=#ff369d /><rect x=1074 y=462 fill=#ff2f91 /><rect x=1080 y=462 fill=#ff2986 /><rect x=1086 y=462 fill=#ff247c /><rect x=1092 y=462 fill=#ff1f73 /><rect x=1098 y=462 fill=#ff1a6b /><rect x=1104 y=462 fill=#ff1663 /><rect x=1110 y=462 fill=#ff135c /><rect x=1116 y=462 fill=#ff0f56 /><rect x=1122 y=462 fill=#ff0c50 /><rect x=1128 y=462 fill=#ff094b /><rect x=1134 y=462 fill=#ff0646 /><rect x=1140 y=462 fill=#ff0441 /><rect x=1146 y=462 fill=#ff013d /><rect x=1152 y=462 fill=#ff0038 /><rect x=1158 y=462 fill=#fe0034 /><rect x=1164 y=462 fill=#fb0030 /><rect x=1170 y=462 fill=#f5002c /><rect x=1176 y=462 fill=#ef0028 /><rect x=1182 y=462 fill=#e60023 /><rect x=1188 y=462 fill=#dd0020 /><rect x=1194 y=462 fill=#d3001c /><rect x=1200 y=462 fill=#c80018 /><rect x=1206 y=462 fill=#bd0015 /><rect x=1212 y=462 fill=#b30012 /><rect x=1218 y=462 fill=#a90010 /><rect x=1224 y=462 fill=#a0000e /><rect x=1230 y=462 fill=#98000c /><rect x=1236 y=462 fill=#92000a /><rect x=1242 y=462 fill=#8d0009 /><rect x=1248 y=462 fill=#8a0008 /><rect x=1254 y=462 fill=#890007 /><rect x=1260 y=462 fill=#870006 /><rect x=1266 y=462 fill=#850005 /><rect x=1272 y=462 fill=#840004 />
<rect x=870 y=468 fill=#0096f7 /><rect x=876 y=468 fill=#0095f7 /><rect x=882 y=468 fill=#0094f8 /><rect x=888 y=468 fill=#0093f9 /><rect x=894 y=468 fill=#0092fa /><rect x=900 y=468 fill=#0091fa /><rect x=906 y=468 fill=#0090fb /><rect x=912 y=468 fill=#008ffb /><rect x=918 y=468 fill=#008dfc /><rect x=924 y=468 fill=#008cfc /><rect x=930 y=468 fill=#008afd /><rect x=936 y=468 fill=#0089fd /><rect x=942 y=468 fill=#0087fe /><rect x=948 y=468 fill=#0085fe /><rect x=954 y=468 fill=#0083ff /><rect x=960 y=468 fill=#0081ff /><rect x=966 y=468 fill=#0b7fff /><rect x=972 y=468 fill=#1b7dff /><rect x=978 y=468 fill=#2d7bff /><rect x=984 y=468 fill=#3f78ff /><rect x=990 y=468 fill=#5276ff /><rect x=996 y=468 fill=#6573ff /><rect x=1002 y=468 fill=#7970ff /><rect x=1008 y=468 fill=#8e6dff /><rect x=1014 y=468 fill=#a46aff /><rect x=1020 y=468 fill=#bb67ff /><rect x=1026 y=468 fill=#d264ff /><rect x=1032 y=468 fill=#eb61ff /><rect x=1038 y=468 fill=#ff5bf9 /><rect x=1044 y=468 fill=#ff50e2 /><rect x=1050 y=468 fill=#ff45ce /><rect x=1056 y=468 fill=#ff3dbc /><rect x=1062 y=468 fill=#ff35ad /><rect x=1068 y=468 fill=#ff2e9f /><rect x=1074 y=468 fill=#ff2893 /><rect x=1080 y=468 fill=#ff2288 /><rect x=1086 y=468 fill=#ff1d7e /><rect x=1092 y=468 fill=#ff1975 /><rect x=1098 y=468 fill=#ff156d /><rect x=1104 y=468 fill=#ff1166 /><rect x=1110 y=468 fill=#ff0d5f /><rect x=1116 y=468 fill=#ff0a58 /><rect x=1122 y=468 fill=#ff0752 /><rect x=1128 y=468 fill=#ff044d /><rect x=1134 y=468 fill=#ff0248 /><rect x=1140 y=468 fill=#ff0043 /><rect x=1146 y=468 fill=#ff003f /><rect x=1152 y=468 fill=#ff003b /><rect x=1158 y=468 fill=#fe0036 /><rect x=1164 y=468 fill=#fa0032 /><rect x=1170 y=468 fill=#f5002e /><rect x=1176 y=468 fill=#ee0029 /><rect x=1182 y=468 fill=#e60025 /><rect x=1188 y=468 fill=#dc0021 /><rect x=1194 y=468 fill=#d2001d /><rect x=1200 y=468 fill=#c8001a /><rect x=1206 y=468 fill=#bd0017 /><rect x=1212 y=468 fill=#b20014 /><rect x=1218 y=468 fill=#a90011 /><rect x=1224 y=468 fill=#a0000f /><rect x=1230 y=468 fill=#98000d /><rect x=1236 y=468 fill=#91000b /><rect x=1242 y=468 fill=#8c000a /><rect x=1248 y=468 fill=#890009 /><rect x=1254 y=468 fill=#880008 /><rect x=1260 y=468 fill=#860007 />
<rect x=870 y=474 fill=#008df6 /><rect x=876 y=474 fill=#008cf7 /><rect x=882 y=474 fill=#008bf7 /><rect x=888 y=474 fill=#008af8 /><rect x=894 y=474 fill=#0089f9 /><rect x=900 y=474 fill=#0088fa /><rect x=906 y=474 fill=#0087fa /><rect x=912 y=474 fill=#0085fb /><rect x=918 y=474 fill=#0084fc /><rect x=924 y=474 fill=#0082fc /><rect x=930 y=474 fill=#0081fd /><rect x=936 y=474 fill=#007ffd /><rect x=942 y=474 fill=#007dfe /><rect x=948 y=474 fill=#007bfe /><rect x=954 y=474 fill=#0079ff /><rect x=960 y=474 fill=#0077ff /><rect x=966 y=474 fill=#0f75ff /><rect x=972 y=474 fill=#1f72ff /><rect x=978 y=474 fill=#3070ff /><rect x=984 y=474 fill=#426dff /><rect x=990 y=474 fill=#546bff /><rect x=996 y=474 fill=#6868ff /><rect x=1002 y=474 fill=#7b65ff /><rect x=1008 y=474 fill=#9062ff /><rect x=1014 y=474 fill=#a55fff /><rect x=1020 y=474 fill=#bb5cff /><rect x=1026 y=474 fill=#d258ff /><rect x=1032 y=474 fill=#ea55ff /><rect x=1038 y=474 fill=#ff50fb /><rect x=1044 y=474 fill=#ff45e4 /><rect x=1050 y=474 fill=#ff3cd0 /><rect x=1056 y=474 fill=#ff34bf /><rect x=1062 y=474 fill=#ff2daf /><rect x=1068 y=474 fill=#ff26a2 /><rect x=1074 y=474 fill=#ff2195 /><rect x=1080 y=474 fill=#ff1c8b /><rect x=1086 y=474 fill=#ff1781 /><rect x=1092 y=474 fill=#ff1378 /><rect x=1098 y=474 fill=#ff0f6f /><rect x=1104 y=474 fill=#ff0b68 /><rect x=1110 y=474 fill=#ff0861 /><rect x=1116 y=474 fill=#ff055b /><rect x=1122 y=474 fill=#ff0355 /><rect x=1128 y=474 fill=#ff004f /><rect x=1134 y=474 fill=#ff004a /><rect x=1140 y=474 fill=#ff0045 /><rect x=1146 y=474 fill=#fe0041 /><rect x=1152 y=474 fill=#fe003d /><rect x=1158 y=474 fill=#fd0038 /><rect x=1164 y=474 fill=#fa0034 /><rect x=1170 y=474 fill=#f50030 /><rect x=1176 y=474 fill=#ee002b /><rect x=1182 y=474 fill=#e50027 /><rect x=1188 y=474 fill=#dc0023 /><rect x=1194 y=474 fill=#d2001f /><rect x=1200 y=474 fill=#c7001b /><rect x=1206 y=474 fill=#bc0018 /><rect x=1212 y=474 fill=#b20015 /><rect x=1218 y=474 fill=#a80012 /><rect x=1224 y=474 fill=#9f0010 /><rect x=1230 y=474 fill=#97000e /><rect x=1236 y=474 fill=#91000c /><rect x=1242 y=474 fill=#8c000b /><rect x=1248 y=474 fill=#890009 />
<rect x=876 y=480 fill=#0084f6 /><rect x=882 y=480 fill=#0083f7 /><rect x=888 y=480 fill=#0082f8 /><rect x=894 y=480 fill=#0080f8 /><rect x=900 y=480 fill=#007ff9 /><rect x=906 y=480 fill=#007efa /><rect x=912 y=480 fill=#007cfb /><rect x=918 y=480 fill=#007bfb /><rect x=924 y=480 fill=#0079fc /><rect x=930 y=480 fill=#0077fd /><rect x=936 y=480 fill=#0076fd /><rect x=942 y=480 fill=#0074fe /><rect x=948 y=480 fill=#0072fe /><rect x=954 y=480 fill=#0070ff /><rect x=960 y=480 fill=#036dff /><rect x=966 y=480 fill=#136bff /><rect x=972 y=480 fill=#2368ff /><rect x=978 y=480 fill=#3466ff /><rect x=984 y=480 fill=#4563ff /><rect x=990 y=480 fill=#5760ff /><rect x=996 y=480 fill=#6a5dff /><rect x=1002 y=480 fill=#7d5aff /><rect x=1008 y=480 fill=#9157ff /><rect x=1014 y=480 fill=#a654ff /><rect x=1020 y=480 fill=#bc51ff /><rect x=1026 y=480 fill=#d24dff /><rect x=1032 y=480 fill=#ea4aff /><rect x=1038 y=480 fill=#ff45fc /><rect x=1044 y=480 fill=#ff3be5 /><rect x=1050 y=480 fill=#ff33d2 /><rect x=1056 y=480 fill=#ff2bc1 /><rect x=1062 y=480 fill=#ff25b1 /><rect x=1068 y=480 fill=#ff1fa4 /><rect x=1074 y=480 fill=#ff1a98 /><rect x=1080 y=480 fill=#ff158d /><rect x=1086 y=480 fill=#ff1183 /><rect x=1092 y=480 fill=#ff0d7a /><rect x=1098 y=480 fill=#ff0a72 /><rect x=1104 y=480 fill=#ff066a /><rect x=1110 y=480 fill=#ff0363 /><rect x=1116 y=480 fill=#ff015d /><rect x=1122 y=480 fill=#ff0057 /><rect x=1128 y=480 fill=#ff0051 /><rect x=1134 y=480 fill=#ff004c /><rect x=1140 y=480 fill=#fe0047 /><rect x=1146 y=480 fill=#fe0043 /><rect x=1152 y=480 fill=#fe003f /><rect x=1158 y=480 fill=#fd003a /><rect x=1164 y=480 fill=#fa0036 /><rect x=1170 y=480 fill=#f40032 /><rect x=1176 y=480 fill=#ed002d /><rect x=1182 y=480 fill=#e50029 /><rect x=1188 y=480 fill=#db0024 /><rect x=1194 y=480 fill=#d10020 /><rect x=1200 y=480 fill=#c7001d /><rect x=1206 y=480 fill=#bc0019 /><rect x=1212 y=480 fill=#b20016 /><rect x=1218 y=480 fill=#a80013 /><rect x=1224 y=480 fill=#9f0011 /><rect x=1230 y=480 fill=#97000f /><rect x=1236 y=480 fill=#90000d />
<rect x=876 y=486 fill=#007bf5 /><rect x=882 y=486 fill=#007af6 /><rect x=888 y=486 fill=#0079f7 /><rect x=894 y=486 fill=#0078f8 /><rect x=900 y=486 fill=#0076f9 /><rect x=906 y=486 fill=#0075fa /><rect x=912 y=486 fill=#0074fa /><rect x=918 y=486 fill=#0072fb /><rect x=924 y=486 fill=#0070fc /><rect x=930 y=486 fill=#006efc /><rect x=936 y=486 fill=#006cfd /><rect x=942 y=486 fill=#006bfe /><rect x=948 y=486 fill=#0068fe /><rect x=954 y=486 fill=#0066ff /><rect x=960 y=486 fill=#0764ff /><rect x=966 y=486 fill=#1761ff /><rect x=972 y=486 fill=#275fff /><rect x=978 y=486 fill=#375cff /><rect x=984 y=486 fill=#4859ff /><rect x=990 y=486 fill=#5a56ff /><rect x=996 y=486 fill=#6c53ff /><rect x=1002 y=486 fill=#7f50ff /><rect x=1008 y=486 fill=#934dff /><rect x=1014 y=486 fill=#a74aff /><rect x=1020 y=486 fill=#bc46ff /><rect x=1026 y=486 fill=#d243ff /><rect x=1032 y=486 fill=#e93fff /><rect x=1038 y=486 fill=#ff3afd /><rect x=1044 y=486 fill=#ff32e7 /><rect x=1050 y=486 fill=#ff2ad3 /><rect x=1056 y=486 fill=#ff23c2 /><rect x=1062 y=486 fill=#ff1db3 /><rect x=1068 y=486 fill=#ff18a6 /><rect x=1074 y=486 fill=#ff139a /><rect x=1080 y=486 fill=#ff0f8f /><rect x=1086 y=486 fill=#ff0b85 /><rect x=1092 y=486 fill=#ff077c /><rect x=1098 y=486 fill=#ff0474 /><rect x=1104 y=486 fill=#ff016d /><rect x=1110 y=486 fill=#ff0066 /><rect x=1116 y=486 fill=#ff005f /><rect x=1122 y=486 fill=#ff0059 /><rect x=1128 y=486 fill=#ff0054 /><rect x=1134 y=486 fill=#fe004e /><rect x=1140 y=486 fill=#fe0049 /><rect x=1146 y=486 fill=#fe0045 /><rect x=1152 y=486 fill=#fe0041 /><rect x=1158 y=486 fill=#fd003c /><rect x=1164 y=486 fill=#f90038 /><rect x=1170 y=486 fill=#f40033 /><rect x=1176 y=486 fill=#ed002f /><rect x=1182 y=486 fill=#e5002a /><rect x=1188 y=486 fill=#db0026 /><rect x=1194 y=486 fill=#d10022 /><rect x=1200 y=486 fill=#c6001e /><rect x=1206 y=486 fill=#bc001b /><rect x=1212 y=486 fill=#b10017 /><rect x=1218 y=486 fill=#a70015 /><rect x=1224 y=486 fill=#9e0012 />
<rect x=876 y=492 fill=#0073f4 /><rect x=882 y=492 fill=#0072f5 /><rect x=888 y=492 fill=#0071f6 /><rect x=894 y=492 fill=#0070f7 /><rect x=900 y=492 fill=#006ef8 /><rect x=906 y=492 fill=#006df9 /><rect x=912 y=492 fill=#006bfa /><rect x=918 y=492 fill=#0069fb /><rect x=924 y=492 fill=#0068fc /><rect x=930 y=492 fill=#0066fc /><rect x=936 y=492 fill=#0064fd /><rect x=942 y=492 fill=#0062fe /><rect x=948 y=492 fill=#0060fe /><rect x=954 y=492 fill=#005dff /><rect x=960 y=492 fill=#0b5bff /><rect x=966 y=492 fill=#1a58ff /><rect x=972 y=492 fill=#2a55ff /><rect x=978 y=492 fill=#3a53ff /><rect x=984 y=492 fill=#4b50ff /><rect x=990 y=492 fill=#5c4dff /><rect x=996 y=492 fill=#6e4aff /><rect x=1002 y=492 fill=#8146ff /><rect x=1008 y=492 fill=#9443ff /><rect x=1014 y=492 fill=#a840ff /><rect x=1020 y=492 fill=#bd3cff /><rect x=1026 y=492 fill=#d238ff /><rect x=1032 y=492 fill=#e934ff /><rect x=1038 y=492 fill=#ff30fe /><rect x=1044 y=492 fill=#ff28e8 /><rect x=1050 y=492 fill=#ff21d5 /><rect x=1056 y=492 fill=#ff1bc4 /><rect x=1062 y=492 fill=#ff16b5 /><rect x=1068 y=492 fill=#ff11a8 /><rect x=1074 y=492 fill=#ff0d9c /><rect x=1080 y=492 fill=#ff0991 /><rect x=1086 y=492 fill=#ff0587 /><rect x=1092 y=492 fill=#ff027f /><rect x=1098 y=492 fill=#ff0076 /><rect x=1104 y=492 fill=#ff006f /><rect x=1110 y=492 fill=#ff0068 /><rect x=1116 y=492 fill=#ff0061 /><rect x=1122 y=492 fill=#fe005b /><rect x=1128 y=492 fill=#fe0056 /><rect x=1134 y=492 fill=#fe0050 /><rect x=1140 y=492 fill=#fe004c /><rect x=1146 y=492 fill=#fe0047 /><rect x=1152 y=492 fill=#fd0043 /><rect x=1158 y=492 fill=#fc003e /><rect x=1164 y=492 fill=#f9003a /><rect x=1170 y=492 fill=#f40035 /><rect x=1176 y=492 fill=#ed0031 /><rect x=1182 y=492 fill=#e4002c /><rect x=1188 y=492 fill=#db0028 /><rect x=1194 y=492 fill=#d10023 /><rect x=1200 y=492 fill=#c6001f /><rect x=1206 y=492 fill=#bb001c /><rect x=1212 y=492 fill=#b10019 />
<rect x=882 y=498 fill=#006af4 /><rect x=888 y=498 fill=#0069f5 /><rect x=894 y=498 fill=#0068f6 /><rect x=900 y=498 fill=#0066f8 /><rect x=906 y=498 fill=#0065f9 /><rect x=912 y=498 fill=#0063fa /><rect x=918 y=498 fill=#0061fa /><rect x=924 y=498 fill=#005ffb /><rect x=930 y=498 fill=#005dfc /><rect x=936 y=498 fill=#005bfd /><rect x=942 y=498 fill=#0059fe /><rect x=948 y=498 fill=#0057fe /><rect x=954 y=498 fill=#0055ff /><rect x=960 y=498 fill=#0f52ff /><rect x=966 y=498 fill=#1e4fff /><rect x=972 y=498 fill=#2d4dff /><rect x=978 y=498 fill=#3d4aff /><rect x=984 y=498 fill=#4e47ff /><rect x=990 y=498 fill=#5f44ff /><rect x=996 y=498 fill=#7040ff /><rect x=1002 y=498 fill=#833dff /><rect x=1008 y=498 fill=#963aff /><rect x=1014 y=498 fill=#a936ff /><rect x=1020 y=498 fill=#bd32ff /><rect x=1026 y=498 fill=#d22fff /><rect x=1032 y=498 fill=#e82bff /><rect x=1038 y=498 fill=#ff27ff /><rect x=1044 y=498 fill=#ff1fea /><rect x=1050 y=498 fill=#ff19d7 /><rect x=1056 y=498 fill=#ff14c6 /><rect x=1062 y=498 fill=#ff0fb7 /><rect x=1068 y=498 fill=#ff0aaa /><rect x=1074 y=498 fill=#ff069e /><rect x=1080 y=498 fill=#ff0393 /><rect x=1086 y=498 fill=#ff008a /><rect x=1092 y=498 fill=#ff0081 /><rect x=1098 y=498 fill=#ff0078 /><rect x=1104 y=498 fill=#ff0071 /><rect x=1110 y=498 fill=#ff006a /><rect x=1116 y=498 fill=#fe0063 /><rect x=1122 y=498 fill=#fe005d /><rect x=1128 y=498 fill=#fe0058 /><rect x=1134 y=498 fill=#fe0052 /><rect x=1140 y=498 fill=#fe004d /><rect x=1146 y=498 fill=#fd0049 /><rect x=1152 y=498 fill=#fd0045 /><rect x=1158 y=498 fill=#fc0040 /><rect x=1164 y=498 fill=#f9003c /><rect x=1170 y=498 fill=#f40037 /><rect x=1176 y=498 fill=#ec0032 /><rect x=1182 y=498 fill=#e4002e /><rect x=1188 y=498 fill=#db0029 /><rect x=1194 y=498 fill=#d00025 /><rect x=1200 y=498 fill=#c60021 />
<rect x=882 y=504 fill=#0063f3 /><rect x=888 y=504 fill=#0061f4 /><rect x=894 y=504 fill=#0060f6 /><rect x=900 y=504 fill=#005ff7 /><rect x=906 y=504 fill=#005df8 /><rect x=912 y=504 fill=#005bf9 /><rect x=918 y=504 fill=#0059fa /><rect x=924 y=504 fill=#0057fb /><rect x=930 y=504 fill=#0055fc /><rect x=936 y=504 fill=#0053fd /><rect x=942 y=504 fill=#0051fe /><rect x=948 y=504 fill=#004ffe /><rect x=954 y=504 fill=#044cff /><rect x=960 y=504 fill=#124aff /><rect x=966 y=504 fill=#2147ff /><rect x=972 y=504 fill=#3044ff /><rect x=978 y=504 fill=#4041ff /><rect x=984 y=504 fill=#503eff /><rect x=990 y=504 fill=#613bff /><rect x=996 y=504 fill=#7237ff /><rect x=1002 y=504 fill=#8434ff /><rect x=1008 y=504 fill=#9731ff /><rect x=1014 y=504 fill=#aa2dff /><rect x=1020 y=504 fill=#be29ff /><rect x=1026 y=504 fill=#d225ff /><rect x=1032 y=504 fill=#e821ff /><rect x=1038 y=504 fill=#fe1dff /><rect x=1044 y=504 fill=#ff17eb /><rect x=1050 y=504 fill=#ff11d8 /><rect x=1056 y=504 fill=#ff0cc8 /><rect x=1062 y=504 fill=#ff08b9 /><rect x=1068 y=504 fill=#ff04ac /><rect x=1074 y=504 fill=#ff00a0 /><rect x=1080 y=504 fill=#ff0095 /><rect x=1086 y=504 fill=#ff008c /><rect x=1092 y=504 fill=#ff0083 /><rect x=1098 y=504 fill=#ff007a /><rect x=1104 y=504 fill=#fe0073 /><rect x=1110 y=504 fill=#fe006c /><rect x=1116 y=504 fill=#fe0065 /><rect x=1122 y=504 fill=#fe005f /><rect x=1128 y=504 fill=#fe005a /><rect x=1134 y=504 fill=#fe0054 /><rect x=1140 y=504 fill=#fe004f /><rect x=1146 y=504 fill=#fd004b /><rect x=1152 y=504 fill=#fd0046 /><rect x=1158 y=504 fill=#fc0042 /><rect x=1164 y=504 fill=#f9003e /><rect x=1170 y=504 fill=#f30039 /><rect x=1176 y=504 fill=#ec0034 /><rect x=1182 y=504 fill=#e4002f /><rect x=1188 y=504 fill=#da002b />
<rect x=882 y=510 fill=#005cf2 /><rect x=888 y=510 fill=#005af4 /><rect x=894 y=510 fill=#0059f5 /><rect x=900 y=510 fill=#0057f6 /><rect x=906 y=510 fill=#0055f8 /><rect x=912 y=510 fill=#0054f9 /><rect x=918 y=510 fill=#0052fa /><rect x=924 y=510 fill=#0050fb /><rect x=930 y=510 fill=#004efc /><rect x=936 y=510 fill=#004cfd /><rect x=942 y=510 fill=#0049fe /><rect x=948 y=510 fill=#0047ff /><rect x=954 y=510 fill=#0844ff /><rect x=960 y=510 fill=#1642ff /><rect x=966 y=510 fill=#243fff /><rect x=972 y=510 fill=#333cff /><rect x=978 y=510 fill=#4339ff /><rect x=984 y=510 fill=#5336ff /><rect x=990 y=510 fill=#6332ff /><rect x=996 y=510 fill=#742fff /><rect x=1002 y=510 fill=#862bff /><rect x=1008 y=510 fill=#9828ff /><rect x=1014 y=510 fill=#ab24ff /><rect x=1020 y=510 fill=#be20ff /><rect x=1026 y=510 fill=#d21cff /><rect x=1032 y=510 fill=#e718ff /><rect x=1038 y=510 fill=#fd14ff /><rect x=1044 y=510 fill=#ff0fec /><rect x=1050 y=510 fill=#ff0ada /><rect x=1056 y=510 fill=#ff05ca /><rect x=1062 y=510 fill=#ff01bb /><rect x=1068 y=510 fill=#ff00ae /><rect x=1074 y=510 fill=#ff00a2 /><rect x=1080 y=510 fill=#ff0097 /><rect x=1086 y=510 fill=#ff008e /><rect x=1092 y=510 fill=#fe0085 /><rect x=1098 y=510 fill=#fe007c /><rect x=1104 y=510 fill=#fe0075 /><rect x=1110 y=510 fill=#fe006e /><rect x=1116 y=510 fill=#fe0067 /><rect x=1122 y=510 fill=#fe0061 /><rect x=1128 y=510 fill=#fe005c /><rect x=1134 y=510 fill=#fe0056 /><rect x=1140 y=510 fill=#fd0051 /><rect x=1146 y=510 fill=#fd004d /><rect x=1152 y=510 fill=#fd0048 /><rect x=1158 y=510 fill=#fc0044 /><rect x=1164 y=510 fill=#f8003f /><rect x=1170 y=510 fill=#f3003a /><rect x=1176 y=510 fill=#ec0036 />
<rect x=888 y=516 fill=#0053f3 /><rect x=894 y=516 fill=#0052f4 /><rect x=900 y=516 fill=#0050f6 /><rect x=906 y=516 fill=#004ef7 /><rect x=912 y=516 fill=#004cf8 /><rect x=918 y=516 fill=#004afa /><rect x=924 y=516 fill=#0048fb /><rect x=930 y=516 fill=#0046fc /><rect x=936 y=516 fill=#0044fd /><rect x=942 y=516 fill=#0042fe /><rect x=948 y=516 fill=#003fff /><rect x=954 y=516 fill=#0b3dff /><rect x=960 y=516 fill=#193aff /><rect x=966 y=516 fill=#2837ff /><rect x=972 y=516 fill=#3634ff /><rect x=978 y=516 fill=#4631ff /><rect x=984 y=516 fill=#552dff /><rect x=990 y=516 fill=#652aff /><rect x=996 y=516 fill=#7627ff /><rect x=1002 y=516 fill=#8723ff /><rect x=1008 y=516 fill=#9920ff /><rect x=1014 y=516 fill=#ac1cff /><rect x=1020 y=516 fill=#bf18ff /><rect x=1026 y=516 fill=#d214ff /><rect x=1032 y=516 fill=#e710ff /><rect x=1038 y=516 fill=#fc0bff /><rect x=1044 y=516 fill=#ff07ee /><rect x=1050 y=516 fill=#ff02db /><rect x=1056 y=516 fill=#ff00cb /><rect x=1062 y=516 fill=#ff00bd /><rect x=1068 y=516 fill=#ff00b0 /><rect x=1074 y=516 fill=#ff00a4 /><rect x=1080 y=516 fill=#ff0099 /><rect x=1086 y=516 fill=#fe008f /><rect x=1092 y=516 fill=#fe0087 /><rect x=1098 y=516 fill=#fe007e /><rect x=1104 y=516 fill=#fe0077 /><rect x=1110 y=516 fill=#fe0070 /><rect x=1116 y=516 fill=#fe0069 /><rect x=1122 y=516 fill=#fe0063 /><rect x=1128 y=516 fill=#fe005e /><rect x=1134 y=516 fill=#fd0058 /><rect x=1140 y=516 fill=#fd0053 /><rect x=1146 y=516 fill=#fd004f /><rect x=1152 y=516 fill=#fd004a /><rect x=1158 y=516 fill=#fc0046 /><rect x=1164 y=516 fill=#f80041 />
<rect x=888 y=522 fill=#004cf2 /><rect x=894 y=522 fill=#004bf3 /><rect x=900 y=522 fill=#0049f5 /><rect x=906 y=522 fill=#0047f7 /><rect x=912 y=522 fill=#0045f8 /><rect x=918 y=522 fill=#0043f9 /><rect x=924 y=522 fill=#0041fb /><rect x=930 y=522 fill=#003ffc /><rect x=936 y=522 fill=#003dfd /><rect x=942 y=522 fill=#003afe /><rect x=948 y=522 fill=#0138ff /><rect x=954 y=522 fill=#0f35ff /><rect x=960 y=522 fill=#1c32ff /><rect x=966 y=522 fill=#2b2fff /><rect x=972 y=522 fill=#392cff /><rect x=978 y=522 fill=#4829ff /><rect x=984 y=522 fill=#5826ff /><rect x=990 y=522 fill=#6822ff /><rect x=996 y=522 fill=#781fff /><rect x=1002 y=522 fill=#891bff /><rect x=1008 y=522 fill=#9a18ff /><rect x=1014 y=522 fill=#ac14ff /><rect x=1020 y=522 fill=#bf10ff /><rect x=1026 y=522 fill=#d20cff /><rect x=1032 y=522 fill=#e608ff /><rect x=1038 y=522 fill=#fb03ff /><rect x=1044 y=522 fill=#ff00ef /><rect x=1050 y=522 fill=#ff00dd /><rect x=1056 y=522 fill=#ff00cd /><rect x=1062 y=522 fill=#ff00be /><rect x=1068 y=522 fill=#ff00b1 /><rect x=1074 y=522 fill=#fe00a6 /><rect x=1080 y=522 fill=#fe009b /><rect x=1086 y=522 fill=#fe0091 /><rect x=1092 y=522 fill=#fe0088 /><rect x=1098 y=522 fill=#fe0080 /><rect x=1104 y=522 fill=#fe0079 /><rect x=1110 y=522 fill=#fe0072 /><rect x=1116 y=522 fill=#fe006b /><rect x=1122 y=522 fill=#fe0065 /><rect x=1128 y=522 fill=#fd005f /><rect x=1134 y=522 fill=#fd005a /><rect x=1140 y=522 fill=#fd0055 /><rect x=1146 y=522 fill=#fd0050 /><rect x=1152 y=522 fill=#fd004c />
<rect x=894 y=528 fill=#0044f3 /><rect x=900 y=528 fill=#0042f4 /><rect x=906 y=528 fill=#0041f6 /><rect x=912 y=528 fill=#003ff8 /><rect x=918 y=528 fill=#003df9 /><rect x=924 y=528 fill=#003afa /><rect x=930 y=528 fill=#0038fc /><rect x=936 y=528 fill=#0036fd /><rect x=942 y=528 fill=#0033fe /><rect x=948 y=528 fill=#0531ff /><rect x=954 y=528 fill=#122eff /><rect x=960 y=528 fill=#202bff /><rect x=966 y=528 fill=#2e28ff /><rect x=972 y=528 fill=#3c25ff /><rect x=978 y=528 fill=#4b22ff /><rect x=984 y=528 fill=#5a1eff /><rect x=990 y=528 fill=#691bff /><rect x=996 y=528 fill=#7a17ff /><rect x=1002 y=528 fill=#8a14ff /><rect x=1008 y=528 fill=#9b10ff /><rect x=1014 y=528 fill=#ad0cff /><rect x=1020 y=528 fill=#bf08ff /><rect x=1026 y=528 fill=#d204ff /><rect x=1032 y=528 fill=#e600ff /><rect x=1038 y=528 fill=#fa00ff /><rect x=1044 y=528 fill=#ff00f0 /><rect x=1050 y=528 fill=#ff00de /><rect x=1056 y=528 fill=#fe00ce /><rect x=1062 y=528 fill=#fe00c0 /><rect x=1068 y=528 fill=#fe00b3 /><rect x=1074 y=528 fill=#fe00a7 /><rect x=1080 y=528 fill=#fe009d /><rect x=1086 y=528 fill=#fe0093 /><rect x=1092 y=528 fill=#fe008a /><rect x=1098 y=528 fill=#fe0082 /><rect x=1104 y=528 fill=#fe007a /><rect x=1110 y=528 fill=#fe0073 /><rect x=1116 y=528 fill=#fd006d /><rect x=1122 y=528 fill=#fd0067 /><rect x=1128 y=528 fill=#fd0061 /><rect x=1134 y=528 fill=#fd005c /><rect x=1140 y=528 fill=#fd0057 />
<rect x=894 y=534 fill=#003ef2 /><rect x=900 y=534 fill=#003cf4 /><rect x=906 y=534 fill=#003af6 /><rect x=912 y=534 fill=#0038f7 /><rect x=918 y=534 fill=#0036f9 /><rect x=924 y=534 fill=#0034fa /><rect x=930 y=534 fill=#0031fc /><rect x=936 y=534 fill=#002ffd /><rect x=942 y=534 fill=#002dff /><rect x=948 y=534 fill=#082aff /><rect x=954 y=534 fill=#1527ff /><rect x=960 y=534 fill=#2324ff /><rect x=966 y=534 fill=#3021ff /><rect x=972 y=534 fill=#3e1eff /><rect x=978 y=534 fill=#4d1aff /><rect x=984 y=534 fill=#5c17ff /><rect x=990 y=534 fill=#6b14ff /><rect x=996 y=534 fill=#7b10ff /><rect x=1002 y=534 fill=#8c0cff /><rect x=1008 y=534 fill=#9c09ff /><rect x=1014 y=534 fill=#ae05ff /><rect x=1020 y=534 fill=#c001ff /><rect x=1026 y=534 fill=#d200ff /><rect x=1032 y=534 fill=#e500ff /><rect x=1038 y=534 fill=#f900ff /><rect x=1044 y=534 fill=#fe00f1 /><rect x=1050 y=534 fill=#fe00df /><rect x=1056 y=534 fill=#fe00cf /><rect x=1062 y=534 fill=#fe00c1 /><rect x=1068 y=534 fill=#fe00b5 /><rect x=1074 y=534 fill=#fe00a9 /><rect x=1080 y=534 fill=#fe009e /><rect x=1086 y=534 fill=#fe0095 /><rect x=1092 y=534 fill=#fe008c /><rect x=1098 y=534 fill=#fe0084 /><rect x=1104 y=534 fill=#fe007c /><rect x=1110 y=534 fill=#fd0075 /><rect x=1116 y=534 fill=#fd006f /><rect x=1122 y=534 fill=#fd0069 /><rect x=1128 y=534 fill=#fd0063 />
<rect x=894 y=540 fill=#0037f1 /><rect x=900 y=540 fill=#0036f3 /><rect x=906 y=540 fill=#0034f5 /><rect x=912 y=540 fill=#0032f7 /><rect x=918 y=540 fill=#0030f9 /><rect x=924 y=540 fill=#002dfa /><rect x=930 y=540 fill=#002bfc /><rect x=936 y=540 fill=#0029fd /><rect x=942 y=540 fill=#0026ff /><rect x=948 y=540 fill=#0b23ff /><rect x=954 y=540 fill=#1820ff /><rect x=960 y=540 fill=#261dff /><rect x=966 y=540 fill=#331aff /><rect x=972 y=540 fill=#4117ff /><rect x=978 y=540 fill=#4f13ff /><rect x=984 y=540 fill=#5e10ff /><rect x=990 y=540 fill=#6d0dff /><rect x=996 y=540 fill=#7d09ff /><rect x=1002 y=540 fill=#8d05ff /><rect x=1008 y=540 fill=#9d01ff /><rect x=1014 y=540 fill=#ae00ff /><rect x=1020 y=540 fill=#c000ff /><rect x=1026 y=540 fill=#d200fe /><rect x=1032 y=540 fill=#e400fe /><rect x=1038 y=540 fill=#f800fe /><rect x=1044 y=540 fill=#fe00f1 /><rect x=1050 y=540 fill=#fe00e0 /><rect x=1056 y=540 fill=#fe00d1 /><rect x=1062 y=540 fill=#fe00c3 /><rect x=1068 y=540 fill=#fe00b6 /><rect x=1074 y=540 fill=#fe00ab /><rect x=1080 y=540 fill=#fe00a0 /><rect x=1086 y=540 fill=#fe0097 /><rect x=1092 y=540 fill=#fe008e /><rect x=1098 y=540 fill=#fd0086 /><rect x=1104 y=540 fill=#fd007e /><rect x=1110 y=540 fill=#fd0077 /><rect x=1116 y=540 fill=#fd0071 />
<rect x=900 y=546 fill=#0030f3 /><rect x=906 y=546 fill=#002ef5 /><rect x=912 y=546 fill=#002cf7 /><rect x=918 y=546 fill=#0029f9 /><rect x=924 y=546 fill=#0027fa /><rect x=930 y=546 fill=#0025fc /><rect x=936 y=546 fill=#0022fe /><rect x=942 y=546 fill=#0220ff /><rect x=948 y=546 fill=#0f1dff /><rect x=954 y=546 fill=#1b1aff /><rect x=960 y=546 fill=#2817ff /><rect x=966 y=546 fill=#3613ff /><rect x=972 y=546 fill=#4310ff /><rect x=978 y=546 fill=#520dff /><rect x=984 y=546 fill=#6009ff /><rect x=990 y=546 fill=#6f06ff /><rect x=996 y=546 fill=#7e02ff /><rect x=1002 y=546 fill=#8e00ff /><rect x=1008 y=546 fill=#9e00ff /><rect x=1014 y=546 fill=#af00fe /><rect x=1020 y=546 fill=#c000fe /><rect x=1026 y=546 fill=#d100fe /><rect x=1032 y=546 fill=#e400fe /><rect x=1038 y=546 fill=#f600fe /><rect x=1044 y=546 fill=#fe00f2 /><rect x=1050 y=546 fill=#fe00e1 /><rect x=1056 y=546 fill=#fe00d2 /><rect x=1062 y=546 fill=#fe00c4 /><rect x=1068 y=546 fill=#fe00b7 /><rect x=1074 y=546 fill=#fe00ac /><rect x=1080 y=546 fill=#fd00a2 /><rect x=1086 y=546 fill=#fd0098 /><rect x=1092 y=546 fill=#fd008f /><rect x=1098 y=546 fill=#fd0087 /><rect x=1104 y=546 fill=#fd0080 />
<rect x=900 y=552 fill=#002af2 /><rect x=906 y=552 fill=#0028f4 /><rect x=912 y=552 fill=#0026f6 /><rect x=918 y=552 fill=#0023f8 /><rect x=924 y=552 fill=#0021fa /><rect x=930 y=552 fill=#001ffc /><rect x=936 y=552 fill=#001cfe /><rect x=942 y=552 fill=#0619ff /><rect x=948 y=552 fill=#1216ff /><rect x=954 y=552 fill=#1e13ff /><rect x=960 y=552 fill=#2b10ff /><rect x=966 y=552 fill=#380dff /><rect x=972 y=552 fill=#460aff /><rect x=978 y=552 fill=#5406ff /><rect x=984 y=552 fill=#6203ff /><rect x=990 y=552 fill=#7100ff /><rect x=996 y=552 fill=#8000fe /><rect x=1002 y=552 fill=#8f00fe /><rect x=1008 y=552 fill=#9f00fe /><rect x=1014 y=552 fill=#af00fe /><rect x=1020 y=552 fill=#c000fe /><rect x=1026 y=552 fill=#d100fd /><rect x=1032 y=552 fill=#e300fd /><rect x=1038 y=552 fill=#f500fd /><rect x=1044 y=552 fill=#fd00f3 /><rect x=1050 y=552 fill=#fd00e2 /><rect x=1056 y=552 fill=#fd00d3 /><rect x=1062 y=552 fill=#fd00c5 /><rect x=1068 y=552 fill=#fd00b9 /><rect x=1074 y=552 fill=#fd00ae /><rect x=1080 y=552 fill=#fd00a3 /><rect x=1086 y=552 fill=#fd009a /><rect x=1092 y=552 fill=#fd0091 />
<rect x=906 y=558 fill=#0022f4 /><rect x=912 y=558 fill=#0020f6 /><rect x=918 y=558 fill=#001ef8 /><rect x=924 y=558 fill=#001bfb /><rect x=930 y=558 fill=#0019fd /><rect x=936 y=558 fill=#0016ff /><rect x=942 y=558 fill=#0913ff /><rect x=948 y=558 fill=#1510ff /><rect x=954 y=558 fill=#210dff /><rect x=960 y=558 fill=#2e0aff /><rect x=966 y=558 fill=#3b07ff /><rect x=972 y=558 fill=#4803ff /><rect x=978 y=558 fill=#5600ff /><rect x=984 y=558 fill=#6400fe /><rect x=990 y=558 fill=#7200fe /><rect x=996 y=558 fill=#8100fe /><rect x=1002 y=558 fill=#9000fd /><rect x=1008 y=558 fill=#9f00fd /><rect x=1014 y=558 fill=#af00fd /><rect x=1020 y=558 fill=#c000fd /><rect x=1026 y=558 fill=#d100fd /><rect x=1032 y=558 fill=#e200fd /><rect x=1038 y=558 fill=#f400fd /><rect x=1044 y=558 fill=#fd00f3 /><rect x=1050 y=558 fill=#fd00e3 /><rect x=1056 y=558 fill=#fd00d4 /><rect x=1062 y=558 fill=#fd00c6 /><rect x=1068 y=558 fill=#fd00ba /><rect x=1074 y=558 fill=#fd00af /><rect x=1080 y=558 fill=#fd00a5 />
<rect x=906 y=564 fill=#001df4 /><rect x=912 y=564 fill=#001af6 /><rect x=918 y=564 fill=#0018f8 /><rect x=924 y=564 fill=#0016fb /><rect x=930 y=564 fill=#0013fd /><rect x=936 y=564 fill=#0010ff /><rect x=942 y=564 fill=#0c0dff /><rect x=948 y=564 fill=#180aff /><rect x=954 y=564 fill=#2407ff /><rect x=960 y=564 fill=#3004ff /><rect x=966 y=564 fill=#3d01ff /><rect x=972 y=564 fill=#4a00fe /><rect x=978 y=564 fill=#5700fe /><rect x=984 y=564 fill=#6500fd /><rect x=990 y=564 fill=#7300fd /><rect x=996 y=564 fill=#8100fd /><rect x=1002 y=564 fill=#9000fd /><rect x=1008 y=564 fill=#9f00fc /><rect x=1014 y=564 fill=#af00fc /><rect x=1020 y=564 fill=#bf00fc /><rect x=1026 y=564 fill=#d000fc /><rect x=1032 y=564 fill=#e100fc /><rect x=1038 y=564 fill=#f300fc /><rect x=1044 y=564 fill=#fc00f4 /><rect x=1050 y=564 fill=#fc00e4 /><rect x=1056 y=564 fill=#fd00d5 /><rect x=1062 y=564 fill=#fd00c8 /><rect x=1068 y=564 fill=#fd00bb />
<rect x=912 y=570 fill=#0015f6 /><rect x=918 y=570 fill=#0013f9 /><rect x=924 y=570 fill=#0010fb /><rect x=930 y=570 fill=#000dfd /><rect x=936 y=570 fill=#030bff /><rect x=942 y=570 fill=#0f08ff /><rect x=948 y=570 fill=#1a05ff /><rect x=954 y=570 fill=#2601ff /><rect x=960 y=570 fill=#3300ff /><rect x=966 y=570 fill=#3f00fe /><rect x=972 y=570 fill=#4c00fd /><rect x=978 y=570 fill=#5900fd /><rect x=984 y=570 fill=#6600fc /><rect x=990 y=570 fill=#7400fc /><rect x=996 y=570 fill=#8200fc /><rect x=1002 y=570 fill=#9100fc /><rect x=1008 y=570 fill=#a000fc /><rect x=1014 y=570 fill=#af00fc /><rect x=1020 y=570 fill=#bf00fc /><rect x=1026 y=570 fill=#cf00fc /><rect x=1032 y=570 fill=#e000fc /><rect x=1038 y=570 fill=#f200fc /><rect x=1044 y=570 fill=#fc00f4 /><rect x=1050 y=570 fill=#fc00e4 /><rect x=1056 y=570 fill=#fc00d6 />
<rect x=912 y=576 fill=#0010f6 /><rect x=918 y=576 fill=#000df9 /><rect x=924 y=576 fill=#000bfb /><rect x=930 y=576 fill=#0008fe /><rect x=936 y=576 fill=#0605ff /><rect x=942 y=576 fill=#1202ff /><rect x=948 y=576 fill=#1d00ff /><rect x=954 y=576 fill=#2900fe /><rect x=960 y=576 fill=#3500fd /><rect x=966 y=576 fill=#4100fc /><rect x=972 y=576 fill=#4e00fc /><rect x=978 y=576 fill=#5a00fb /><rect x=984 y=576 fill=#6800fb /><rect x=990 y=576 fill=#7500fb /><rect x=996 y=576 fill=#8300fb /><rect x=1002 y=576 fill=#9100fb /><rect x=1008 y=576 fill=#a000fb /><rect x=1014 y=576 fill=#af00fb /><rect x=1020 y=576 fill=#bf00fb /><rect x=1026 y=576 fill=#cf00fb /><rect x=1032 y=576 fill=#df00fb /><rect x=1038 y=576 fill=#f100fb /><rect x=1044 y=576 fill=#fb00f5 />
<rect x=912 y=582 fill=#000bf6 /><rect x=918 y=582 fill=#0008f9 /><rect x=924 y=582 fill=#0005fc /><rect x=930 y=582 fill=#0003ff /><rect x=936 y=582 fill=#0900ff /><rect x=942 y=582 fill=#1400fe /><rect x=948 y=582 fill=#2000fd /><rect x=954 y=582 fill=#2b00fc /><rect x=960 y=582 fill=#3700fb /><rect x=966 y=582 fill=#4300fb /><rect x=972 y=582 fill=#4f00fa /><rect x=978 y=582 fill=#5c00fa /><rect x=984 y=582 fill=#6900fa /><rect x=990 y=582 fill=#7600f9 /><rect x=996 y=582 fill=#8400f9 /><rect x=1002 y=582 fill=#9200f9 /><rect x=1008 y=582 fill=#a000fa /><rect x=1014 y=582 fill=#af00fa /><rect x=1020 y=582 fill=#be00fa /><rect x=1026 y=582 fill=#ce00fa /><rect x=1032 y=582 fill=#de00fa />
<rect x=918 y=588 fill=#0003f9 /><rect x=924 y=588 fill=#0000fc /><rect x=930 y=588 fill=#0100fe /><rect x=936 y=588 fill=#0c00fd /><rect x=942 y=588 fill=#1700fb /><rect x=948 y=588 fill=#2200fb /><rect x=954 y=588 fill=#2d00fa /><rect x=960 y=588 fill=#3900f9 /><rect x=966 y=588 fill=#4400f9 /><rect x=972 y=588 fill=#5000f8 /><rect x=978 y=588 fill=#5d00f8 /><rect x=984 y=588 fill=#6900f8 /><rect x=990 y=588 fill=#7700f8 /><rect x=996 y=588 fill=#8400f8 /><rect x=1002 y=588 fill=#9200f8 /><rect x=1008 y=588 fill=#a000f8 /><rect x=1014 y=588 fill=#af00f9 /><rect x=1020 y=588 fill=#be00f9 />
<rect x=918 y=594 fill=#0000f8 /><rect x=924 y=594 fill=#0000fa /><rect x=930 y=594 fill=#0400fb /><rect x=936 y=594 fill=#0e00fa /><rect x=942 y=594 fill=#1900f9 /><rect x=948 y=594 fill=#2400f8 /><rect x=954 y=594 fill=#2f00f8 /><rect x=960 y=594 fill=#3a00f7 /><rect x=966 y=594 fill=#4600f7 /><rect x=972 y=594 fill=#5200f7 /><rect x=978 y=594 fill=#5e00f6 /><rect x=984 y=594 fill=#6a00f6 /><rect x=990 y=594 fill=#7700f6 /><rect x=996 y=594 fill=#8400f7 /><rect x=1002 y=594 fill=#9200f7 /><rect x=1008 y=594 fill=#a000f7 />
<rect x=924 y=600 fill=#0000f7 /><rect x=930 y=600 fill=#0700f8 /><rect x=936 y=600 fill=#1100f8 /><rect x=942 y=600 fill=#1b00f7 /><rect x=948 y=600 fill=#2600f6 /><rect x=954 y=600 fill=#3100f5 /><rect x=960 y=600 fill=#3c00f5 /><rect x=966 y=600 fill=#4700f5 /><rect x=972 y=600 fill=#5300f5 /><rect x=978 y=600 fill=#5f00f5 /><rect x=984 y=600 fill=#6b00f5 /><rect x=990 y=600 fill=#7800f5 /><rect x=996 y=600 fill=#8500f5 />
<rect x=924 y=606 fill=#0000f5 /><rect x=930 y=606 fill=#0900f5 /><rect x=936 y=606 fill=#1300f5 /><rect x=942 y=606 fill=#1d00f4 /><rect x=948 y=606 fill=#2800f3 /><rect x=954 y=606 fill=#3200f3 /><rect x=960 y=606 fill=#3d00f3 /><rect x=966 y=606 fill=#4800f3 /><rect x=972 y=606 fill=#5400f2 /><rect x=978 y=606 fill=#5f00f3 /><rect x=984 y=606 fill=#6c00f3 />
<rect x=930 y=612 fill=#0b00f3 /><rect x=936 y=612 fill=#1500f2 /><rect x=942 y=612 fill=#1f00f1 /><rect x=948 y=612 fill=#2900f1 /><rect x=954 y=612 fill=#3400f0 /><rect x=960 y=612 fill=#3e00f0 /><rect x=966 y=612 fill=#4900f0 /><rect x=972 y=612 fill=#5500f0 />
<rect x=936 y=618 fill=#1700f0 /><rect x=942 y=618 fill=#2100ef /><rect x=948 y=618 fill=#2b00ee /><rect x=954 y=618 fill=#3500ed /><rect x=960 y=618 fill=#4000ed />
</g>
<path d="M820 80H1320V640H820Z M1245.7 412.5 L1028.9 237.2 L933.3 587.8 Z" fill="#000" fill-opacity="0.30" fill-rule="evenodd"/>
</g>
<rect x="836.9" y="81.6" width="1.4" height="551.2" fill="#8c8c8c"/>
<rect x="1374.1" y="81.6" width="1.2" height="546.2" fill="#8c8c8c"/>
<rect x="837.6" y="81.0" width="537.1" height="1.2" fill="#8c8c8c"/>
<rect x="832.6" y="627.1" width="542.1" height="1.4" fill="#8c8c8c"/>
<rect x="836.9" y="627.8" width="1.4" height="5.5" fill="#8c8c8c"/>
<text class="m" style="font-size:12.2px" x="837.6" y="645.8">0</text>
<rect x="900.7" y="627.8" width="1.4" height="5.5" fill="#8c8c8c"/>
<text class="m" style="font-size:12.2px" x="901.4" y="645.8">0,1</text>
<rect x="964.4" y="627.8" width="1.4" height="5.5" fill="#8c8c8c"/>
<text class="m" style="font-size:12.2px" x="965.1" y="645.8">0,2</text>
<rect x="1028.2" y="627.8" width="1.4" height="5.5" fill="#8c8c8c"/>
<text class="m" style="font-size:12.2px" x="1028.9" y="645.8">0,3</text>
<rect x="1092.0" y="627.8" width="1.4" height="5.5" fill="#8c8c8c"/>
<text class="m" style="font-size:12.2px" x="1092.7" y="645.8">0,4</text>
<rect x="1155.8" y="627.8" width="1.4" height="5.5" fill="#8c8c8c"/>
<text class="m" style="font-size:12.2px" x="1156.5" y="645.8">0,5</text>
<rect x="1219.5" y="627.8" width="1.4" height="5.5" fill="#8c8c8c"/>
<text class="m" style="font-size:12.2px" x="1220.2" y="645.8">0,6</text>
<rect x="1283.3" y="627.8" width="1.4" height="5.5" fill="#8c8c8c"/>
<text class="m" style="font-size:12.2px" x="1284.0" y="645.8">0,7</text>
<rect x="1347.1" y="627.8" width="1.4" height="5.5" fill="#8c8c8c"/>
<text class="m" style="font-size:12.2px" x="1347.8" y="645.8">0,8</text>
<rect x="832.6" y="628.20" width="5" height="1.2" fill="#8c8c8c"/>
<text class="r" style="font-size:12.2px" x="832.4" y="633.4">0</text>
<rect x="832.6" y="595.66" width="5" height="1.2" fill="#8c8c8c"/>
<text class="r" style="font-size:12.2px" x="832.4" y="600.9">0,05</text>
<rect x="832.6" y="563.12" width="5" height="1.2" fill="#8c8c8c"/>
<text class="r" style="font-size:12.2px" x="832.4" y="568.3">0,1</text>
<rect x="832.6" y="530.58" width="5" height="1.2" fill="#8c8c8c"/>
<text class="r" style="font-size:12.2px" x="832.4" y="535.8">0,15</text>
<rect x="832.6" y="498.04" width="5" height="1.2" fill="#8c8c8c"/>
<text class="r" style="font-size:12.2px" x="832.4" y="503.2">0,2</text>
<rect x="832.6" y="465.50" width="5" height="1.2" fill="#8c8c8c"/>
<text class="r" style="font-size:12.2px" x="832.4" y="470.7">0,25</text>
<rect x="832.6" y="432.96" width="5" height="1.2" fill="#8c8c8c"/>
<text class="r" style="font-size:12.2px" x="832.4" y="438.2">0,3</text>
<rect x="832.6" y="400.42" width="5" height="1.2" fill="#8c8c8c"/>
<text class="r" style="font-size:12.2px" x="832.4" y="405.6">0,35</text>
<rect x="832.6" y="367.88" width="5" height="1.2" fill="#8c8c8c"/>
<text class="r" style="font-size:12.2px" x="832.4" y="373.1">0,4</text>
<rect x="832.6" y="335.34" width="5" height="1.2" fill="#8c8c8c"/>
<text class="r" style="font-size:12.2px" x="832.4" y="340.5">0,45</text>
<rect x="832.6" y="302.80" width="5" height="1.2" fill="#8c8c8c"/>
<text class="r" style="font-size:12.2px" x="832.4" y="308.0">0,5</text>
<rect x="832.6" y="270.26" width="5" height="1.2" fill="#8c8c8c"/>
<text class="r" style="font-size:12.2px" x="832.4" y="275.5">0,55</text>
<rect x="832.6" y="237.72" width="5" height="1.2" fill="#8c8c8c"/>
<text class="r" style="font-size:12.2px" x="832.4" y="242.9">0,6</text>
<rect x="832.6" y="205.18" width="5" height="1.2" fill="#8c8c8c"/>
<text class="r" style="font-size:12.2px" x="832.4" y="210.4">0,65</text>
<rect x="832.6" y="172.64" width="5" height="1.2" fill="#8c8c8c"/>
<text class="r" style="font-size:12.2px" x="832.4" y="177.8">0,7</text>
<rect x="832.6" y="140.10" width="5" height="1.2" fill="#8c8c8c"/>
<text class="r" style="font-size:12.2px" x="832.4" y="145.3">0,75</text>
<rect x="832.6" y="107.56" width="5" height="1.2" fill="#8c8c8c"/>
<text class="r" style="font-size:12.2px" x="832.4" y="112.8">0,8</text>
<text class="t" x="1091.5" y="76.8">CIE 1931 xy</text>
<circle cx="1008.7" cy="456.7" r="4.3" fill="#a0a0c4" fill-opacity="0.8" stroke="#000" stroke-width="1"/>
<circle cx="986.6" cy="493.6" r="4.3" fill="#8c8cc8" fill-opacity="0.8" stroke="#000" stroke-width="1"/>
<circle cx="966.2" cy="529.4" r="4.3" fill="#7070c8" fill-opacity="0.8" stroke="#000" stroke-width="1"/>
<circle cx="954.9" cy="539.1" r="4.3" fill="#5050c0" fill-opacity="0.8" stroke="#000" stroke-width="1"/>
<circle cx="946.7" cy="543.6" r="4.3" fill="#1010b0" fill-opacity="0.8" stroke="#000" stroke-width="1"/>
<circle cx="1034.4" cy="379.7" r="4.3" fill="#a2b2a2" fill-opacity="0.8" stroke="#000" stroke-width="1"/>
<circle cx="1037.2" cy="342.2" r="4.3" fill="#98b898" fill-opacity="0.8" stroke="#000" stroke-width="1"/>
<circle cx="1039.5" cy="306.4" r="4.3" fill="#86b886" fill-opacity="0.8" stroke="#000" stroke-width="1"/>
<circle cx="1045.1" cy="272.6" r="4.3" fill="#60b060" fill-opacity="0.8" stroke="#000" stroke-width="1"/>
<circle cx="1047.3" cy="266.2" r="4.3" fill="#10a028" fill-opacity="0.8" stroke="#000" stroke-width="1"/>
<circle cx="1047.3" cy="390.4" r="4.3" fill="#b4b4a0" fill-opacity="0.8" stroke="#000" stroke-width="1"/>
<circle cx="1064.4" cy="362.8" r="4.3" fill="#b6b690" fill-opacity="0.8" stroke="#000" stroke-width="1"/>
<circle cx="1079.3" cy="334.7" r="4.3" fill="#b4b478" fill-opacity="0.8" stroke="#000" stroke-width="1"/>
<circle cx="1095.2" cy="308.3" r="4.3" fill="#b4ac50" fill-opacity="0.8" stroke="#000" stroke-width="1"/>
<circle cx="1096.6" cy="302.7" r="4.3" fill="#bcac20" fill-opacity="0.8" stroke="#000" stroke-width="1"/>
<circle cx="1072.6" cy="413.1" r="4.3" fill="#b89c9c" fill-opacity="0.8" stroke="#000" stroke-width="1"/>
<circle cx="1114.3" cy="408.5" r="4.3" fill="#bc8888" fill-opacity="0.8" stroke="#000" stroke-width="1"/>
<circle cx="1160.4" cy="403.3" r="4.3" fill="#c06c6c" fill-opacity="0.8" stroke="#000" stroke-width="1"/>
<circle cx="1215.0" cy="396.0" r="4.3" fill="#c83030" fill-opacity="0.8" stroke="#000" stroke-width="1"/>
<circle cx="1216.6" cy="394.9" r="4.3" fill="#d01010" fill-opacity="0.8" stroke="#000" stroke-width="1"/>
<circle cx="1021.5" cy="418.8" r="4.3" fill="#a2b6b6" fill-opacity="0.8" stroke="#000" stroke-width="1"/>
<circle cx="1010.9" cy="420.2" r="4.3" fill="#96b8b8" fill-opacity="0.8" stroke="#000" stroke-width="1"/>
<circle cx="1001.6" cy="421.4" r="4.3" fill="#84b8b8" fill-opacity="0.8" stroke="#000" stroke-width="1"/>
<circle cx="992.4" cy="422.3" r="4.3" fill="#68b4b4" fill-opacity="0.8" stroke="#000" stroke-width="1"/>
<circle cx="983.1" cy="422.3" r="4.3" fill="#30b0b0" fill-opacity="0.8" stroke="#000" stroke-width="1"/>
<circle cx="1029.4" cy="442.9" r="4.3" fill="#b4a0b4" fill-opacity="0.8" stroke="#000" stroke-width="1"/>
<circle cx="1027.7" cy="467.4" r="4.3" fill="#b88cb8" fill-opacity="0.8" stroke="#000" stroke-width="1"/>
<circle cx="1025.4" cy="489.8" r="4.3" fill="#bc78bc" fill-opacity="0.8" stroke="#000" stroke-width="1"/>
<circle cx="1025.3" cy="499.4" r="4.3" fill="#c440bc" fill-opacity="0.8" stroke="#000" stroke-width="1"/>
<circle cx="1025.3" cy="500.8" r="4.3" fill="#c000ac" fill-opacity="0.8" stroke="#000" stroke-width="1"/>
<circle cx="1029.5" cy="421.6" r="4.3" fill="#ffffff" fill-opacity="0.8" stroke="#000" stroke-width="1"/>
<rect x="1072.6" y="406.9" width="12.4" height="12.4" fill="none" stroke="#fff" stroke-width="1.4"/>
<rect x="1114.3" y="406.7" width="12.4" height="12.4" fill="none" stroke="#fff" stroke-width="1.4"/>
<rect x="1156.0" y="406.6" width="12.4" height="12.4" fill="none" stroke="#fff" stroke-width="1.4"/>
<rect x="1197.8" y="406.5" width="12.4" height="12.4" fill="none" stroke="#fff" stroke-width="1.4"/>
<rect x="1239.5" y="406.3" width="12.4" height="12.4" fill="none" stroke="#fff" stroke-width="1.4"/>
<rect x="1029.2" y="371.8" width="12.4" height="12.4" fill="none" stroke="#fff" stroke-width="1.4"/>
<rect x="1027.6" y="336.6" width="12.4" height="12.4" fill="none" stroke="#fff" stroke-width="1.4"/>
<rect x="1025.9" y="301.4" width="12.4" height="12.4" fill="none" stroke="#fff" stroke-width="1.4"/>
<rect x="1024.3" y="266.2" width="12.4" height="12.4" fill="none" stroke="#fff" stroke-width="1.4"/>
<rect x="1022.7" y="231.0" width="12.4" height="12.4" fill="none" stroke="#fff" stroke-width="1.4"/>
<rect x="1010.1" y="441.9" width="12.4" height="12.4" fill="none" stroke="#fff" stroke-width="1.4"/>
<rect x="989.3" y="476.8" width="12.4" height="12.4" fill="none" stroke="#fff" stroke-width="1.4"/>
<rect x="968.6" y="511.8" width="12.4" height="12.4" fill="none" stroke="#fff" stroke-width="1.4"/>
<rect x="947.8" y="546.7" width="12.4" height="12.4" fill="none" stroke="#fff" stroke-width="1.4"/>
<rect x="927.1" y="581.6" width="12.4" height="12.4" fill="none" stroke="#fff" stroke-width="1.4"/>
<rect x="1019.6" y="407.0" width="12.4" height="12.4" fill="none" stroke="#fff" stroke-width="1.4"/>
<rect x="1008.3" y="407.1" width="12.4" height="12.4" fill="none" stroke="#fff" stroke-width="1.4"/>
<rect x="997.1" y="407.1" width="12.4" height="12.4" fill="none" stroke="#fff" stroke-width="1.4"/>
<rect x="985.9" y="407.1" width="12.4" height="12.4" fill="none" stroke="#fff" stroke-width="1.4"/>
<rect x="974.6" y="407.2" width="12.4" height="12.4" fill="none" stroke="#fff" stroke-width="1.4"/>
<rect x="1031.9" y="429.7" width="12.4" height="12.4" fill="none" stroke="#fff" stroke-width="1.4"/>
<rect x="1032.9" y="452.4" width="12.4" height="12.4" fill="none" stroke="#fff" stroke-width="1.4"/>
<rect x="1033.9" y="475.1" width="12.4" height="12.4" fill="none" stroke="#fff" stroke-width="1.4"/>
<rect x="1035.0" y="497.8" width="12.4" height="12.4" fill="none" stroke="#fff" stroke-width="1.4"/>
<rect x="1036.0" y="520.5" width="12.4" height="12.4" fill="none" stroke="#fff" stroke-width="1.4"/>
<rect x="1044.4" y="384.1" width="12.4" height="12.4" fill="none" stroke="#fff" stroke-width="1.4"/>
<rect x="1058.0" y="361.2" width="12.4" height="12.4" fill="none" stroke="#fff" stroke-width="1.4"/>
<rect x="1071.6" y="338.3" width="12.4" height="12.4" fill="none" stroke="#fff" stroke-width="1.4"/>
<rect x="1085.2" y="315.4" width="12.4" height="12.4" fill="none" stroke="#fff" stroke-width="1.4"/>
<rect x="1098.8" y="292.5" width="12.4" height="12.4" fill="none" stroke="#fff" stroke-width="1.4"/>
<rect x="1030.7" y="406.4" width="12.6" height="12.6" fill="#fff" fill-opacity="0.15" stroke="#000" stroke-width="1.4"/>
<rect x="1214.8" y="84.0" width="158.8" height="164.2" fill="#141414"/>
<rect x="1217.4" y="85.2" width="155.0" height="160.6" fill="url(#iL)"/>
<rect x="1217.4" y="85.2" width="155.0" height="160.6" fill="url(#iR)" mask="url(#im)"/>
<rect x="1216.9" y="84.7" width="156.0" height="161.6" fill="none" stroke="#808080" stroke-width="1.1"/>
<rect x="1288.4" y="158.4" width="13.2" height="13.2" fill="none" stroke="#fff" stroke-width="1.3"/>
<circle cx="1256.9" cy="207.3" r="4.5" fill="#aaa2bc" stroke="#000" stroke-width="1"/>
<circle cx="1358.4" cy="138.9" r="4.5" fill="#b4a6b8" stroke="#000" stroke-width="1"/>
</svg>
</body></html>
